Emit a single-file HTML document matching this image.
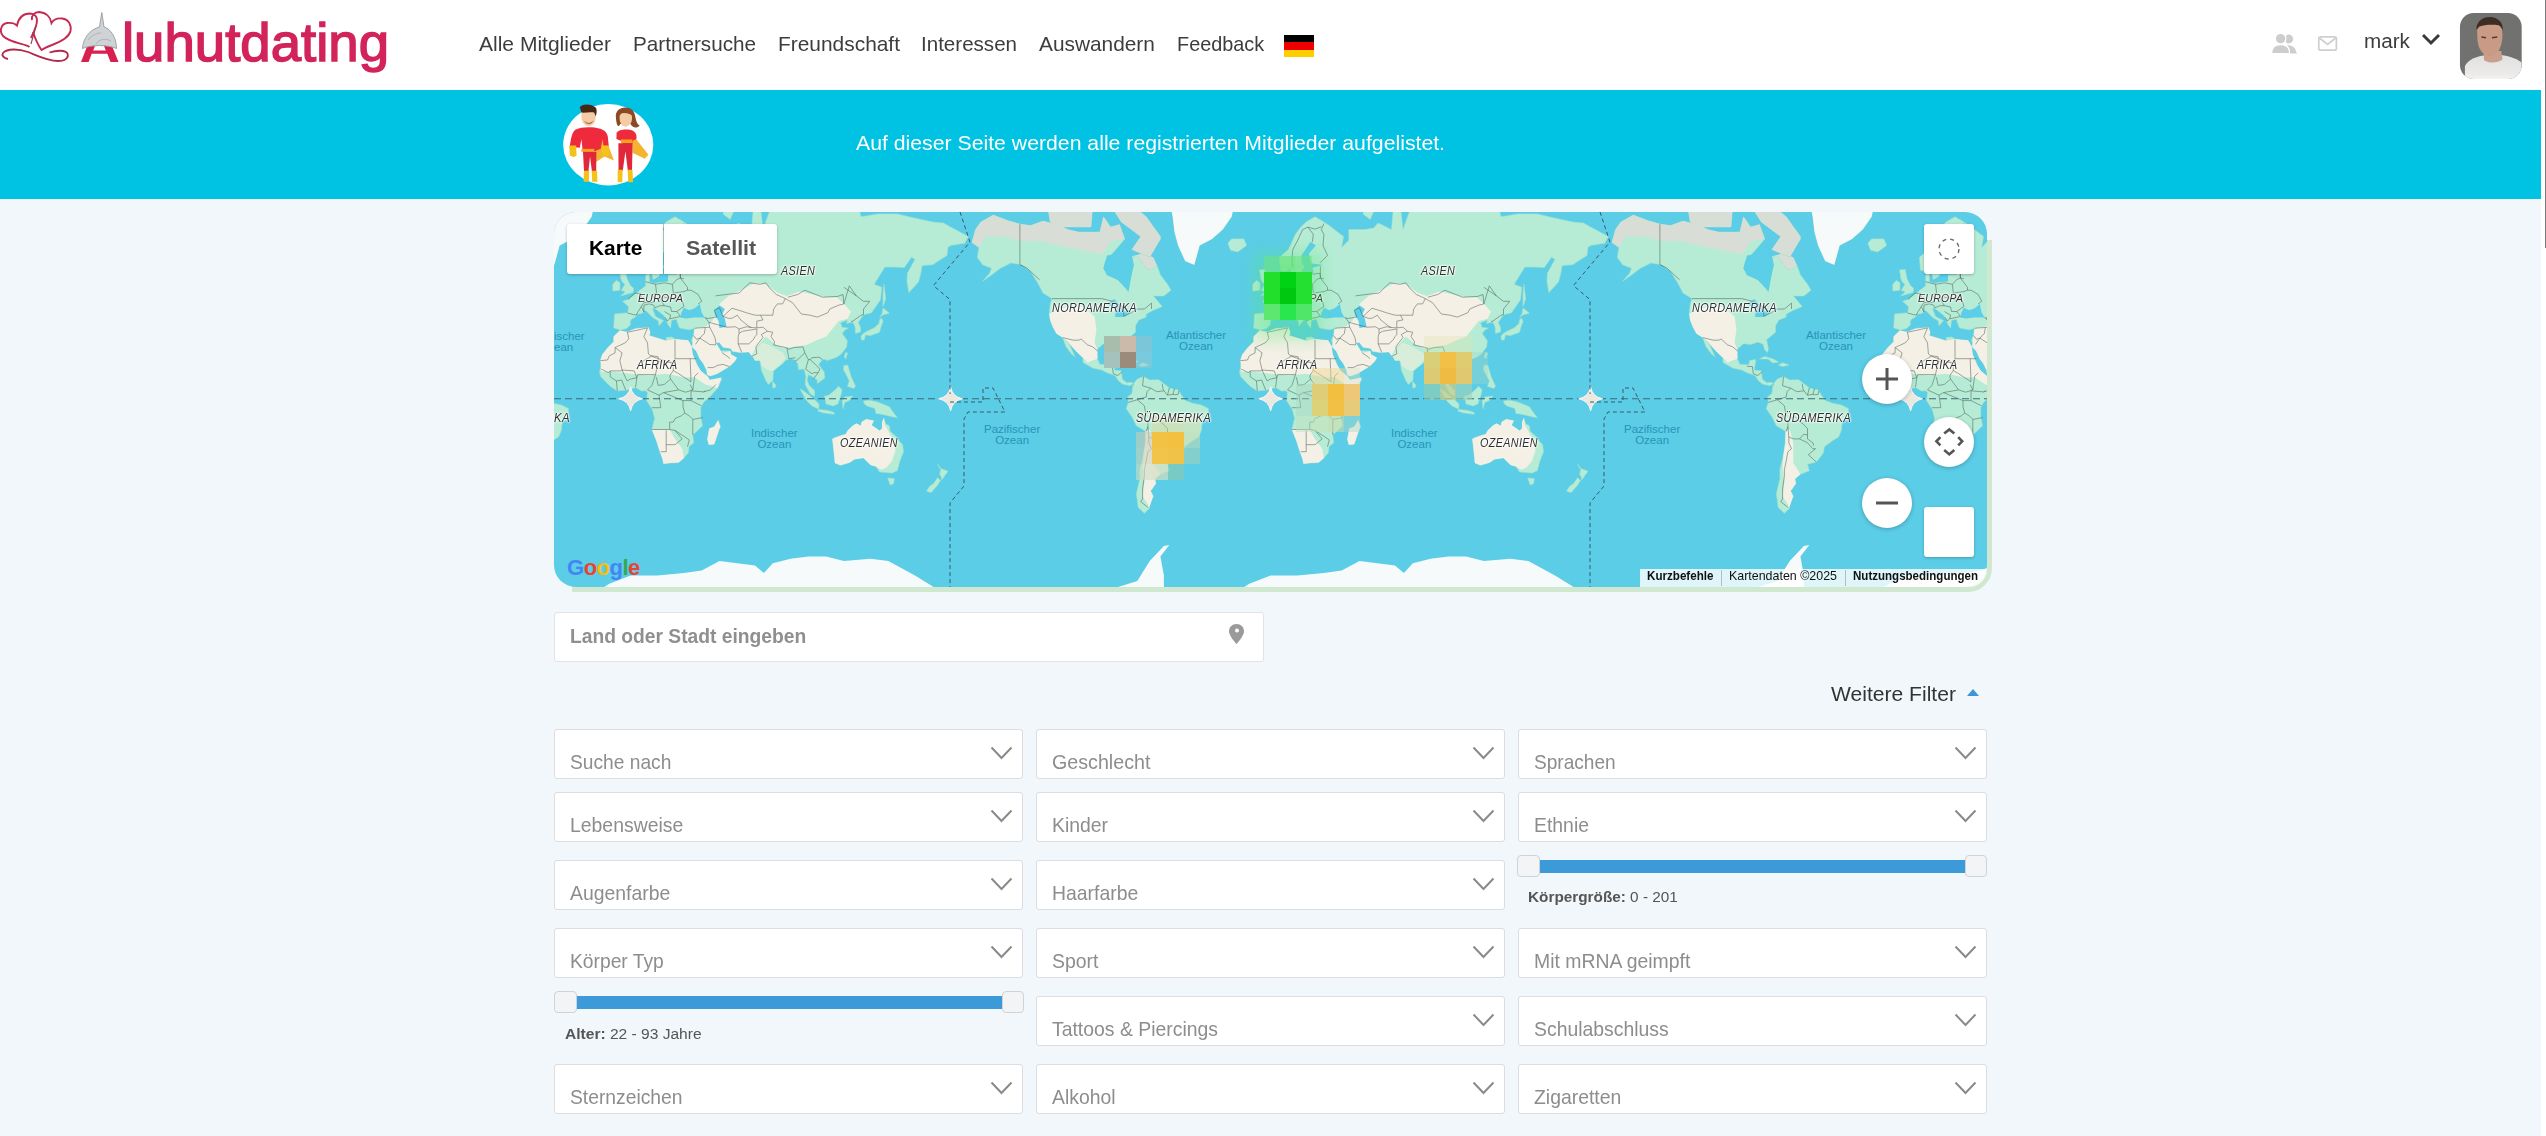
<!DOCTYPE html>
<html><head><meta charset="utf-8">
<style>
*{box-sizing:border-box;margin:0;padding:0}
html,body{width:2546px;height:1136px;overflow:hidden}
body{background:#f1f7fa;font-family:"Liberation Sans",sans-serif;position:relative}
.abs{position:absolute}
.t{position:absolute;line-height:1;white-space:nowrap;transform-origin:0 0}
#hdr{position:absolute;left:0;top:0;width:2541px;height:90px;background:#fff}
#band{position:absolute;left:0;top:90px;width:2541px;height:108.5px;background:#00c2e2}
#sb{position:absolute;left:2541px;top:0;width:5px;height:1136px;background:#fff}
#thumb{position:absolute;left:2544.5px;top:0;width:1.5px;height:248px;background:#7b7b7b}
#mapwrap{position:absolute;left:572px;top:240px;width:1420px;height:352px;border-radius:0 0 24px 0;background:#cfe8cf}
#map{position:absolute;left:554px;top:212px;width:1433px;height:375px;border-radius:22px;overflow:hidden;background:#5bcde7}
.olab{position:absolute;font-size:11.5px;color:#2a93b8;text-align:center;line-height:11px;white-space:nowrap}
.mbtn{position:absolute;background:#fff;border-radius:3px;box-shadow:0 1px 3px rgba(0,0,0,.25)}
.circ{position:absolute;width:50px;height:50px;border-radius:25px;background:#fff;box-shadow:0 1px 4px rgba(0,0,0,.25)}
.sel{position:absolute;background:#fff;border:1.5px solid #dcdde0;border-radius:3px}
.hm{position:absolute;width:16px;height:16px}
</style></head><body>
<div id="hdr"></div>
<!-- logo -->
<svg class="abs" style="left:0;top:0" width="125" height="80" viewBox="0 0 125 80">
 <path d="M29.5 47 C26 44 10 43 3 36 C-1 31 1 24 7 23 C11 22.5 15 23.5 17 25.5 C18.5 18 23 13.5 30 13.5 C36 14 38.5 18 36 26 C34.5 31 33 34 31 38" fill="none" stroke="#c62a52" stroke-width="1.9"/>
 <path d="M32 20 C31 16 34 12 39 12 C46 12.5 50.5 17 51.5 23 C54 19 58 18 62 18.5 C69 19.5 71.5 25 70.5 31 C69 38 60 42 52 45 C47 47 43.5 48.5 41.5 50 C38 45 35 38 33 32" fill="none" stroke="#c62a52" stroke-width="1.9"/>
 <path d="M36 26 L31 44" fill="none" stroke="#a03a50" stroke-width="1.1"/>
 <path d="M8 59 C3 58 1.5 55 3 53 C7 48.5 18 48.5 28 52 C38 56 48 61 58 61 C66 61 69 57 67.5 53.5 C65.5 50 57 50 49.5 52.5" fill="none" stroke="#b02a4e" stroke-width="1.8"/>
 <path d="M81 62 L93 31 L106 31 L118.5 62 L110.5 62 L107.3 53.8 L91.7 53.8 L88.6 62 Z M93.2 50.5 L105.8 50.5 L99.5 34 Z" fill="#d8204f" fill-rule="evenodd"/>
 <path d="M82.5 48.5 C83 38 90 29.5 99.5 27 L101.8 12.5 L104 27 C111 29 116.5 38 116.5 48.5 C108 44.5 91 44.5 82.5 48.5 Z" fill="#cfd3d5" stroke="#9ea4a7" stroke-width="1"/>
 <path d="M88 40 C92 35 97 33 101 33 M96 44 C99 39 106 38 111 41" fill="none" stroke="#aeb4b7" stroke-width="1"/>
</svg>
<div id="logo" class="t" style="left:122.0px;top:16.3px;font-size:53.77px;color:#d2245a;font-weight:normal;transform:scaleX(1.0148);-webkit-text-stroke:1.5px #d2245a">luhutdating</div>
<div id="n0" class="t" style="left:479.4px;top:33.0px;font-size:21.01px;color:#3d3d3d;font-weight:normal;transform:scaleX(1.0008);">Alle Mitglieder</div>
<div id="n1" class="t" style="left:633.2px;top:33.0px;font-size:21.01px;color:#3d3d3d;font-weight:normal;transform:scaleX(0.9855);">Partnersuche</div>
<div id="n2" class="t" style="left:778.2px;top:33.0px;font-size:21.01px;color:#3d3d3d;font-weight:normal;transform:scaleX(0.9953);">Freundschaft</div>
<div id="n3" class="t" style="left:921.4px;top:33.0px;font-size:21.01px;color:#3d3d3d;font-weight:normal;transform:scaleX(0.9790);">Interessen</div>
<div id="n4" class="t" style="left:1038.8px;top:33.0px;font-size:21.01px;color:#3d3d3d;font-weight:normal;transform:scaleX(0.9928);">Auswandern</div>
<div id="n5" class="t" style="left:1176.7px;top:33.0px;font-size:21.01px;color:#3d3d3d;font-weight:normal;transform:scaleX(0.9455);">Feedback</div>
<div id="mark" class="t" style="left:2363.7px;top:31.3px;font-size:20.75px;color:#3d3d3d;font-weight:normal;transform:scaleX(0.9952);">mark</div>
<div class="abs" style="left:1284px;top:35px;width:30px;height:7px;background:#000"></div>
<div class="abs" style="left:1284px;top:42px;width:30px;height:7.5px;background:#ee0000"></div>
<div class="abs" style="left:1284px;top:49.5px;width:30px;height:7.5px;background:#ffce00"></div>
<!-- right header -->
<svg class="abs" style="left:2270px;top:32px" width="30" height="24" viewBox="0 0 30 24">
 <circle cx="18.8" cy="7" r="4.4" fill="#cdcdcd"/><path d="M17 13.2 C22 13 25.5 15.5 25.8 19 L27 21.4 L20 21.4 C20 17 19 14.5 17 13.2 Z" fill="#cdcdcd"/>
 <circle cx="10.6" cy="6.6" r="5.3" fill="#cdcdcd" stroke="#fff" stroke-width="1.2"/><path d="M1.6 21.6 C1.6 15.5 5.5 12.6 10.6 12.6 C15.7 12.6 19.6 15.5 19.6 21.6 Z" fill="#cdcdcd" stroke="#fff" stroke-width="1.2"/>
</svg>
<svg class="abs" style="left:2316.5px;top:35px" width="22" height="17" viewBox="0 0 22 17">
 <rect x="1.8" y="1.8" width="17.6" height="13.4" rx="1.8" fill="none" stroke="#cfcfcf" stroke-width="1.7"/><path d="M2.5 3 L10.6 9.5 L18.7 3" fill="none" stroke="#cfcfcf" stroke-width="1.7"/>
</svg>
<svg class="abs" style="left:2421px;top:33px" width="20" height="14" viewBox="0 0 20 14"><path d="M2 2 L10 10 L18 2" fill="none" stroke="#3a3a3a" stroke-width="3"/></svg>
<svg class="abs" style="left:2455px;top:8px" width="75" height="75" viewBox="0 0 1136 1136">
 <defs><clipPath id="avc"><rect x="75" y="75" width="935" height="1000" rx="210"/></clipPath>
 <linearGradient id="shirt" x1="0" y1="0" x2="0" y2="1"><stop offset="0" stop-color="#e2e1df"/><stop offset="0.7" stop-color="#ecebea"/><stop offset="1" stop-color="#fafafa"/></linearGradient></defs>
 <g clip-path="url(#avc)">
  <rect x="0" y="0" width="1136" height="1136" fill="#717170"/>
  <path d="M150 1136 L150 880 C200 780 330 730 450 720 L720 715 C850 730 980 790 1010 830 L1010 1136 Z" fill="url(#shirt)"/>
  <path d="M430 650 L700 650 L720 780 C640 840 520 840 440 790 Z" fill="#c9a08e"/>
  <path d="M335 330 C330 230 400 150 520 150 C640 150 720 230 715 360 C725 430 715 560 660 650 C610 720 540 740 480 715 C400 690 350 600 340 480 Z" fill="#c99a84"/>
  <path d="M325 330 C320 200 420 135 530 135 C650 140 730 210 725 340 C705 300 690 270 660 260 C560 250 450 250 370 280 C350 300 340 320 325 330 Z" fill="#3e2c26"/>
  <path d="M400 440 L470 450 M560 450 L640 440" stroke="#5a3a30" stroke-width="22"/>
 </g>
</svg>
<!-- cyan band -->
<div id="band"></div>
<svg class="abs" style="left:555px;top:95px" width="110" height="100" viewBox="0 0 1250 1136">
 <ellipse cx="605" cy="565" rx="512" ry="462" fill="#fff"/>
 <path d="M450 500 L545 470 L600 560 L670 745 L560 700 L455 770 Z" fill="#f4b431"/>
 <path d="M230 395 C280 365 380 360 450 370 C520 380 585 400 600 470 L612 590 L555 600 L540 500 L520 610 L450 640 L315 640 L300 500 L282 600 L168 590 C180 480 200 420 230 395 Z" fill="#ee2a3c"/>
 <path d="M160 575 L240 575 L245 690 L215 705 L170 690 Z M530 575 L612 575 L615 690 L580 705 L535 690 Z" fill="#f5c21c"/>
 <path d="M300 612 L445 612 L445 645 L300 645 Z" fill="#f7a21a"/>
 <path d="M318 645 L470 645 L468 870 L420 870 L398 700 L380 870 L330 870 Z" fill="#e0283a"/>
 <path d="M328 860 L388 860 L385 985 L325 985 Z M418 860 L478 860 L482 985 L422 985 Z" fill="#f5c21c"/>
 <path d="M300 205 C300 150 360 130 400 140 C450 150 470 200 462 250 C458 320 430 350 380 355 C320 350 295 290 300 205 Z" fill="#f4cba4"/>
 <path d="M282 140 C300 95 420 95 465 145 C480 175 472 225 462 240 L445 200 C400 190 340 205 300 200 Z" fill="#4a2614"/>
 <path d="M340 300 C360 330 410 330 430 300" fill="none" stroke="#8a3a2a" stroke-width="10"/>
 <path d="M880 450 L1062 680 L1020 725 L880 655 Z" fill="#f4b431"/>
 <path d="M700 430 C720 395 790 385 850 395 C905 405 935 440 925 500 L885 520 L878 560 L775 560 L748 520 L698 500 Z" fill="#ee2a3c"/>
 <path d="M750 505 L880 505 L880 548 L750 548 Z" fill="#f7a21a"/>
 <path d="M720 548 L882 548 L875 860 L828 860 L800 640 L770 860 L722 860 Z" fill="#e0283a"/>
 <path d="M712 850 L768 850 L765 990 L712 990 Z M826 850 L880 850 L888 990 L832 990 Z" fill="#f5c21c"/>
 <path d="M692 255 C680 150 800 110 880 170 C925 220 905 310 962 350 C925 385 880 372 858 330 L742 330 C722 372 700 360 692 255 Z" fill="#8b4a25"/>
 <path d="M735 240 C745 185 830 180 872 230 C885 300 858 350 800 360 C755 350 730 310 735 240 Z" fill="#f4cba4"/>
 <path d="M722 215 C760 160 850 160 880 235 C840 200 780 195 722 215 Z" fill="#8b4a25"/>
</svg>
<div id="bt" class="t" style="left:856.0px;top:133.1px;font-size:20.29px;color:#fff;font-weight:normal;transform:scaleX(1.0471);">Auf dieser Seite werden alle registrierten Mitglieder aufgelistet.</div>
<div id="sb"></div><div id="thumb"></div>

<!-- map -->
<div id="mapwrap"></div>
<div id="map">
<svg class="abs" style="left:0;top:0" width="1433" height="375">
 <path d="M-858.5,17.6 L-853.2,10.0 L-840.7,3.1 L-826.5,8.5 L-814.1,12.1 L-803.4,13.6 L-791.0,9.0 L-776.7,12.6 L-766.1,17.6 L-755.4,20.0 L-741.2,20.0 L-734.1,20.0 L-730.5,4.7 L-723.4,15.1 L-714.5,12.6 L-709.2,26.9 L-718.1,37.5 L-728.7,49.0 L-730.5,56.2 L-727.0,62.9 L-716.3,67.7 L-709.2,75.3 L-705.6,79.6 L-703.8,69.2 L-700.3,52.7 L-702.1,44.2 L-695.0,45.3 L-687.8,56.2 L-682.5,57.9 L-677.2,52.7 L-673.6,62.9 L-666.5,72.3 L-663.0,78.2 L-670.1,83.9 L-680.7,83.9 L-677.2,87.9 L-671.8,94.5 L-680.7,98.3 L-687.8,102.0 L-687.8,105.1 L-695.0,107.9 L-698.5,113.7 L-698.5,120.3 L-707.4,127.7 L-705.6,136.9 L-706.5,140.5 L-709.2,137.9 L-711.0,131.9 L-716.3,130.2 L-723.4,132.5 L-730.5,131.7 L-736.7,136.9 L-736.7,146.7 L-734.1,152.4 L-725.2,152.8 L-724.3,148.6 L-718.1,147.6 L-719.8,158.0 L-712.7,158.9 L-711.8,167.1 L-707.4,170.7 L-702.1,170.2 L-700.8,172.2 L-704.7,173.4 L-711.0,172.2 L-715.4,168.9 L-719.0,163.5 L-727.0,160.7 L-732.3,158.0 L-741.2,156.1 L-751.0,150.5 L-751.0,145.7 L-757.2,139.9 L-763.4,132.9 L-767.0,128.8 L-764.3,132.9 L-759.0,144.8 L-762.5,141.9 L-767.8,134.9 L-771.4,125.6 L-777.6,121.4 L-781.2,114.8 L-783.8,107.9 L-784.7,102.0 L-783.8,91.9 L-782.1,86.6 L-791.0,81.1 L-796.3,70.8 L-803.4,59.6 L-812.3,52.7 L-823.0,50.9 L-833.6,56.2 L-842.5,62.9 L-851.4,69.2 L-844.3,61.2 L-842.5,56.2 L-851.4,52.7 L-856.7,45.3 L-855.0,35.4 L-862.1,30.4Z M-218.5,17.6 L-213.2,10.0 L-200.7,3.1 L-186.5,8.5 L-174.1,12.1 L-163.4,13.6 L-151.0,9.0 L-136.7,12.6 L-126.1,17.6 L-115.4,20.0 L-101.2,20.0 L-94.1,20.0 L-90.5,4.7 L-83.4,15.1 L-74.5,12.6 L-69.2,26.9 L-78.1,37.5 L-88.7,49.0 L-90.5,56.2 L-87.0,62.9 L-76.3,67.7 L-69.2,75.3 L-65.6,79.6 L-63.8,69.2 L-60.3,52.7 L-62.1,44.2 L-55.0,45.3 L-47.8,56.2 L-42.5,57.9 L-37.2,52.7 L-33.6,62.9 L-26.5,72.3 L-23.0,78.2 L-30.1,83.9 L-40.7,83.9 L-37.2,87.9 L-31.8,94.5 L-40.7,98.3 L-47.8,102.0 L-47.8,105.1 L-55.0,107.9 L-58.5,113.7 L-58.5,120.3 L-67.4,127.7 L-65.6,136.9 L-66.5,140.5 L-69.2,137.9 L-71.0,131.9 L-76.3,130.2 L-83.4,132.5 L-90.5,131.7 L-96.7,136.9 L-96.7,146.7 L-94.1,152.4 L-85.2,152.8 L-84.3,148.6 L-78.1,147.6 L-79.8,158.0 L-72.7,158.9 L-71.8,167.1 L-67.4,170.7 L-62.1,170.2 L-60.8,172.2 L-64.7,173.4 L-71.0,172.2 L-75.4,168.9 L-79.0,163.5 L-87.0,160.7 L-92.3,158.0 L-101.2,156.1 L-111.0,150.5 L-111.0,145.7 L-117.2,139.9 L-123.4,132.9 L-127.0,128.8 L-124.3,132.9 L-119.0,144.8 L-122.5,141.9 L-127.8,134.9 L-131.4,125.6 L-137.6,121.4 L-141.2,114.8 L-143.8,107.9 L-144.7,102.0 L-143.8,91.9 L-142.1,86.6 L-151.0,81.1 L-156.3,70.8 L-163.4,59.6 L-172.3,52.7 L-183.0,50.9 L-193.6,56.2 L-202.5,62.9 L-211.4,69.2 L-204.3,61.2 L-202.5,56.2 L-211.4,52.7 L-216.7,45.3 L-215.0,35.4 L-222.1,30.4Z M421.5,17.6 L426.8,10.0 L439.3,3.1 L453.5,8.5 L465.9,12.1 L476.6,13.6 L489.0,9.0 L503.3,12.6 L513.9,17.6 L524.6,20.0 L538.8,20.0 L545.9,20.0 L549.5,4.7 L556.6,15.1 L565.5,12.6 L570.8,26.9 L561.9,37.5 L551.3,49.0 L549.5,56.2 L553.0,62.9 L563.7,67.7 L570.8,75.3 L574.4,79.6 L576.2,69.2 L579.7,52.7 L577.9,44.2 L585.0,45.3 L592.2,56.2 L597.5,57.9 L602.8,52.7 L606.4,62.9 L613.5,72.3 L617.0,78.2 L609.9,83.9 L599.3,83.9 L602.8,87.9 L608.2,94.5 L599.3,98.3 L592.2,102.0 L592.2,105.1 L585.0,107.9 L581.5,113.7 L581.5,120.3 L572.6,127.7 L574.4,136.9 L573.5,140.5 L570.8,137.9 L569.0,131.9 L563.7,130.2 L556.6,132.5 L549.5,131.7 L543.3,136.9 L543.3,146.7 L545.9,152.4 L554.8,152.8 L555.7,148.6 L561.9,147.6 L560.2,158.0 L567.3,158.9 L568.2,167.1 L572.6,170.7 L577.9,170.2 L579.2,172.2 L575.3,173.4 L569.0,172.2 L564.6,168.9 L561.0,163.5 L553.0,160.7 L547.7,158.0 L538.8,156.1 L529.0,150.5 L529.0,145.7 L522.8,139.9 L516.6,132.9 L513.0,128.8 L515.7,132.9 L521.0,144.8 L517.5,141.9 L512.2,134.9 L508.6,125.6 L502.4,121.4 L498.8,114.8 L496.2,107.9 L495.3,102.0 L496.2,91.9 L497.9,86.6 L489.0,81.1 L483.7,70.8 L476.6,59.6 L467.7,52.7 L457.0,50.9 L446.4,56.2 L437.5,62.9 L428.6,69.2 L435.7,61.2 L437.5,56.2 L428.6,52.7 L423.3,45.3 L425.0,35.4 L417.9,30.4Z M1061.5,17.6 L1066.8,10.0 L1079.3,3.1 L1093.5,8.5 L1105.9,12.1 L1116.6,13.6 L1129.0,9.0 L1143.3,12.6 L1153.9,17.6 L1164.6,20.0 L1178.8,20.0 L1185.9,20.0 L1189.5,4.7 L1196.6,15.1 L1205.5,12.6 L1210.8,26.9 L1201.9,37.5 L1191.3,49.0 L1189.5,56.2 L1193.0,62.9 L1203.7,67.7 L1210.8,75.3 L1214.4,79.6 L1216.2,69.2 L1219.7,52.7 L1217.9,44.2 L1225.0,45.3 L1232.2,56.2 L1237.5,57.9 L1242.8,52.7 L1246.4,62.9 L1253.5,72.3 L1257.0,78.2 L1249.9,83.9 L1239.3,83.9 L1242.8,87.9 L1248.2,94.5 L1239.3,98.3 L1232.2,102.0 L1232.2,105.1 L1225.0,107.9 L1221.5,113.7 L1221.5,120.3 L1212.6,127.7 L1214.4,136.9 L1213.5,140.5 L1210.8,137.9 L1209.0,131.9 L1203.7,130.2 L1196.6,132.5 L1189.5,131.7 L1183.3,136.9 L1183.3,146.7 L1185.9,152.4 L1194.8,152.8 L1195.7,148.6 L1201.9,147.6 L1200.2,158.0 L1207.3,158.9 L1208.2,167.1 L1212.6,170.7 L1217.9,170.2 L1219.2,172.2 L1215.3,173.4 L1209.0,172.2 L1204.6,168.9 L1201.0,163.5 L1193.0,160.7 L1187.7,158.0 L1178.8,156.1 L1169.0,150.5 L1169.0,145.7 L1162.8,139.9 L1156.6,132.9 L1153.0,128.8 L1155.7,132.9 L1161.0,144.8 L1157.5,141.9 L1152.2,134.9 L1148.6,125.6 L1142.4,121.4 L1138.8,114.8 L1136.2,107.9 L1135.3,102.0 L1136.2,91.9 L1137.9,86.6 L1129.0,81.1 L1123.7,70.8 L1116.6,59.6 L1107.7,52.7 L1097.0,50.9 L1086.4,56.2 L1077.5,62.9 L1068.6,69.2 L1075.7,61.2 L1077.5,56.2 L1068.6,52.7 L1063.3,45.3 L1065.0,35.4 L1057.9,30.4Z M1701.5,17.6 L1706.8,10.0 L1719.3,3.1 L1733.5,8.5 L1745.9,12.1 L1756.6,13.6 L1769.0,9.0 L1783.3,12.6 L1793.9,17.6 L1804.6,20.0 L1818.8,20.0 L1825.9,20.0 L1829.5,4.7 L1836.6,15.1 L1845.5,12.6 L1850.8,26.9 L1841.9,37.5 L1831.3,49.0 L1829.5,56.2 L1833.0,62.9 L1843.7,67.7 L1850.8,75.3 L1854.4,79.6 L1856.2,69.2 L1859.7,52.7 L1857.9,44.2 L1865.0,45.3 L1872.2,56.2 L1877.5,57.9 L1882.8,52.7 L1886.4,62.9 L1893.5,72.3 L1897.0,78.2 L1889.9,83.9 L1879.3,83.9 L1882.8,87.9 L1888.2,94.5 L1879.3,98.3 L1872.2,102.0 L1872.2,105.1 L1865.0,107.9 L1861.5,113.7 L1861.5,120.3 L1852.6,127.7 L1854.4,136.9 L1853.5,140.5 L1850.8,137.9 L1849.0,131.9 L1843.7,130.2 L1836.6,132.5 L1829.5,131.7 L1823.3,136.9 L1823.3,146.7 L1825.9,152.4 L1834.8,152.8 L1835.7,148.6 L1841.9,147.6 L1840.2,158.0 L1847.3,158.9 L1848.2,167.1 L1852.6,170.7 L1857.9,170.2 L1859.2,172.2 L1855.3,173.4 L1849.0,172.2 L1844.6,168.9 L1841.0,163.5 L1833.0,160.7 L1827.7,158.0 L1818.8,156.1 L1809.0,150.5 L1809.0,145.7 L1802.8,139.9 L1796.6,132.9 L1793.0,128.8 L1795.7,132.9 L1801.0,144.8 L1797.5,141.9 L1792.2,134.9 L1788.6,125.6 L1782.4,121.4 L1778.8,114.8 L1776.2,107.9 L1775.3,102.0 L1776.2,91.9 L1777.9,86.6 L1769.0,81.1 L1763.7,70.8 L1756.6,59.6 L1747.7,52.7 L1737.0,50.9 L1726.4,56.2 L1717.5,62.9 L1708.6,69.2 L1715.7,61.2 L1717.5,56.2 L1708.6,52.7 L1703.3,45.3 L1705.0,35.4 L1697.9,30.4Z M-693.2,-42.7 L-680.7,-66.6 L-661.2,-86.8 L-634.5,-102.3 L-607.8,-97.8 L-595.4,-78.0 L-584.7,-72.1 L-599.0,-42.7 L-597.2,-19.7 L-602.5,4.7 L-611.4,17.6 L-622.1,26.9 L-634.5,33.4 L-639.8,52.7 L-648.7,49.0 L-655.8,33.4 L-659.4,20.0 L-661.2,4.7 L-666.5,-23.2 L-684.3,-30.6Z M-53.2,-42.7 L-40.7,-66.6 L-21.2,-86.8 L5.5,-102.3 L32.2,-97.8 L44.6,-78.0 L55.3,-72.1 L41.0,-42.7 L42.8,-19.7 L37.5,4.7 L28.6,17.6 L17.9,26.9 L5.5,33.4 L0.2,52.7 L-8.7,49.0 L-15.8,33.4 L-19.4,20.0 L-21.2,4.7 L-26.5,-23.2 L-44.3,-30.6Z M586.8,-42.7 L599.3,-66.6 L618.8,-86.8 L645.5,-102.3 L672.2,-97.8 L684.6,-78.0 L695.3,-72.1 L681.0,-42.7 L682.8,-19.7 L677.5,4.7 L668.6,17.6 L657.9,26.9 L645.5,33.4 L640.2,52.7 L631.3,49.0 L624.2,33.4 L620.6,20.0 L618.8,4.7 L613.5,-23.2 L595.7,-30.6Z M1226.8,-42.7 L1239.3,-66.6 L1258.8,-86.8 L1285.5,-102.3 L1312.2,-97.8 L1324.6,-78.0 L1335.3,-72.1 L1321.0,-42.7 L1322.8,-19.7 L1317.5,4.7 L1308.6,17.6 L1297.9,26.9 L1285.5,33.4 L1280.2,52.7 L1271.3,49.0 L1264.2,33.4 L1260.6,20.0 L1258.8,4.7 L1253.5,-23.2 L1235.7,-30.6Z M1866.8,-42.7 L1879.3,-66.6 L1898.8,-86.8 L1925.5,-102.3 L1952.2,-97.8 L1964.6,-78.0 L1975.3,-72.1 L1961.0,-42.7 L1962.8,-19.7 L1957.5,4.7 L1948.6,17.6 L1937.9,26.9 L1925.5,33.4 L1920.2,52.7 L1911.3,49.0 L1904.2,33.4 L1900.6,20.0 L1898.8,4.7 L1893.5,-23.2 L1875.7,-30.6Z M-673.6,26.9 L-684.3,45.3 L-702.1,37.5 L-693.2,24.6 L-712.7,10.0 L-723.4,-6.8 L-705.6,-9.9 L-687.8,4.7 L-673.6,24.6Z M-33.6,26.9 L-44.3,45.3 L-62.1,37.5 L-53.2,24.6 L-72.7,10.0 L-83.4,-6.8 L-65.6,-9.9 L-47.8,4.7 L-33.6,24.6Z M606.4,26.9 L595.7,45.3 L577.9,37.5 L586.8,24.6 L567.3,10.0 L556.6,-6.8 L574.4,-9.9 L592.2,4.7 L606.4,24.6Z M1246.4,26.9 L1235.7,45.3 L1217.9,37.5 L1226.8,24.6 L1207.3,10.0 L1196.6,-6.8 L1214.4,-9.9 L1232.2,4.7 L1246.4,24.6Z M1886.4,26.9 L1875.7,45.3 L1857.9,37.5 L1866.8,24.6 L1847.3,10.0 L1836.6,-6.8 L1854.4,-9.9 L1872.2,4.7 L1886.4,24.6Z M-773.2,15.1 L-743.0,15.1 L-741.2,-6.8 L-755.4,-13.1 L-773.2,-6.8 L-785.6,-0.9 L-783.8,10.0Z M-133.2,15.1 L-103.0,15.1 L-101.2,-6.8 L-115.4,-13.1 L-133.2,-6.8 L-145.6,-0.9 L-143.8,10.0Z M506.8,15.1 L537.0,15.1 L538.8,-6.8 L524.6,-13.1 L506.8,-6.8 L494.4,-0.9 L496.2,10.0Z M1146.8,15.1 L1177.0,15.1 L1178.8,-6.8 L1164.6,-13.1 L1146.8,-6.8 L1134.4,-0.9 L1136.2,10.0Z M1786.8,15.1 L1817.0,15.1 L1818.8,-6.8 L1804.6,-13.1 L1786.8,-6.8 L1774.4,-0.9 L1776.2,10.0Z M-732.3,-0.9 L-705.6,-13.1 L-687.8,-42.7 L-673.6,-84.2 L-714.5,-97.8 L-741.2,-61.4 L-767.8,-42.7Z M-92.3,-0.9 L-65.6,-13.1 L-47.8,-42.7 L-33.6,-84.2 L-74.5,-97.8 L-101.2,-61.4 L-127.8,-42.7Z M547.7,-0.9 L574.4,-13.1 L592.2,-42.7 L606.4,-84.2 L565.5,-97.8 L538.8,-61.4 L512.2,-42.7Z M1187.7,-0.9 L1214.4,-13.1 L1232.2,-42.7 L1246.4,-84.2 L1205.5,-97.8 L1178.8,-61.4 L1152.2,-42.7Z M1827.7,-0.9 L1854.4,-13.1 L1872.2,-42.7 L1886.4,-84.2 L1845.5,-97.8 L1818.8,-61.4 L1792.2,-42.7Z M-701.2,172.5 L-696.7,167.1 L-690.5,164.6 L-684.3,168.0 L-675.4,167.7 L-670.1,171.6 L-664.7,176.1 L-655.8,177.9 L-652.3,183.6 L-648.7,188.6 L-641.6,191.2 L-632.7,193.0 L-625.6,196.6 L-625.6,202.9 L-631.8,210.1 L-632.7,218.4 L-635.4,225.0 L-641.6,228.8 L-649.6,234.7 L-650.5,240.7 L-657.6,250.1 L-666.5,252.2 L-664.7,258.8 L-673.6,262.2 L-679.0,266.8 L-678.1,271.6 L-683.4,279.1 L-680.7,284.3 L-686.1,292.5 L-685.2,296.9 L-689.6,301.3 L-695.8,295.4 L-697.6,281.7 L-694.1,266.8 L-694.1,257.7 L-690.5,242.8 L-688.7,230.8 L-688.4,219.3 L-697.6,213.8 L-702.1,204.7 L-707.8,196.6 L-705.6,190.4 L-706.5,185.0 L-702.1,181.5 L-701.2,175.2Z M-61.2,172.5 L-56.7,167.1 L-50.5,164.6 L-44.3,168.0 L-35.4,167.7 L-30.1,171.6 L-24.7,176.1 L-15.8,177.9 L-12.3,183.6 L-8.7,188.6 L-1.6,191.2 L7.3,193.0 L14.4,196.6 L14.4,202.9 L8.2,210.1 L7.3,218.4 L4.6,225.0 L-1.6,228.8 L-9.6,234.7 L-10.5,240.7 L-17.6,250.1 L-26.5,252.2 L-24.7,258.8 L-33.6,262.2 L-39.0,266.8 L-38.1,271.6 L-43.4,279.1 L-40.7,284.3 L-46.1,292.5 L-45.2,296.9 L-49.6,301.3 L-55.8,295.4 L-57.6,281.7 L-54.1,266.8 L-54.1,257.7 L-50.5,242.8 L-48.7,230.8 L-48.4,219.3 L-57.6,213.8 L-62.1,204.7 L-67.8,196.6 L-65.6,190.4 L-66.5,185.0 L-62.1,181.5 L-61.2,175.2Z M578.8,172.5 L583.3,167.1 L589.5,164.6 L595.7,168.0 L604.6,167.7 L609.9,171.6 L615.3,176.1 L624.2,177.9 L627.7,183.6 L631.3,188.6 L638.4,191.2 L647.3,193.0 L654.4,196.6 L654.4,202.9 L648.2,210.1 L647.3,218.4 L644.6,225.0 L638.4,228.8 L630.4,234.7 L629.5,240.7 L622.4,250.1 L613.5,252.2 L615.3,258.8 L606.4,262.2 L601.0,266.8 L601.9,271.6 L596.6,279.1 L599.3,284.3 L593.9,292.5 L594.8,296.9 L590.4,301.3 L584.2,295.4 L582.4,281.7 L585.9,266.8 L585.9,257.7 L589.5,242.8 L591.3,230.8 L591.6,219.3 L582.4,213.8 L577.9,204.7 L572.2,196.6 L574.4,190.4 L573.5,185.0 L577.9,181.5 L578.8,175.2Z M1218.8,172.5 L1223.3,167.1 L1229.5,164.6 L1235.7,168.0 L1244.6,167.7 L1249.9,171.6 L1255.3,176.1 L1264.2,177.9 L1267.7,183.6 L1271.3,188.6 L1278.4,191.2 L1287.3,193.0 L1294.4,196.6 L1294.4,202.9 L1288.2,210.1 L1287.3,218.4 L1284.6,225.0 L1278.4,228.8 L1270.4,234.7 L1269.5,240.7 L1262.4,250.1 L1253.5,252.2 L1255.3,258.8 L1246.4,262.2 L1241.0,266.8 L1241.9,271.6 L1236.6,279.1 L1239.3,284.3 L1233.9,292.5 L1234.8,296.9 L1230.4,301.3 L1224.2,295.4 L1222.4,281.7 L1225.9,266.8 L1225.9,257.7 L1229.5,242.8 L1231.3,230.8 L1231.6,219.3 L1222.4,213.8 L1217.9,204.7 L1212.2,196.6 L1214.4,190.4 L1213.5,185.0 L1217.9,181.5 L1218.8,175.2Z M1858.8,172.5 L1863.3,167.1 L1869.5,164.6 L1875.7,168.0 L1884.6,167.7 L1889.9,171.6 L1895.3,176.1 L1904.2,177.9 L1907.7,183.6 L1911.3,188.6 L1918.4,191.2 L1927.3,193.0 L1934.4,196.6 L1934.4,202.9 L1928.2,210.1 L1927.3,218.4 L1924.6,225.0 L1918.4,228.8 L1910.4,234.7 L1909.5,240.7 L1902.4,250.1 L1893.5,252.2 L1895.3,258.8 L1886.4,262.2 L1881.0,266.8 L1881.9,271.6 L1876.6,279.1 L1879.3,284.3 L1873.9,292.5 L1874.8,296.9 L1870.4,301.3 L1864.2,295.4 L1862.4,281.7 L1865.9,266.8 L1865.9,257.7 L1869.5,242.8 L1871.3,230.8 L1871.6,219.3 L1862.4,213.8 L1857.9,204.7 L1852.2,196.6 L1854.4,190.4 L1853.5,185.0 L1857.9,181.5 L1858.8,175.2Z M-593.6,148.6 L-591.8,142.8 L-586.5,135.9 L-580.3,129.8 L-580.3,124.6 L-574.1,118.6 L-567.0,120.1 L-558.1,116.4 L-545.6,115.5 L-543.8,120.3 L-544.7,123.5 L-536.7,126.1 L-527.8,128.8 L-527.8,125.6 L-522.5,125.0 L-519.0,127.1 L-511.8,129.0 L-506.0,128.2 L-502.1,134.9 L-505.6,131.3 L-501.2,142.8 L-496.7,153.3 L-493.2,158.9 L-486.4,164.4 L-484.3,168.0 L-472.7,165.7 L-472.7,168.0 L-476.3,176.1 L-483.4,184.1 L-490.5,190.4 L-493.2,195.7 L-493.2,204.7 L-491.4,213.8 L-501.2,223.1 L-500.3,230.8 L-505.1,234.7 L-505.6,240.7 L-510.1,245.9 L-515.4,250.5 L-524.3,251.1 L-530.5,251.8 L-531.4,246.9 L-534.1,239.7 L-537.6,228.8 L-542.1,217.5 L-539.4,206.5 L-541.7,197.5 L-547.4,188.6 L-546.5,180.6 L-548.3,178.8 L-552.7,179.1 L-558.1,175.6 L-567.0,177.9 L-576.7,179.0 L-583.8,174.3 L-587.4,170.7 L-593.3,164.4 L-594.5,160.4 L-592.7,151.4Z M46.4,148.6 L48.2,142.8 L53.5,135.9 L59.7,129.8 L59.7,124.6 L65.9,118.6 L73.0,120.1 L81.9,116.4 L94.4,115.5 L96.2,120.3 L95.3,123.5 L103.3,126.1 L112.2,128.8 L112.2,125.6 L117.5,125.0 L121.0,127.1 L128.2,129.0 L134.0,128.2 L137.9,134.9 L134.4,131.3 L138.8,142.8 L143.3,153.3 L146.8,158.9 L153.6,164.4 L155.7,168.0 L167.3,165.7 L167.3,168.0 L163.7,176.1 L156.6,184.1 L149.5,190.4 L146.8,195.7 L146.8,204.7 L148.6,213.8 L138.8,223.1 L139.7,230.8 L134.9,234.7 L134.4,240.7 L129.9,245.9 L124.6,250.5 L115.7,251.1 L109.5,251.8 L108.6,246.9 L105.9,239.7 L102.4,228.8 L97.9,217.5 L100.6,206.5 L98.3,197.5 L92.6,188.6 L93.5,180.6 L91.7,178.8 L87.3,179.1 L81.9,175.6 L73.0,177.9 L63.3,179.0 L56.2,174.3 L52.6,170.7 L46.7,164.4 L45.5,160.4 L47.3,151.4Z M686.4,148.6 L688.2,142.8 L693.5,135.9 L699.7,129.8 L699.7,124.6 L705.9,118.6 L713.0,120.1 L721.9,116.4 L734.4,115.5 L736.2,120.3 L735.3,123.5 L743.3,126.1 L752.2,128.8 L752.2,125.6 L757.5,125.0 L761.0,127.1 L768.2,129.0 L774.0,128.2 L777.9,134.9 L774.4,131.3 L778.8,142.8 L783.3,153.3 L786.8,158.9 L793.6,164.4 L795.7,168.0 L807.3,165.7 L807.3,168.0 L803.7,176.1 L796.6,184.1 L789.5,190.4 L786.8,195.7 L786.8,204.7 L788.6,213.8 L778.8,223.1 L779.7,230.8 L774.9,234.7 L774.4,240.7 L769.9,245.9 L764.6,250.5 L755.7,251.1 L749.5,251.8 L748.6,246.9 L745.9,239.7 L742.4,228.8 L737.9,217.5 L740.6,206.5 L738.3,197.5 L732.6,188.6 L733.5,180.6 L731.7,178.8 L727.3,179.1 L721.9,175.6 L713.0,177.9 L703.3,179.0 L696.2,174.3 L692.6,170.7 L686.7,164.4 L685.5,160.4 L687.3,151.4Z M1326.4,148.6 L1328.2,142.8 L1333.5,135.9 L1339.7,129.8 L1339.7,124.6 L1345.9,118.6 L1353.0,120.1 L1361.9,116.4 L1374.4,115.5 L1376.2,120.3 L1375.3,123.5 L1383.3,126.1 L1392.2,128.8 L1392.2,125.6 L1397.5,125.0 L1401.0,127.1 L1408.2,129.0 L1414.0,128.2 L1417.9,134.9 L1414.4,131.3 L1418.8,142.8 L1423.3,153.3 L1426.8,158.9 L1433.6,164.4 L1435.7,168.0 L1447.3,165.7 L1447.3,168.0 L1443.7,176.1 L1436.6,184.1 L1429.5,190.4 L1426.8,195.7 L1426.8,204.7 L1428.6,213.8 L1418.8,223.1 L1419.7,230.8 L1414.9,234.7 L1414.4,240.7 L1409.9,245.9 L1404.6,250.5 L1395.7,251.1 L1389.5,251.8 L1388.6,246.9 L1385.9,239.7 L1382.4,228.8 L1377.9,217.5 L1380.6,206.5 L1378.3,197.5 L1372.6,188.6 L1373.5,180.6 L1371.7,178.8 L1367.3,179.1 L1361.9,175.6 L1353.0,177.9 L1343.3,179.0 L1336.2,174.3 L1332.6,170.7 L1326.7,164.4 L1325.5,160.4 L1327.3,151.4Z M1966.4,148.6 L1968.2,142.8 L1973.5,135.9 L1979.7,129.8 L1979.7,124.6 L1985.9,118.6 L1993.0,120.1 L2001.9,116.4 L2014.4,115.5 L2016.2,120.3 L2015.3,123.5 L2023.3,126.1 L2032.2,128.8 L2032.2,125.6 L2037.5,125.0 L2041.0,127.1 L2048.2,129.0 L2054.0,128.2 L2057.9,134.9 L2054.4,131.3 L2058.8,142.8 L2063.3,153.3 L2066.8,158.9 L2073.6,164.4 L2075.7,168.0 L2087.3,165.7 L2087.3,168.0 L2083.7,176.1 L2076.6,184.1 L2069.5,190.4 L2066.8,195.7 L2066.8,204.7 L2068.6,213.8 L2058.8,223.1 L2059.7,230.8 L2054.9,234.7 L2054.4,240.7 L2049.9,245.9 L2044.6,250.5 L2035.7,251.1 L2029.5,251.8 L2028.6,246.9 L2025.9,239.7 L2022.4,228.8 L2017.9,217.5 L2020.6,206.5 L2018.3,197.5 L2012.6,188.6 L2013.5,180.6 L2011.7,178.8 L2007.3,179.1 L2001.9,175.6 L1993.0,177.9 L1983.3,179.0 L1976.2,174.3 L1972.6,170.7 L1966.7,164.4 L1965.5,160.4 L1967.3,151.4Z M-475.8,208.3 L-473.6,214.7 L-474.9,217.5 L-479.8,232.3 L-485.2,232.7 L-486.6,226.9 L-484.6,216.5 L-479.8,214.7Z M164.2,208.3 L166.4,214.7 L165.1,217.5 L160.2,232.3 L154.8,232.7 L153.4,226.9 L155.4,216.5 L160.2,214.7Z M804.2,208.3 L806.4,214.7 L805.1,217.5 L800.2,232.3 L794.8,232.7 L793.4,226.9 L795.4,216.5 L800.2,214.7Z M1444.2,208.3 L1446.4,214.7 L1445.1,217.5 L1440.2,232.3 L1434.8,232.7 L1433.4,226.9 L1435.4,216.5 L1440.2,214.7Z M2084.2,208.3 L2086.4,214.7 L2085.1,217.5 L2080.2,232.3 L2074.8,232.7 L2073.4,226.9 L2075.4,216.5 L2080.2,214.7Z M-580.3,115.9 L-579.4,102.0 L-566.1,100.7 L-565.5,94.5 L-571.4,89.3 L-566.1,87.4 L-560.7,83.6 L-556.3,79.9 L-548.3,73.8 L-548.3,62.9 L-544.7,61.2 L-544.7,69.8 L-540.3,71.4 L-531.4,69.8 L-526.1,69.2 L-526.1,62.9 L-520.7,62.2 L-521.6,55.5 L-511.8,53.0 L-523.4,51.6 L-525.2,41.5 L-518.4,33.4 L-523.4,29.9 L-532.3,43.4 L-532.3,50.9 L-529.6,54.4 L-535.0,64.5 L-540.6,67.7 L-543.8,56.2 L-549.2,59.6 L-553.6,57.9 L-554.5,45.3 L-545.6,37.5 L-538.5,22.3 L-533.2,15.1 L-527.8,10.0 L-519.0,4.7 L-510.1,10.0 L-504.7,13.6 L-490.5,24.6 L-492.3,35.4 L-485.2,28.2 L-485.2,17.6 L-469.2,17.6 L-460.3,16.1 L-455.8,11.1 L-442.5,17.6 L-440.7,-3.8 L-433.6,-5.6 L-431.0,17.6 L-423.8,-2.6 L-420.3,-9.9 L-408.7,-13.1 L-409.6,-19.7 L-389.2,-28.3 L-376.7,-39.3 L-362.5,-26.8 L-361.6,-9.9 L-350.1,-6.8 L-337.6,-9.9 L-332.8,4.7 L-316.3,1.9 L-296.7,1.9 L-280.7,5.8 L-261.2,10.0 L-250.5,11.1 L-243.4,15.1 L-225.6,24.6 L-229.2,31.2 L-243.4,33.4 L-246.1,35.4 L-247.0,43.4 L-255.8,49.0 L-261.2,52.7 L-271.8,53.4 L-273.6,62.9 L-275.4,69.8 L-281.6,76.7 L-285.2,80.5 L-287.0,69.2 L-286.6,61.2 L-279.0,47.2 L-282.5,45.3 L-289.6,55.5 L-298.5,55.1 L-309.2,55.1 L-319.8,72.3 L-312.2,75.3 L-313.6,87.9 L-322.5,100.7 L-330.5,102.7 L-333.2,106.8 L-335.8,110.2 L-333.4,115.9 L-333.5,119.9 L-338.5,121.4 L-338.9,114.8 L-341.2,110.0 L-347.4,111.4 L-346.5,107.9 L-353.6,110.9 L-351.8,115.5 L-345.6,115.9 L-349.2,118.1 L-351.8,121.4 L-346.7,128.8 L-347.4,134.9 L-352.7,141.9 L-357.2,145.2 L-367.0,148.6 L-368.2,147.6 L-371.4,147.6 L-375.5,152.4 L-370.0,159.8 L-369.1,165.9 L-376.7,171.5 L-376.7,168.0 L-381.2,164.9 L-385.6,162.6 L-386.9,168.4 L-384.7,173.4 L-379.4,178.8 L-379.4,184.3 L-383.8,181.8 L-388.8,172.5 L-388.1,164.4 L-389.9,157.1 L-395.4,157.6 L-396.3,151.4 L-399.8,147.6 L-402.5,146.7 L-406.1,147.3 L-408.7,148.6 L-410.5,150.9 L-420.6,158.9 L-421.2,168.4 L-425.6,172.5 L-427.9,168.9 L-432.7,158.0 L-434.0,148.6 L-439.0,148.6 L-441.6,143.8 L-445.2,140.1 L-454.1,140.5 L-461.5,139.3 L-463.3,136.5 L-471.0,135.3 L-474.5,130.4 L-478.1,130.8 L-474.2,137.5 L-471.8,140.9 L-472.2,138.7 L-463.8,138.9 L-463.0,142.4 L-457.1,145.7 L-459.4,149.6 L-464.7,154.6 L-470.6,158.0 L-476.8,161.7 L-483.4,163.9 L-486.6,163.1 L-487.5,158.0 L-490.7,151.4 L-494.1,146.9 L-497.8,138.9 L-501.9,134.7 L-501.4,131.9 L-502.6,128.2 L-500.3,122.7 L-499.4,116.4 L-504.7,117.7 L-509.2,117.0 L-514.5,115.9 L-516.8,110.2 L-517.2,107.2 L-522.5,108.2 L-523.4,115.9 L-526.1,112.5 L-528.7,105.6 L-530.5,103.2 L-539.4,96.3 L-541.5,96.5 L-538.5,104.4 L-535.0,106.3 L-530.5,108.6 L-535.0,113.7 L-535.5,109.1 L-541.2,105.6 L-544.7,102.0 L-548.3,98.5 L-552.7,101.7 L-557.7,102.0 L-557.7,104.4 L-562.5,107.2 L-563.9,110.2 L-563.4,112.5 L-567.3,116.6 L-573.2,118.1Z M59.7,115.9 L60.6,102.0 L73.9,100.7 L74.5,94.5 L68.6,89.3 L73.9,87.4 L79.3,83.6 L83.7,79.9 L91.7,73.8 L91.7,62.9 L95.3,61.2 L95.3,69.8 L99.7,71.4 L108.6,69.8 L113.9,69.2 L113.9,62.9 L119.3,62.2 L118.4,55.5 L128.2,53.0 L116.6,51.6 L114.8,41.5 L121.6,33.4 L116.6,29.9 L107.7,43.4 L107.7,50.9 L110.4,54.4 L105.0,64.5 L99.4,67.7 L96.2,56.2 L90.8,59.6 L86.4,57.9 L85.5,45.3 L94.4,37.5 L101.5,22.3 L106.8,15.1 L112.2,10.0 L121.0,4.7 L129.9,10.0 L135.3,13.6 L149.5,24.6 L147.7,35.4 L154.8,28.2 L154.8,17.6 L170.8,17.6 L179.7,16.1 L184.2,11.1 L197.5,17.6 L199.3,-3.8 L206.4,-5.6 L209.0,17.6 L216.2,-2.6 L219.7,-9.9 L231.3,-13.1 L230.4,-19.7 L250.8,-28.3 L263.3,-39.3 L277.5,-26.8 L278.4,-9.9 L289.9,-6.8 L302.4,-9.9 L307.2,4.7 L323.7,1.9 L343.3,1.9 L359.3,5.8 L378.8,10.0 L389.5,11.1 L396.6,15.1 L414.4,24.6 L410.8,31.2 L396.6,33.4 L393.9,35.4 L393.0,43.4 L384.2,49.0 L378.8,52.7 L368.2,53.4 L366.4,62.9 L364.6,69.8 L358.4,76.7 L354.8,80.5 L353.0,69.2 L353.4,61.2 L361.0,47.2 L357.5,45.3 L350.4,55.5 L341.5,55.1 L330.8,55.1 L320.2,72.3 L327.8,75.3 L326.4,87.9 L317.5,100.7 L309.5,102.7 L306.8,106.8 L304.2,110.2 L306.6,115.9 L306.5,119.9 L301.5,121.4 L301.1,114.8 L298.8,110.0 L292.6,111.4 L293.5,107.9 L286.4,110.9 L288.2,115.5 L294.4,115.9 L290.8,118.1 L288.2,121.4 L293.3,128.8 L292.6,134.9 L287.3,141.9 L282.8,145.2 L273.0,148.6 L271.8,147.6 L268.6,147.6 L264.5,152.4 L270.0,159.8 L270.9,165.9 L263.3,171.5 L263.3,168.0 L258.8,164.9 L254.4,162.6 L253.1,168.4 L255.3,173.4 L260.6,178.8 L260.6,184.3 L256.2,181.8 L251.2,172.5 L251.9,164.4 L250.1,157.1 L244.6,157.6 L243.7,151.4 L240.2,147.6 L237.5,146.7 L233.9,147.3 L231.3,148.6 L229.5,150.9 L219.4,158.9 L218.8,168.4 L214.4,172.5 L212.1,168.9 L207.3,158.0 L206.0,148.6 L201.0,148.6 L198.4,143.8 L194.8,140.1 L185.9,140.5 L178.5,139.3 L176.7,136.5 L169.0,135.3 L165.5,130.4 L161.9,130.8 L165.8,137.5 L168.2,140.9 L167.8,138.7 L176.2,138.9 L177.0,142.4 L182.9,145.7 L180.6,149.6 L175.3,154.6 L169.4,158.0 L163.2,161.7 L156.6,163.9 L153.4,163.1 L152.5,158.0 L149.3,151.4 L145.9,146.9 L142.2,138.9 L138.1,134.7 L138.6,131.9 L137.4,128.2 L139.7,122.7 L140.6,116.4 L135.3,117.7 L130.8,117.0 L125.5,115.9 L123.2,110.2 L122.8,107.2 L117.5,108.2 L116.6,115.9 L113.9,112.5 L111.3,105.6 L109.5,103.2 L100.6,96.3 L98.5,96.5 L101.5,104.4 L105.0,106.3 L109.5,108.6 L105.0,113.7 L104.5,109.1 L98.8,105.6 L95.3,102.0 L91.7,98.5 L87.3,101.7 L82.3,102.0 L82.3,104.4 L77.5,107.2 L76.1,110.2 L76.6,112.5 L72.7,116.6 L66.8,118.1Z M699.7,115.9 L700.6,102.0 L713.9,100.7 L714.5,94.5 L708.6,89.3 L713.9,87.4 L719.3,83.6 L723.7,79.9 L731.7,73.8 L731.7,62.9 L735.3,61.2 L735.3,69.8 L739.7,71.4 L748.6,69.8 L753.9,69.2 L753.9,62.9 L759.3,62.2 L758.4,55.5 L768.2,53.0 L756.6,51.6 L754.8,41.5 L761.6,33.4 L756.6,29.9 L747.7,43.4 L747.7,50.9 L750.4,54.4 L745.0,64.5 L739.4,67.7 L736.2,56.2 L730.8,59.6 L726.4,57.9 L725.5,45.3 L734.4,37.5 L741.5,22.3 L746.8,15.1 L752.2,10.0 L761.0,4.7 L769.9,10.0 L775.3,13.6 L789.5,24.6 L787.7,35.4 L794.8,28.2 L794.8,17.6 L810.8,17.6 L819.7,16.1 L824.2,11.1 L837.5,17.6 L839.3,-3.8 L846.4,-5.6 L849.0,17.6 L856.2,-2.6 L859.7,-9.9 L871.3,-13.1 L870.4,-19.7 L890.8,-28.3 L903.3,-39.3 L917.5,-26.8 L918.4,-9.9 L929.9,-6.8 L942.4,-9.9 L947.2,4.7 L963.7,1.9 L983.3,1.9 L999.3,5.8 L1018.8,10.0 L1029.5,11.1 L1036.6,15.1 L1054.4,24.6 L1050.8,31.2 L1036.6,33.4 L1033.9,35.4 L1033.0,43.4 L1024.2,49.0 L1018.8,52.7 L1008.2,53.4 L1006.4,62.9 L1004.6,69.8 L998.4,76.7 L994.8,80.5 L993.0,69.2 L993.4,61.2 L1001.0,47.2 L997.5,45.3 L990.4,55.5 L981.5,55.1 L970.8,55.1 L960.2,72.3 L967.8,75.3 L966.4,87.9 L957.5,100.7 L949.5,102.7 L946.8,106.8 L944.2,110.2 L946.6,115.9 L946.5,119.9 L941.5,121.4 L941.1,114.8 L938.8,110.0 L932.6,111.4 L933.5,107.9 L926.4,110.9 L928.2,115.5 L934.4,115.9 L930.8,118.1 L928.2,121.4 L933.3,128.8 L932.6,134.9 L927.3,141.9 L922.8,145.2 L913.0,148.6 L911.8,147.6 L908.6,147.6 L904.5,152.4 L910.0,159.8 L910.9,165.9 L903.3,171.5 L903.3,168.0 L898.8,164.9 L894.4,162.6 L893.1,168.4 L895.3,173.4 L900.6,178.8 L900.6,184.3 L896.2,181.8 L891.2,172.5 L891.9,164.4 L890.1,157.1 L884.6,157.6 L883.7,151.4 L880.2,147.6 L877.5,146.7 L873.9,147.3 L871.3,148.6 L869.5,150.9 L859.4,158.9 L858.8,168.4 L854.4,172.5 L852.1,168.9 L847.3,158.0 L846.0,148.6 L841.0,148.6 L838.4,143.8 L834.8,140.1 L825.9,140.5 L818.5,139.3 L816.7,136.5 L809.0,135.3 L805.5,130.4 L801.9,130.8 L805.8,137.5 L808.2,140.9 L807.8,138.7 L816.2,138.9 L817.0,142.4 L822.9,145.7 L820.6,149.6 L815.3,154.6 L809.4,158.0 L803.2,161.7 L796.6,163.9 L793.4,163.1 L792.5,158.0 L789.3,151.4 L785.9,146.9 L782.2,138.9 L778.1,134.7 L778.6,131.9 L777.4,128.2 L779.7,122.7 L780.6,116.4 L775.3,117.7 L770.8,117.0 L765.5,115.9 L763.2,110.2 L762.8,107.2 L757.5,108.2 L756.6,115.9 L753.9,112.5 L751.3,105.6 L749.5,103.2 L740.6,96.3 L738.5,96.5 L741.5,104.4 L745.0,106.3 L749.5,108.6 L745.0,113.7 L744.5,109.1 L738.8,105.6 L735.3,102.0 L731.7,98.5 L727.3,101.7 L722.3,102.0 L722.3,104.4 L717.5,107.2 L716.1,110.2 L716.6,112.5 L712.7,116.6 L706.8,118.1Z M1339.7,115.9 L1340.6,102.0 L1353.9,100.7 L1354.5,94.5 L1348.6,89.3 L1353.9,87.4 L1359.3,83.6 L1363.7,79.9 L1371.7,73.8 L1371.7,62.9 L1375.3,61.2 L1375.3,69.8 L1379.7,71.4 L1388.6,69.8 L1393.9,69.2 L1393.9,62.9 L1399.3,62.2 L1398.4,55.5 L1408.2,53.0 L1396.6,51.6 L1394.8,41.5 L1401.6,33.4 L1396.6,29.9 L1387.7,43.4 L1387.7,50.9 L1390.4,54.4 L1385.0,64.5 L1379.4,67.7 L1376.2,56.2 L1370.8,59.6 L1366.4,57.9 L1365.5,45.3 L1374.4,37.5 L1381.5,22.3 L1386.8,15.1 L1392.2,10.0 L1401.0,4.7 L1409.9,10.0 L1415.3,13.6 L1429.5,24.6 L1427.7,35.4 L1434.8,28.2 L1434.8,17.6 L1450.8,17.6 L1459.7,16.1 L1464.2,11.1 L1477.5,17.6 L1479.3,-3.8 L1486.4,-5.6 L1489.0,17.6 L1496.2,-2.6 L1499.7,-9.9 L1511.3,-13.1 L1510.4,-19.7 L1530.8,-28.3 L1543.3,-39.3 L1557.5,-26.8 L1558.4,-9.9 L1569.9,-6.8 L1582.4,-9.9 L1587.2,4.7 L1603.7,1.9 L1623.3,1.9 L1639.3,5.8 L1658.8,10.0 L1669.5,11.1 L1676.6,15.1 L1694.4,24.6 L1690.8,31.2 L1676.6,33.4 L1673.9,35.4 L1673.0,43.4 L1664.2,49.0 L1658.8,52.7 L1648.2,53.4 L1646.4,62.9 L1644.6,69.8 L1638.4,76.7 L1634.8,80.5 L1633.0,69.2 L1633.4,61.2 L1641.0,47.2 L1637.5,45.3 L1630.4,55.5 L1621.5,55.1 L1610.8,55.1 L1600.2,72.3 L1607.8,75.3 L1606.4,87.9 L1597.5,100.7 L1589.5,102.7 L1586.8,106.8 L1584.2,110.2 L1586.6,115.9 L1586.5,119.9 L1581.5,121.4 L1581.1,114.8 L1578.8,110.0 L1572.6,111.4 L1573.5,107.9 L1566.4,110.9 L1568.2,115.5 L1574.4,115.9 L1570.8,118.1 L1568.2,121.4 L1573.3,128.8 L1572.6,134.9 L1567.3,141.9 L1562.8,145.2 L1553.0,148.6 L1551.8,147.6 L1548.6,147.6 L1544.5,152.4 L1550.0,159.8 L1550.9,165.9 L1543.3,171.5 L1543.3,168.0 L1538.8,164.9 L1534.4,162.6 L1533.1,168.4 L1535.3,173.4 L1540.6,178.8 L1540.6,184.3 L1536.2,181.8 L1531.2,172.5 L1531.9,164.4 L1530.1,157.1 L1524.6,157.6 L1523.7,151.4 L1520.2,147.6 L1517.5,146.7 L1513.9,147.3 L1511.3,148.6 L1509.5,150.9 L1499.4,158.9 L1498.8,168.4 L1494.4,172.5 L1492.1,168.9 L1487.3,158.0 L1486.0,148.6 L1481.0,148.6 L1478.4,143.8 L1474.8,140.1 L1465.9,140.5 L1458.5,139.3 L1456.7,136.5 L1449.0,135.3 L1445.5,130.4 L1441.9,130.8 L1445.8,137.5 L1448.2,140.9 L1447.8,138.7 L1456.2,138.9 L1457.0,142.4 L1462.9,145.7 L1460.6,149.6 L1455.3,154.6 L1449.4,158.0 L1443.2,161.7 L1436.6,163.9 L1433.4,163.1 L1432.5,158.0 L1429.3,151.4 L1425.9,146.9 L1422.2,138.9 L1418.1,134.7 L1418.6,131.9 L1417.4,128.2 L1419.7,122.7 L1420.6,116.4 L1415.3,117.7 L1410.8,117.0 L1405.5,115.9 L1403.2,110.2 L1402.8,107.2 L1397.5,108.2 L1396.6,115.9 L1393.9,112.5 L1391.3,105.6 L1389.5,103.2 L1380.6,96.3 L1378.5,96.5 L1381.5,104.4 L1385.0,106.3 L1389.5,108.6 L1385.0,113.7 L1384.5,109.1 L1378.8,105.6 L1375.3,102.0 L1371.7,98.5 L1367.3,101.7 L1362.3,102.0 L1362.3,104.4 L1357.5,107.2 L1356.1,110.2 L1356.6,112.5 L1352.7,116.6 L1346.8,118.1Z M1979.7,115.9 L1980.6,102.0 L1993.9,100.7 L1994.5,94.5 L1988.6,89.3 L1993.9,87.4 L1999.3,83.6 L2003.7,79.9 L2011.7,73.8 L2011.7,62.9 L2015.3,61.2 L2015.3,69.8 L2019.7,71.4 L2028.6,69.8 L2033.9,69.2 L2033.9,62.9 L2039.3,62.2 L2038.4,55.5 L2048.2,53.0 L2036.6,51.6 L2034.8,41.5 L2041.6,33.4 L2036.6,29.9 L2027.7,43.4 L2027.7,50.9 L2030.4,54.4 L2025.0,64.5 L2019.4,67.7 L2016.2,56.2 L2010.8,59.6 L2006.4,57.9 L2005.5,45.3 L2014.4,37.5 L2021.5,22.3 L2026.8,15.1 L2032.2,10.0 L2041.0,4.7 L2049.9,10.0 L2055.3,13.6 L2069.5,24.6 L2067.7,35.4 L2074.8,28.2 L2074.8,17.6 L2090.8,17.6 L2099.7,16.1 L2104.2,11.1 L2117.5,17.6 L2119.3,-3.8 L2126.4,-5.6 L2129.0,17.6 L2136.2,-2.6 L2139.7,-9.9 L2151.3,-13.1 L2150.4,-19.7 L2170.8,-28.3 L2183.3,-39.3 L2197.5,-26.8 L2198.4,-9.9 L2209.9,-6.8 L2222.4,-9.9 L2227.2,4.7 L2243.7,1.9 L2263.3,1.9 L2279.3,5.8 L2298.8,10.0 L2309.5,11.1 L2316.6,15.1 L2334.4,24.6 L2330.8,31.2 L2316.6,33.4 L2313.9,35.4 L2313.0,43.4 L2304.2,49.0 L2298.8,52.7 L2288.2,53.4 L2286.4,62.9 L2284.6,69.8 L2278.4,76.7 L2274.8,80.5 L2273.0,69.2 L2273.4,61.2 L2281.0,47.2 L2277.5,45.3 L2270.4,55.5 L2261.5,55.1 L2250.8,55.1 L2240.2,72.3 L2247.8,75.3 L2246.4,87.9 L2237.5,100.7 L2229.5,102.7 L2226.8,106.8 L2224.2,110.2 L2226.6,115.9 L2226.5,119.9 L2221.5,121.4 L2221.1,114.8 L2218.8,110.0 L2212.6,111.4 L2213.5,107.9 L2206.4,110.9 L2208.2,115.5 L2214.4,115.9 L2210.8,118.1 L2208.2,121.4 L2213.3,128.8 L2212.6,134.9 L2207.3,141.9 L2202.8,145.2 L2193.0,148.6 L2191.8,147.6 L2188.6,147.6 L2184.5,152.4 L2190.0,159.8 L2190.9,165.9 L2183.3,171.5 L2183.3,168.0 L2178.8,164.9 L2174.4,162.6 L2173.1,168.4 L2175.3,173.4 L2180.6,178.8 L2180.6,184.3 L2176.2,181.8 L2171.2,172.5 L2171.9,164.4 L2170.1,157.1 L2164.6,157.6 L2163.7,151.4 L2160.2,147.6 L2157.5,146.7 L2153.9,147.3 L2151.3,148.6 L2149.5,150.9 L2139.4,158.9 L2138.8,168.4 L2134.4,172.5 L2132.1,168.9 L2127.3,158.0 L2126.0,148.6 L2121.0,148.6 L2118.4,143.8 L2114.8,140.1 L2105.9,140.5 L2098.5,139.3 L2096.7,136.5 L2089.0,135.3 L2085.5,130.4 L2081.9,130.8 L2085.8,137.5 L2088.2,140.9 L2087.8,138.7 L2096.2,138.9 L2097.0,142.4 L2102.9,145.7 L2100.6,149.6 L2095.3,154.6 L2089.4,158.0 L2083.2,161.7 L2076.6,163.9 L2073.4,163.1 L2072.5,158.0 L2069.3,151.4 L2065.9,146.9 L2062.2,138.9 L2058.1,134.7 L2058.6,131.9 L2057.4,128.2 L2059.7,122.7 L2060.6,116.4 L2055.3,117.7 L2050.8,117.0 L2045.5,115.9 L2043.2,110.2 L2042.8,107.2 L2037.5,108.2 L2036.6,115.9 L2033.9,112.5 L2031.3,105.6 L2029.5,103.2 L2020.6,96.3 L2018.5,96.5 L2021.5,104.4 L2025.0,106.3 L2029.5,108.6 L2025.0,113.7 L2024.5,109.1 L2018.8,105.6 L2015.3,102.0 L2011.7,98.5 L2007.3,101.7 L2002.3,102.0 L2002.3,104.4 L1997.5,107.2 L1996.1,110.2 L1996.6,112.5 L1992.7,116.6 L1986.8,118.1Z M-573.5,83.9 L-560.9,80.5 L-560.4,76.2 L-563.4,73.8 L-567.0,66.7 L-568.7,57.5 L-574.4,57.9 L-573.2,66.1 L-571.9,69.8 L-569.1,72.3 L-572.6,78.2 L-568.7,79.9Z M66.5,83.9 L79.1,80.5 L79.6,76.2 L76.6,73.8 L73.0,66.7 L71.3,57.5 L65.6,57.9 L66.8,66.1 L68.1,69.8 L70.9,72.3 L67.4,78.2 L71.3,79.9Z M706.5,83.9 L719.1,80.5 L719.6,76.2 L716.6,73.8 L713.0,66.7 L711.3,57.5 L705.6,57.9 L706.8,66.1 L708.1,69.8 L710.9,72.3 L707.4,78.2 L711.3,79.9Z M1346.5,83.9 L1359.1,80.5 L1359.6,76.2 L1356.6,73.8 L1353.0,66.7 L1351.3,57.5 L1345.6,57.9 L1346.8,66.1 L1348.1,69.8 L1350.9,72.3 L1347.4,78.2 L1351.3,79.9Z M1986.5,83.9 L1999.1,80.5 L1999.6,76.2 L1996.6,73.8 L1993.0,66.7 L1991.3,57.5 L1985.6,57.9 L1986.8,66.1 L1988.1,69.8 L1990.9,72.3 L1987.4,78.2 L1991.3,79.9Z M-581.2,79.1 L-574.1,78.2 L-574.1,70.8 L-577.6,68.6 L-581.2,72.3Z M58.8,79.1 L65.9,78.2 L65.9,70.8 L62.4,68.6 L58.8,72.3Z M698.8,79.1 L705.9,78.2 L705.9,70.8 L702.4,68.6 L698.8,72.3Z M1338.8,79.1 L1345.9,78.2 L1345.9,70.8 L1342.4,68.6 L1338.8,72.3Z M1978.8,79.1 L1985.9,78.2 L1985.9,70.8 L1982.4,68.6 L1978.8,72.3Z M-606.1,31.2 L-602.5,26.9 L-590.1,26.9 L-587.4,33.4 L-596.3,39.9 L-603.4,38.3Z M33.9,31.2 L37.5,26.9 L49.9,26.9 L52.6,33.4 L43.7,39.9 L36.6,38.3Z M673.9,31.2 L677.5,26.9 L689.9,26.9 L692.6,33.4 L683.7,39.9 L676.6,38.3Z M1313.9,31.2 L1317.5,26.9 L1329.9,26.9 L1332.6,33.4 L1323.7,39.9 L1316.6,38.3Z M1953.9,31.2 L1957.5,26.9 L1969.9,26.9 L1972.6,33.4 L1963.7,39.9 L1956.6,38.3Z M-332.3,128.2 L-329.6,127.7 L-328.7,122.9 L-323.4,123.5 L-314.5,120.3 L-312.7,113.7 L-311.0,109.6 L-312.4,106.0 L-314.5,107.9 L-314.9,111.4 L-319.8,115.9 L-327.0,119.2 L-330.7,121.4 L-333.0,124.2Z M307.7,128.2 L310.4,127.7 L311.3,122.9 L316.6,123.5 L325.5,120.3 L327.3,113.7 L329.0,109.6 L327.6,106.0 L325.5,107.9 L325.1,111.4 L320.2,115.9 L313.0,119.2 L309.3,121.4 L307.0,124.2Z M947.7,128.2 L950.4,127.7 L951.3,122.9 L956.6,123.5 L965.5,120.3 L967.3,113.7 L969.0,109.6 L967.6,106.0 L965.5,107.9 L965.1,111.4 L960.2,115.9 L953.0,119.2 L949.3,121.4 L947.0,124.2Z M1587.7,128.2 L1590.4,127.7 L1591.3,122.9 L1596.6,123.5 L1605.5,120.3 L1607.3,113.7 L1609.0,109.6 L1607.6,106.0 L1605.5,107.9 L1605.1,111.4 L1600.2,115.9 L1593.0,119.2 L1589.3,121.4 L1587.0,124.2Z M2227.7,128.2 L2230.4,127.7 L2231.3,122.9 L2236.6,123.5 L2245.5,120.3 L2247.3,113.7 L2249.0,109.6 L2247.6,106.0 L2245.5,107.9 L2245.1,111.4 L2240.2,115.9 L2233.0,119.2 L2229.3,121.4 L2227.0,124.2Z M-314.5,105.6 L-311.8,103.2 L-304.7,101.2 L-311.0,96.0 L-311.8,101.5Z M325.5,105.6 L328.2,103.2 L335.3,101.2 L329.0,96.0 L328.2,101.5Z M965.5,105.6 L968.2,103.2 L975.3,101.2 L969.0,96.0 L968.2,101.5Z M1605.5,105.6 L1608.2,103.2 L1615.3,101.2 L1609.0,96.0 L1608.2,101.5Z M2245.5,105.6 L2248.2,103.2 L2255.3,101.2 L2249.0,96.0 L2248.2,101.5Z M-311.0,94.5 L-308.3,86.6 L-310.1,72.3 L-311.0,81.1Z M329.0,94.5 L331.7,86.6 L329.9,72.3 L329.0,81.1Z M969.0,94.5 L971.7,86.6 L969.9,72.3 L969.0,81.1Z M1609.0,94.5 L1611.7,86.6 L1609.9,72.3 L1609.0,81.1Z M2249.0,94.5 L2251.7,86.6 L2249.9,72.3 L2249.0,81.1Z M-349.7,144.8 L-348.3,146.9 L-346.5,140.9 L-348.3,140.5Z M290.3,144.8 L291.7,146.9 L293.5,140.9 L291.7,140.5Z M930.3,144.8 L931.7,146.9 L933.5,140.9 L931.7,140.5Z M1570.3,144.8 L1571.7,146.9 L1573.5,140.9 L1571.7,140.5Z M2210.3,144.8 L2211.7,146.9 L2213.5,140.9 L2211.7,140.5Z M-350.1,153.3 L-346.2,153.3 L-343.0,164.4 L-338.5,174.3 L-340.3,176.5 L-346.5,174.3 L-344.7,168.9 L-348.3,161.7 L-350.4,158.0Z M289.9,153.3 L293.8,153.3 L297.0,164.4 L301.5,174.3 L299.7,176.5 L293.5,174.3 L295.3,168.9 L291.7,161.7 L289.6,158.0Z M929.9,153.3 L933.8,153.3 L937.0,164.4 L941.5,174.3 L939.7,176.5 L933.5,174.3 L935.3,168.9 L931.7,161.7 L929.6,158.0Z M1569.9,153.3 L1573.8,153.3 L1577.0,164.4 L1581.5,174.3 L1579.7,176.5 L1573.5,174.3 L1575.3,168.9 L1571.7,161.7 L1569.6,158.0Z M2209.9,153.3 L2213.8,153.3 L2217.0,164.4 L2221.5,174.3 L2219.7,176.5 L2213.5,174.3 L2215.3,168.9 L2211.7,161.7 L2209.6,158.0Z M-369.6,184.1 L-367.8,192.1 L-360.7,193.9 L-356.3,192.1 L-353.6,185.0 L-351.8,177.9 L-355.4,174.3 L-359.0,177.9 L-362.5,181.1 L-366.1,183.6Z M270.4,184.1 L272.2,192.1 L279.3,193.9 L283.7,192.1 L286.4,185.0 L288.2,177.9 L284.6,174.3 L281.0,177.9 L277.5,181.1 L273.9,183.6Z M910.4,184.1 L912.2,192.1 L919.3,193.9 L923.7,192.1 L926.4,185.0 L928.2,177.9 L924.6,174.3 L921.0,177.9 L917.5,181.1 L913.9,183.6Z M1550.4,184.1 L1552.2,192.1 L1559.3,193.9 L1563.7,192.1 L1566.4,185.0 L1568.2,177.9 L1564.6,174.3 L1561.0,177.9 L1557.5,181.1 L1553.9,183.6Z M2190.4,184.1 L2192.2,192.1 L2199.3,193.9 L2203.7,192.1 L2206.4,185.0 L2208.2,177.9 L2204.6,174.3 L2201.0,177.9 L2197.5,181.1 L2193.9,183.6Z M-394.0,177.0 L-389.2,179.7 L-378.5,188.6 L-375.0,192.1 L-375.3,197.1 L-382.1,193.9 L-387.4,188.6 L-391.0,182.4Z M246.0,177.0 L250.8,179.7 L261.5,188.6 L265.0,192.1 L264.7,197.1 L257.9,193.9 L252.6,188.6 L249.0,182.4Z M886.0,177.0 L890.8,179.7 L901.5,188.6 L905.0,192.1 L904.7,197.1 L897.9,193.9 L892.6,188.6 L889.0,182.4Z M1526.0,177.0 L1530.8,179.7 L1541.5,188.6 L1545.0,192.1 L1544.7,197.1 L1537.9,193.9 L1532.6,188.6 L1529.0,182.4Z M2166.0,177.0 L2170.8,179.7 L2181.5,188.6 L2185.0,192.1 L2184.7,197.1 L2177.9,193.9 L2172.6,188.6 L2169.0,182.4Z M-376.4,198.9 L-375.0,197.5 L-366.1,198.4 L-359.8,200.5 L-359.8,202.3 L-371.4,200.7Z M263.6,198.9 L265.0,197.5 L273.9,198.4 L280.2,200.5 L280.2,202.3 L268.6,200.7Z M903.6,198.9 L905.0,197.5 L913.9,198.4 L920.2,200.5 L920.2,202.3 L908.6,200.7Z M1543.6,198.9 L1545.0,197.5 L1553.9,198.4 L1560.2,200.5 L1560.2,202.3 L1548.6,200.7Z M2183.6,198.9 L2185.0,197.5 L2193.9,198.4 L2200.2,200.5 L2200.2,202.3 L2188.6,200.7Z M-351.0,196.6 L-349.2,190.4 L-344.7,188.6 L-341.2,184.1 L-349.2,185.0 L-351.8,188.6Z M289.0,196.6 L290.8,190.4 L295.3,188.6 L298.8,184.1 L290.8,185.0 L288.2,188.6Z M929.0,196.6 L930.8,190.4 L935.3,188.6 L938.8,184.1 L930.8,185.0 L928.2,188.6Z M1569.0,196.6 L1570.8,190.4 L1575.3,188.6 L1578.8,184.1 L1570.8,185.0 L1568.2,188.6Z M2209.0,196.6 L2210.8,190.4 L2215.3,188.6 L2218.8,184.1 L2210.8,185.0 L2208.2,188.6Z M-330.5,189.1 L-325.2,188.2 L-318.1,189.5 L-312.7,191.4 L-304.7,194.8 L-300.3,201.1 L-296.7,205.6 L-302.1,204.7 L-309.2,202.9 L-313.6,202.0 L-318.1,201.6 L-319.0,196.6 L-327.0,193.9 L-329.6,192.0Z M309.5,189.1 L314.8,188.2 L321.9,189.5 L327.3,191.4 L335.3,194.8 L339.7,201.1 L343.3,205.6 L337.9,204.7 L330.8,202.9 L326.4,202.0 L321.9,201.6 L321.0,196.6 L313.0,193.9 L310.4,192.0Z M949.5,189.1 L954.8,188.2 L961.9,189.5 L967.3,191.4 L975.3,194.8 L979.7,201.1 L983.3,205.6 L977.9,204.7 L970.8,202.9 L966.4,202.0 L961.9,201.6 L961.0,196.6 L953.0,193.9 L950.4,192.0Z M1589.5,189.1 L1594.8,188.2 L1601.9,189.5 L1607.3,191.4 L1615.3,194.8 L1619.7,201.1 L1623.3,205.6 L1617.9,204.7 L1610.8,202.9 L1606.4,202.0 L1601.9,201.6 L1601.0,196.6 L1593.0,193.9 L1590.4,192.0Z M2229.5,189.1 L2234.8,188.2 L2241.9,189.5 L2247.3,191.4 L2255.3,194.8 L2259.7,201.1 L2263.3,205.6 L2257.9,204.7 L2250.8,202.9 L2246.4,202.0 L2241.9,201.6 L2241.0,196.6 L2233.0,193.9 L2230.4,192.0Z M-421.5,169.3 L-418.0,173.4 L-419.4,176.1 L-421.2,175.8Z M218.5,169.3 L222.0,173.4 L220.6,176.1 L218.8,175.8Z M858.5,169.3 L862.0,173.4 L860.6,176.1 L858.8,175.8Z M1498.5,169.3 L1502.0,173.4 L1500.6,176.1 L1498.8,175.8Z M2138.5,169.3 L2142.0,173.4 L2140.6,176.1 L2138.8,175.8Z M-361.6,226.9 L-360.7,234.7 L-359.0,251.1 L-353.6,253.3 L-344.7,250.7 L-339.4,247.3 L-330.5,245.9 L-323.4,252.9 L-318.1,254.4 L-314.5,259.9 L-307.4,260.6 L-302.1,261.1 L-296.7,258.8 L-294.1,249.0 L-290.5,239.7 L-291.4,232.7 L-295.8,227.9 L-298.5,224.0 L-303.8,219.3 L-304.7,213.8 L-308.3,211.9 L-310.1,205.9 L-311.8,210.1 L-311.8,216.5 L-314.5,218.8 L-319.0,215.6 L-322.5,213.2 L-320.2,208.7 L-327.8,207.2 L-332.3,210.1 L-333.2,213.8 L-337.6,211.6 L-341.2,213.8 L-346.2,218.4 L-348.3,222.2 L-353.6,223.7 L-359.8,226.0Z M278.4,226.9 L279.3,234.7 L281.0,251.1 L286.4,253.3 L295.3,250.7 L300.6,247.3 L309.5,245.9 L316.6,252.9 L321.9,254.4 L325.5,259.9 L332.6,260.6 L337.9,261.1 L343.3,258.8 L345.9,249.0 L349.5,239.7 L348.6,232.7 L344.2,227.9 L341.5,224.0 L336.2,219.3 L335.3,213.8 L331.7,211.9 L329.9,205.9 L328.2,210.1 L328.2,216.5 L325.5,218.8 L321.0,215.6 L317.5,213.2 L319.8,208.7 L312.2,207.2 L307.7,210.1 L306.8,213.8 L302.4,211.6 L298.8,213.8 L293.8,218.4 L291.7,222.2 L286.4,223.7 L280.2,226.0Z M918.4,226.9 L919.3,234.7 L921.0,251.1 L926.4,253.3 L935.3,250.7 L940.6,247.3 L949.5,245.9 L956.6,252.9 L961.9,254.4 L965.5,259.9 L972.6,260.6 L977.9,261.1 L983.3,258.8 L985.9,249.0 L989.5,239.7 L988.6,232.7 L984.2,227.9 L981.5,224.0 L976.2,219.3 L975.3,213.8 L971.7,211.9 L969.9,205.9 L968.2,210.1 L968.2,216.5 L965.5,218.8 L961.0,215.6 L957.5,213.2 L959.8,208.7 L952.2,207.2 L947.7,210.1 L946.8,213.8 L942.4,211.6 L938.8,213.8 L933.8,218.4 L931.7,222.2 L926.4,223.7 L920.2,226.0Z M1558.4,226.9 L1559.3,234.7 L1561.0,251.1 L1566.4,253.3 L1575.3,250.7 L1580.6,247.3 L1589.5,245.9 L1596.6,252.9 L1601.9,254.4 L1605.5,259.9 L1612.6,260.6 L1617.9,261.1 L1623.3,258.8 L1625.9,249.0 L1629.5,239.7 L1628.6,232.7 L1624.2,227.9 L1621.5,224.0 L1616.2,219.3 L1615.3,213.8 L1611.7,211.9 L1609.9,205.9 L1608.2,210.1 L1608.2,216.5 L1605.5,218.8 L1601.0,215.6 L1597.5,213.2 L1599.8,208.7 L1592.2,207.2 L1587.7,210.1 L1586.8,213.8 L1582.4,211.6 L1578.8,213.8 L1573.8,218.4 L1571.7,222.2 L1566.4,223.7 L1560.2,226.0Z M2198.4,226.9 L2199.3,234.7 L2201.0,251.1 L2206.4,253.3 L2215.3,250.7 L2220.6,247.3 L2229.5,245.9 L2236.6,252.9 L2241.9,254.4 L2245.5,259.9 L2252.6,260.6 L2257.9,261.1 L2263.3,258.8 L2265.9,249.0 L2269.5,239.7 L2268.6,232.7 L2264.2,227.9 L2261.5,224.0 L2256.2,219.3 L2255.3,213.8 L2251.7,211.9 L2249.9,205.9 L2248.2,210.1 L2248.2,216.5 L2245.5,218.8 L2241.0,215.6 L2237.5,213.2 L2239.8,208.7 L2232.2,207.2 L2227.7,210.1 L2226.8,213.8 L2222.4,211.6 L2218.8,213.8 L2213.8,218.4 L2211.7,222.2 L2206.4,223.7 L2200.2,226.0Z M-306.2,266.1 L-299.8,266.6 L-300.3,271.6 L-303.8,273.1Z M333.8,266.1 L340.2,266.6 L339.7,271.6 L336.2,273.1Z M973.8,266.1 L980.2,266.6 L979.7,271.6 L976.2,273.1Z M1613.8,266.1 L1620.2,266.6 L1619.7,271.6 L1616.2,273.1Z M2253.8,266.1 L2260.2,266.6 L2259.7,271.6 L2256.2,273.1Z M-256.4,252.0 L-253.2,256.6 L-246.1,259.3 L-249.1,263.4 L-252.3,268.0 L-253.0,264.0 L-254.4,262.7 L-253.2,257.7Z M383.6,252.0 L386.8,256.6 L393.9,259.3 L390.9,263.4 L387.7,268.0 L387.0,264.0 L385.6,262.7 L386.8,257.7Z M1023.6,252.0 L1026.8,256.6 L1033.9,259.3 L1030.9,263.4 L1027.7,268.0 L1027.0,264.0 L1025.6,262.7 L1026.8,257.7Z M1663.6,252.0 L1666.8,256.6 L1673.9,259.3 L1670.9,263.4 L1667.7,268.0 L1667.0,264.0 L1665.6,262.7 L1666.8,257.7Z M2303.6,252.0 L2306.8,256.6 L2313.9,259.3 L2310.9,263.4 L2307.7,268.0 L2307.0,264.0 L2305.6,262.7 L2306.8,257.7Z M-256.4,265.7 L-253.5,268.5 L-256.7,273.6 L-259.4,276.6 L-263.0,280.7 L-267.4,279.1 L-264.2,274.1 L-260.3,271.4Z M383.6,265.7 L386.5,268.5 L383.3,273.6 L380.6,276.6 L377.0,280.7 L372.6,279.1 L375.8,274.1 L379.7,271.4Z M1023.6,265.7 L1026.5,268.5 L1023.3,273.6 L1020.6,276.6 L1017.0,280.7 L1012.6,279.1 L1015.8,274.1 L1019.7,271.4Z M1663.6,265.7 L1666.5,268.5 L1663.3,273.6 L1660.6,276.6 L1657.0,280.7 L1652.6,279.1 L1655.8,274.1 L1659.7,271.4Z M2303.6,265.7 L2306.5,268.5 L2303.3,273.6 L2300.6,276.6 L2297.0,280.7 L2292.6,279.1 L2295.8,274.1 L2299.7,271.4Z M-714.5,146.9 L-709.2,144.4 L-700.8,147.1 L-695.3,150.1 L-701.5,150.9 L-705.6,147.1Z M-74.5,146.9 L-69.2,144.4 L-60.8,147.1 L-55.3,150.1 L-61.5,150.9 L-65.6,147.1Z M565.5,146.9 L570.8,144.4 L579.2,147.1 L584.7,150.1 L578.5,150.9 L574.4,147.1Z M1205.5,146.9 L1210.8,144.4 L1219.2,147.1 L1224.7,150.1 L1218.5,150.9 L1214.4,147.1Z M1845.5,146.9 L1850.8,144.4 L1859.2,147.1 L1864.7,150.1 L1858.5,150.9 L1854.4,147.1Z M-695.7,153.3 L-691.4,150.7 L-685.0,153.1 L-690.9,154.6Z M-55.7,153.3 L-51.4,150.7 L-45.0,153.1 L-50.9,154.6Z M584.3,153.3 L588.6,150.7 L595.0,153.1 L589.1,154.6Z M1224.3,153.3 L1228.6,150.7 L1235.0,153.1 L1229.1,154.6Z M1864.3,153.3 L1868.6,150.7 L1875.0,153.1 L1869.1,154.6Z M-545.6,-56.4 L-531.4,-66.6 L-515.4,-61.4 L-524.3,-38.5 L-536.7,-34.5Z M94.4,-56.4 L108.6,-66.6 L124.6,-61.4 L115.7,-38.5 L103.3,-34.5Z M734.4,-56.4 L748.6,-66.6 L764.6,-61.4 L755.7,-38.5 L743.3,-34.5Z M1374.4,-56.4 L1388.6,-66.6 L1404.6,-61.4 L1395.7,-38.5 L1383.3,-34.5Z M2014.4,-56.4 L2028.6,-66.6 L2044.6,-61.4 L2035.7,-38.5 L2023.3,-34.5Z M-471.0,1.9 L-465.6,-13.1 L-453.2,-30.6 L-440.7,-34.5 L-460.3,-0.9 L-463.8,7.4Z M169.0,1.9 L174.4,-13.1 L186.8,-30.6 L199.3,-34.5 L179.7,-0.9 L176.2,7.4Z M809.0,1.9 L814.4,-13.1 L826.8,-30.6 L839.3,-34.5 L819.7,-0.9 L816.2,7.4Z M1449.0,1.9 L1454.4,-13.1 L1466.8,-30.6 L1479.3,-34.5 L1459.7,-0.9 L1456.2,7.4Z M2089.0,1.9 L2094.4,-13.1 L2106.8,-30.6 L2119.3,-34.5 L2099.7,-0.9 L2096.2,7.4Z" fill="#b6ecd6" stroke="#a6e0c6" stroke-width="0.6"/>
 <path d="M-862.1,30.4 L-855.0,35.4 L-847.8,24.6 L-830.1,24.6 L-812.3,29.1 L-794.5,29.1 L-773.2,33.4 L-755.4,37.5 L-737.6,41.5 L-730.5,41.5 L-723.4,29.1 L-709.2,26.9 L-714.5,12.6 L-723.4,15.1 L-730.5,4.7 L-734.1,20.0 L-741.2,20.0 L-755.4,20.0 L-766.1,17.6 L-776.7,12.6 L-791.0,9.0 L-803.4,13.6 L-814.1,12.1 L-826.5,8.5 L-840.7,3.1 L-853.2,10.0 L-858.5,17.6Z M-222.1,30.4 L-215.0,35.4 L-207.8,24.6 L-190.1,24.6 L-172.3,29.1 L-154.5,29.1 L-133.2,33.4 L-115.4,37.5 L-97.6,41.5 L-90.5,41.5 L-83.4,29.1 L-69.2,26.9 L-74.5,12.6 L-83.4,15.1 L-90.5,4.7 L-94.1,20.0 L-101.2,20.0 L-115.4,20.0 L-126.1,17.6 L-136.7,12.6 L-151.0,9.0 L-163.4,13.6 L-174.1,12.1 L-186.5,8.5 L-200.7,3.1 L-213.2,10.0 L-218.5,17.6Z M417.9,30.4 L425.0,35.4 L432.2,24.6 L449.9,24.6 L467.7,29.1 L485.5,29.1 L506.8,33.4 L524.6,37.5 L542.4,41.5 L549.5,41.5 L556.6,29.1 L570.8,26.9 L565.5,12.6 L556.6,15.1 L549.5,4.7 L545.9,20.0 L538.8,20.0 L524.6,20.0 L513.9,17.6 L503.3,12.6 L489.0,9.0 L476.6,13.6 L465.9,12.1 L453.5,8.5 L439.3,3.1 L426.8,10.0 L421.5,17.6Z M1057.9,30.4 L1065.0,35.4 L1072.2,24.6 L1089.9,24.6 L1107.7,29.1 L1125.5,29.1 L1146.8,33.4 L1164.6,37.5 L1182.4,41.5 L1189.5,41.5 L1196.6,29.1 L1210.8,26.9 L1205.5,12.6 L1196.6,15.1 L1189.5,4.7 L1185.9,20.0 L1178.8,20.0 L1164.6,20.0 L1153.9,17.6 L1143.3,12.6 L1129.0,9.0 L1116.6,13.6 L1105.9,12.1 L1093.5,8.5 L1079.3,3.1 L1066.8,10.0 L1061.5,17.6Z M1697.9,30.4 L1705.0,35.4 L1712.2,24.6 L1729.9,24.6 L1747.7,29.1 L1765.5,29.1 L1786.8,33.4 L1804.6,37.5 L1822.4,41.5 L1829.5,41.5 L1836.6,29.1 L1850.8,26.9 L1845.5,12.6 L1836.6,15.1 L1829.5,4.7 L1825.9,20.0 L1818.8,20.0 L1804.6,20.0 L1793.9,17.6 L1783.3,12.6 L1769.0,9.0 L1756.6,13.6 L1745.9,12.1 L1733.5,8.5 L1719.3,3.1 L1706.8,10.0 L1701.5,17.6Z M-702.1,44.2 L-695.0,45.3 L-687.8,56.2 L-682.5,57.9 L-677.2,52.7 L-680.7,45.3 L-691.4,41.5Z M-62.1,44.2 L-55.0,45.3 L-47.8,56.2 L-42.5,57.9 L-37.2,52.7 L-40.7,45.3 L-51.4,41.5Z M577.9,44.2 L585.0,45.3 L592.2,56.2 L597.5,57.9 L602.8,52.7 L599.3,45.3 L588.6,41.5Z M1217.9,44.2 L1225.0,45.3 L1232.2,56.2 L1237.5,57.9 L1242.8,52.7 L1239.3,45.3 L1228.6,41.5Z M1857.9,44.2 L1865.0,45.3 L1872.2,56.2 L1877.5,57.9 L1882.8,52.7 L1879.3,45.3 L1868.6,41.5Z M-673.6,26.9 L-684.3,45.3 L-702.1,37.5 L-693.2,24.6 L-712.7,10.0 L-723.4,-6.8 L-705.6,-9.9 L-687.8,4.7 L-673.6,24.6Z M-33.6,26.9 L-44.3,45.3 L-62.1,37.5 L-53.2,24.6 L-72.7,10.0 L-83.4,-6.8 L-65.6,-9.9 L-47.8,4.7 L-33.6,24.6Z M606.4,26.9 L595.7,45.3 L577.9,37.5 L586.8,24.6 L567.3,10.0 L556.6,-6.8 L574.4,-9.9 L592.2,4.7 L606.4,24.6Z M1246.4,26.9 L1235.7,45.3 L1217.9,37.5 L1226.8,24.6 L1207.3,10.0 L1196.6,-6.8 L1214.4,-9.9 L1232.2,4.7 L1246.4,24.6Z M1886.4,26.9 L1875.7,45.3 L1857.9,37.5 L1866.8,24.6 L1847.3,10.0 L1836.6,-6.8 L1854.4,-9.9 L1872.2,4.7 L1886.4,24.6Z M-732.3,-0.9 L-705.6,-13.1 L-687.8,-42.7 L-673.6,-84.2 L-714.5,-97.8 L-741.2,-61.4 L-767.8,-42.7Z M-92.3,-0.9 L-65.6,-13.1 L-47.8,-42.7 L-33.6,-84.2 L-74.5,-97.8 L-101.2,-61.4 L-127.8,-42.7Z M547.7,-0.9 L574.4,-13.1 L592.2,-42.7 L606.4,-84.2 L565.5,-97.8 L538.8,-61.4 L512.2,-42.7Z M1187.7,-0.9 L1214.4,-13.1 L1232.2,-42.7 L1246.4,-84.2 L1205.5,-97.8 L1178.8,-61.4 L1152.2,-42.7Z M1827.7,-0.9 L1854.4,-13.1 L1872.2,-42.7 L1886.4,-84.2 L1845.5,-97.8 L1818.8,-61.4 L1792.2,-42.7Z M-773.2,15.1 L-743.0,15.1 L-741.2,-6.8 L-755.4,-13.1 L-773.2,-6.8 L-785.6,-0.9 L-783.8,10.0Z M-133.2,15.1 L-103.0,15.1 L-101.2,-6.8 L-115.4,-13.1 L-133.2,-6.8 L-145.6,-0.9 L-143.8,10.0Z M506.8,15.1 L537.0,15.1 L538.8,-6.8 L524.6,-13.1 L506.8,-6.8 L494.4,-0.9 L496.2,10.0Z M1146.8,15.1 L1177.0,15.1 L1178.8,-6.8 L1164.6,-13.1 L1146.8,-6.8 L1134.4,-0.9 L1136.2,10.0Z M1786.8,15.1 L1817.0,15.1 L1818.8,-6.8 L1804.6,-13.1 L1786.8,-6.8 L1774.4,-0.9 L1776.2,10.0Z" fill="#d8ded6"/>
 <path d="M-475.8,208.3 L-473.6,214.7 L-474.9,217.5 L-479.8,232.3 L-485.2,232.7 L-486.6,226.9 L-484.6,216.5 L-479.8,214.7Z M164.2,208.3 L166.4,214.7 L165.1,217.5 L160.2,232.3 L154.8,232.7 L153.4,226.9 L155.4,216.5 L160.2,214.7Z M804.2,208.3 L806.4,214.7 L805.1,217.5 L800.2,232.3 L794.8,232.7 L793.4,226.9 L795.4,216.5 L800.2,214.7Z M1444.2,208.3 L1446.4,214.7 L1445.1,217.5 L1440.2,232.3 L1434.8,232.7 L1433.4,226.9 L1435.4,216.5 L1440.2,214.7Z M2084.2,208.3 L2086.4,214.7 L2085.1,217.5 L2080.2,232.3 L2074.8,232.7 L2073.4,226.9 L2075.4,216.5 L2080.2,214.7Z M-593.6,148.6 L-591.8,142.8 L-586.5,135.9 L-580.3,129.8 L-580.3,124.6 L-574.1,118.6 L-567.0,120.1 L-558.1,116.4 L-545.6,115.5 L-543.8,120.3 L-544.7,123.5 L-536.7,126.1 L-527.8,128.8 L-519.0,127.1 L-506.0,128.2 L-502.1,134.9 L-501.2,142.8 L-496.7,153.3 L-493.2,158.9 L-486.4,164.4 L-484.3,168.0 L-472.7,165.7 L-476.3,176.1 L-488.7,172.5 L-499.4,165.3 L-510.1,165.3 L-527.8,161.7 L-545.6,163.5 L-563.4,161.7 L-581.2,159.8 L-592.7,159.8Z M46.4,148.6 L48.2,142.8 L53.5,135.9 L59.7,129.8 L59.7,124.6 L65.9,118.6 L73.0,120.1 L81.9,116.4 L94.4,115.5 L96.2,120.3 L95.3,123.5 L103.3,126.1 L112.2,128.8 L121.0,127.1 L134.0,128.2 L137.9,134.9 L138.8,142.8 L143.3,153.3 L146.8,158.9 L153.6,164.4 L155.7,168.0 L167.3,165.7 L163.7,176.1 L151.3,172.5 L140.6,165.3 L129.9,165.3 L112.2,161.7 L94.4,163.5 L76.6,161.7 L58.8,159.8 L47.3,159.8Z M686.4,148.6 L688.2,142.8 L693.5,135.9 L699.7,129.8 L699.7,124.6 L705.9,118.6 L713.0,120.1 L721.9,116.4 L734.4,115.5 L736.2,120.3 L735.3,123.5 L743.3,126.1 L752.2,128.8 L761.0,127.1 L774.0,128.2 L777.9,134.9 L778.8,142.8 L783.3,153.3 L786.8,158.9 L793.6,164.4 L795.7,168.0 L807.3,165.7 L803.7,176.1 L791.3,172.5 L780.6,165.3 L769.9,165.3 L752.2,161.7 L734.4,163.5 L716.6,161.7 L698.8,159.8 L687.3,159.8Z M1326.4,148.6 L1328.2,142.8 L1333.5,135.9 L1339.7,129.8 L1339.7,124.6 L1345.9,118.6 L1353.0,120.1 L1361.9,116.4 L1374.4,115.5 L1376.2,120.3 L1375.3,123.5 L1383.3,126.1 L1392.2,128.8 L1401.0,127.1 L1414.0,128.2 L1417.9,134.9 L1418.8,142.8 L1423.3,153.3 L1426.8,158.9 L1433.6,164.4 L1435.7,168.0 L1447.3,165.7 L1443.7,176.1 L1431.3,172.5 L1420.6,165.3 L1409.9,165.3 L1392.2,161.7 L1374.4,163.5 L1356.6,161.7 L1338.8,159.8 L1327.3,159.8Z M1966.4,148.6 L1968.2,142.8 L1973.5,135.9 L1979.7,129.8 L1979.7,124.6 L1985.9,118.6 L1993.0,120.1 L2001.9,116.4 L2014.4,115.5 L2016.2,120.3 L2015.3,123.5 L2023.3,126.1 L2032.2,128.8 L2041.0,127.1 L2054.0,128.2 L2057.9,134.9 L2058.8,142.8 L2063.3,153.3 L2066.8,158.9 L2073.6,164.4 L2075.7,168.0 L2087.3,165.7 L2083.7,176.1 L2071.3,172.5 L2060.6,165.3 L2049.9,165.3 L2032.2,161.7 L2014.4,163.5 L1996.6,161.7 L1978.8,159.8 L1967.3,159.8Z M-501.9,134.7 L-501.4,131.9 L-500.3,122.7 L-499.4,116.4 L-488.7,114.8 L-481.6,109.1 L-478.1,102.0 L-474.5,91.9 L-465.6,83.9 L-453.2,78.2 L-439.0,70.8 L-428.3,72.3 L-415.8,81.1 L-407.0,83.9 L-394.5,79.6 L-380.3,82.5 L-367.8,85.2 L-357.2,85.2 L-350.1,91.9 L-343.0,99.5 L-346.5,106.8 L-355.4,109.1 L-362.5,118.1 L-367.8,124.6 L-378.5,128.8 L-387.4,132.9 L-394.5,133.9 L-401.6,134.9 L-410.5,135.9 L-417.6,132.9 L-423.0,128.8 L-428.3,124.6 L-433.6,130.8 L-439.0,136.9 L-442.5,143.8 L-445.2,140.1 L-454.1,140.5 L-461.5,139.3 L-463.3,136.5 L-471.0,135.3 L-474.5,130.4 L-478.1,130.8 L-474.2,137.5 L-471.8,140.9 L-463.8,138.9 L-463.0,142.4 L-457.1,145.7 L-459.4,149.6 L-464.7,154.6 L-470.6,158.0 L-476.8,161.7 L-483.4,163.9 L-486.6,163.1 L-487.5,158.0 L-490.7,151.4 L-494.1,146.9 L-497.8,138.9Z M138.1,134.7 L138.6,131.9 L139.7,122.7 L140.6,116.4 L151.3,114.8 L158.4,109.1 L161.9,102.0 L165.5,91.9 L174.4,83.9 L186.8,78.2 L201.0,70.8 L211.7,72.3 L224.2,81.1 L233.0,83.9 L245.5,79.6 L259.7,82.5 L272.2,85.2 L282.8,85.2 L289.9,91.9 L297.0,99.5 L293.5,106.8 L284.6,109.1 L277.5,118.1 L272.2,124.6 L261.5,128.8 L252.6,132.9 L245.5,133.9 L238.4,134.9 L229.5,135.9 L222.4,132.9 L217.0,128.8 L211.7,124.6 L206.4,130.8 L201.0,136.9 L197.5,143.8 L194.8,140.1 L185.9,140.5 L178.5,139.3 L176.7,136.5 L169.0,135.3 L165.5,130.4 L161.9,130.8 L165.8,137.5 L168.2,140.9 L176.2,138.9 L177.0,142.4 L182.9,145.7 L180.6,149.6 L175.3,154.6 L169.4,158.0 L163.2,161.7 L156.6,163.9 L153.4,163.1 L152.5,158.0 L149.3,151.4 L145.9,146.9 L142.2,138.9Z M778.1,134.7 L778.6,131.9 L779.7,122.7 L780.6,116.4 L791.3,114.8 L798.4,109.1 L801.9,102.0 L805.5,91.9 L814.4,83.9 L826.8,78.2 L841.0,70.8 L851.7,72.3 L864.2,81.1 L873.0,83.9 L885.5,79.6 L899.7,82.5 L912.2,85.2 L922.8,85.2 L929.9,91.9 L937.0,99.5 L933.5,106.8 L924.6,109.1 L917.5,118.1 L912.2,124.6 L901.5,128.8 L892.6,132.9 L885.5,133.9 L878.4,134.9 L869.5,135.9 L862.4,132.9 L857.0,128.8 L851.7,124.6 L846.4,130.8 L841.0,136.9 L837.5,143.8 L834.8,140.1 L825.9,140.5 L818.5,139.3 L816.7,136.5 L809.0,135.3 L805.5,130.4 L801.9,130.8 L805.8,137.5 L808.2,140.9 L816.2,138.9 L817.0,142.4 L822.9,145.7 L820.6,149.6 L815.3,154.6 L809.4,158.0 L803.2,161.7 L796.6,163.9 L793.4,163.1 L792.5,158.0 L789.3,151.4 L785.9,146.9 L782.2,138.9Z M1418.1,134.7 L1418.6,131.9 L1419.7,122.7 L1420.6,116.4 L1431.3,114.8 L1438.4,109.1 L1441.9,102.0 L1445.5,91.9 L1454.4,83.9 L1466.8,78.2 L1481.0,70.8 L1491.7,72.3 L1504.2,81.1 L1513.0,83.9 L1525.5,79.6 L1539.7,82.5 L1552.2,85.2 L1562.8,85.2 L1569.9,91.9 L1577.0,99.5 L1573.5,106.8 L1564.6,109.1 L1557.5,118.1 L1552.2,124.6 L1541.5,128.8 L1532.6,132.9 L1525.5,133.9 L1518.4,134.9 L1509.5,135.9 L1502.4,132.9 L1497.0,128.8 L1491.7,124.6 L1486.4,130.8 L1481.0,136.9 L1477.5,143.8 L1474.8,140.1 L1465.9,140.5 L1458.5,139.3 L1456.7,136.5 L1449.0,135.3 L1445.5,130.4 L1441.9,130.8 L1445.8,137.5 L1448.2,140.9 L1456.2,138.9 L1457.0,142.4 L1462.9,145.7 L1460.6,149.6 L1455.3,154.6 L1449.4,158.0 L1443.2,161.7 L1436.6,163.9 L1433.4,163.1 L1432.5,158.0 L1429.3,151.4 L1425.9,146.9 L1422.2,138.9Z M2058.1,134.7 L2058.6,131.9 L2059.7,122.7 L2060.6,116.4 L2071.3,114.8 L2078.4,109.1 L2081.9,102.0 L2085.5,91.9 L2094.4,83.9 L2106.8,78.2 L2121.0,70.8 L2131.7,72.3 L2144.2,81.1 L2153.0,83.9 L2165.5,79.6 L2179.7,82.5 L2192.2,85.2 L2202.8,85.2 L2209.9,91.9 L2217.0,99.5 L2213.5,106.8 L2204.6,109.1 L2197.5,118.1 L2192.2,124.6 L2181.5,128.8 L2172.6,132.9 L2165.5,133.9 L2158.4,134.9 L2149.5,135.9 L2142.4,132.9 L2137.0,128.8 L2131.7,124.6 L2126.4,130.8 L2121.0,136.9 L2117.5,143.8 L2114.8,140.1 L2105.9,140.5 L2098.5,139.3 L2096.7,136.5 L2089.0,135.3 L2085.5,130.4 L2081.9,130.8 L2085.8,137.5 L2088.2,140.9 L2096.2,138.9 L2097.0,142.4 L2102.9,145.7 L2100.6,149.6 L2095.3,154.6 L2089.4,158.0 L2083.2,161.7 L2076.6,163.9 L2073.4,163.1 L2072.5,158.0 L2069.3,151.4 L2065.9,146.9 L2062.2,138.9Z M-780.3,99.5 L-766.1,94.5 L-751.8,94.5 L-739.4,104.4 L-737.6,118.1 L-739.4,130.8 L-736.7,136.9 L-736.7,146.7 L-746.5,150.5 L-751.0,145.7 L-757.2,139.9 L-763.4,132.9 L-767.0,128.8 L-771.4,125.6 L-777.6,121.4 L-781.2,114.8 L-783.8,107.9 L-784.7,102.0Z M-140.3,99.5 L-126.1,94.5 L-111.8,94.5 L-99.4,104.4 L-97.6,118.1 L-99.4,130.8 L-96.7,136.9 L-96.7,146.7 L-106.5,150.5 L-111.0,145.7 L-117.2,139.9 L-123.4,132.9 L-127.0,128.8 L-131.4,125.6 L-137.6,121.4 L-141.2,114.8 L-143.8,107.9 L-144.7,102.0Z M499.7,99.5 L513.9,94.5 L528.2,94.5 L540.6,104.4 L542.4,118.1 L540.6,130.8 L543.3,136.9 L543.3,146.7 L533.5,150.5 L529.0,145.7 L522.8,139.9 L516.6,132.9 L513.0,128.8 L508.6,125.6 L502.4,121.4 L498.8,114.8 L496.2,107.9 L495.3,102.0Z M1139.7,99.5 L1153.9,94.5 L1168.2,94.5 L1180.6,104.4 L1182.4,118.1 L1180.6,130.8 L1183.3,136.9 L1183.3,146.7 L1173.5,150.5 L1169.0,145.7 L1162.8,139.9 L1156.6,132.9 L1153.0,128.8 L1148.6,125.6 L1142.4,121.4 L1138.8,114.8 L1136.2,107.9 L1135.3,102.0Z M1779.7,99.5 L1793.9,94.5 L1808.2,94.5 L1820.6,104.4 L1822.4,118.1 L1820.6,130.8 L1823.3,136.9 L1823.3,146.7 L1813.5,150.5 L1809.0,145.7 L1802.8,139.9 L1796.6,132.9 L1793.0,128.8 L1788.6,125.6 L1782.4,121.4 L1778.8,114.8 L1776.2,107.9 L1775.3,102.0Z M-361.6,226.9 L-360.7,234.7 L-359.0,251.1 L-353.6,253.3 L-344.7,250.7 L-339.4,247.3 L-330.5,245.9 L-323.4,252.9 L-318.1,254.4 L-312.7,257.7 L-307.4,255.5 L-302.1,249.0 L-298.5,238.7 L-300.3,228.8 L-305.6,219.3 L-309.2,212.9 L-310.1,205.9 L-311.8,210.1 L-311.8,216.5 L-314.5,218.8 L-319.0,215.6 L-322.5,213.2 L-320.2,208.7 L-327.8,207.2 L-332.3,210.1 L-333.2,213.8 L-337.6,211.6 L-341.2,213.8 L-346.2,218.4 L-348.3,222.2 L-353.6,223.7 L-359.8,226.0Z M278.4,226.9 L279.3,234.7 L281.0,251.1 L286.4,253.3 L295.3,250.7 L300.6,247.3 L309.5,245.9 L316.6,252.9 L321.9,254.4 L327.3,257.7 L332.6,255.5 L337.9,249.0 L341.5,238.7 L339.7,228.8 L334.4,219.3 L330.8,212.9 L329.9,205.9 L328.2,210.1 L328.2,216.5 L325.5,218.8 L321.0,215.6 L317.5,213.2 L319.8,208.7 L312.2,207.2 L307.7,210.1 L306.8,213.8 L302.4,211.6 L298.8,213.8 L293.8,218.4 L291.7,222.2 L286.4,223.7 L280.2,226.0Z M918.4,226.9 L919.3,234.7 L921.0,251.1 L926.4,253.3 L935.3,250.7 L940.6,247.3 L949.5,245.9 L956.6,252.9 L961.9,254.4 L967.3,257.7 L972.6,255.5 L977.9,249.0 L981.5,238.7 L979.7,228.8 L974.4,219.3 L970.8,212.9 L969.9,205.9 L968.2,210.1 L968.2,216.5 L965.5,218.8 L961.0,215.6 L957.5,213.2 L959.8,208.7 L952.2,207.2 L947.7,210.1 L946.8,213.8 L942.4,211.6 L938.8,213.8 L933.8,218.4 L931.7,222.2 L926.4,223.7 L920.2,226.0Z M1558.4,226.9 L1559.3,234.7 L1561.0,251.1 L1566.4,253.3 L1575.3,250.7 L1580.6,247.3 L1589.5,245.9 L1596.6,252.9 L1601.9,254.4 L1607.3,257.7 L1612.6,255.5 L1617.9,249.0 L1621.5,238.7 L1619.7,228.8 L1614.4,219.3 L1610.8,212.9 L1609.9,205.9 L1608.2,210.1 L1608.2,216.5 L1605.5,218.8 L1601.0,215.6 L1597.5,213.2 L1599.8,208.7 L1592.2,207.2 L1587.7,210.1 L1586.8,213.8 L1582.4,211.6 L1578.8,213.8 L1573.8,218.4 L1571.7,222.2 L1566.4,223.7 L1560.2,226.0Z M2198.4,226.9 L2199.3,234.7 L2201.0,251.1 L2206.4,253.3 L2215.3,250.7 L2220.6,247.3 L2229.5,245.9 L2236.6,252.9 L2241.9,254.4 L2247.3,257.7 L2252.6,255.5 L2257.9,249.0 L2261.5,238.7 L2259.7,228.8 L2254.4,219.3 L2250.8,212.9 L2249.9,205.9 L2248.2,210.1 L2248.2,216.5 L2245.5,218.8 L2241.0,215.6 L2237.5,213.2 L2239.8,208.7 L2232.2,207.2 L2227.7,210.1 L2226.8,213.8 L2222.4,211.6 L2218.8,213.8 L2213.8,218.4 L2211.7,222.2 L2206.4,223.7 L2200.2,226.0Z M-542.1,217.5 L-537.6,228.8 L-534.1,239.7 L-531.4,246.9 L-530.5,251.8 L-524.3,251.1 L-515.4,250.5 L-510.1,245.9 L-511.8,236.7 L-519.0,226.9 L-524.3,217.5Z M97.9,217.5 L102.4,228.8 L105.9,239.7 L108.6,246.9 L109.5,251.8 L115.7,251.1 L124.6,250.5 L129.9,245.9 L128.2,236.7 L121.0,226.9 L115.7,217.5Z M737.9,217.5 L742.4,228.8 L745.9,239.7 L748.6,246.9 L749.5,251.8 L755.7,251.1 L764.6,250.5 L769.9,245.9 L768.2,236.7 L761.0,226.9 L755.7,217.5Z M1377.9,217.5 L1382.4,228.8 L1385.9,239.7 L1388.6,246.9 L1389.5,251.8 L1395.7,251.1 L1404.6,250.5 L1409.9,245.9 L1408.2,236.7 L1401.0,226.9 L1395.7,217.5Z M2017.9,217.5 L2022.4,228.8 L2025.9,239.7 L2028.6,246.9 L2029.5,251.8 L2035.7,251.1 L2044.6,250.5 L2049.9,245.9 L2048.2,236.7 L2041.0,226.9 L2035.7,217.5Z M-688.4,219.3 L-688.7,230.8 L-690.5,242.8 L-691.4,255.5 L-689.6,269.2 L-691.4,284.3 L-686.1,292.5 L-685.2,296.9 L-680.7,284.3 L-683.4,279.1 L-678.1,271.6 L-679.0,266.8 L-673.6,262.2 L-680.7,251.1 L-680.7,230.8 L-684.3,217.5Z M-48.4,219.3 L-48.7,230.8 L-50.5,242.8 L-51.4,255.5 L-49.6,269.2 L-51.4,284.3 L-46.1,292.5 L-45.2,296.9 L-40.7,284.3 L-43.4,279.1 L-38.1,271.6 L-39.0,266.8 L-33.6,262.2 L-40.7,251.1 L-40.7,230.8 L-44.3,217.5Z M591.6,219.3 L591.3,230.8 L589.5,242.8 L588.6,255.5 L590.4,269.2 L588.6,284.3 L593.9,292.5 L594.8,296.9 L599.3,284.3 L596.6,279.1 L601.9,271.6 L601.0,266.8 L606.4,262.2 L599.3,251.1 L599.3,230.8 L595.7,217.5Z M1231.6,219.3 L1231.3,230.8 L1229.5,242.8 L1228.6,255.5 L1230.4,269.2 L1228.6,284.3 L1233.9,292.5 L1234.8,296.9 L1239.3,284.3 L1236.6,279.1 L1241.9,271.6 L1241.0,266.8 L1246.4,262.2 L1239.3,251.1 L1239.3,230.8 L1235.7,217.5Z M1871.6,219.3 L1871.3,230.8 L1869.5,242.8 L1868.6,255.5 L1870.4,269.2 L1868.6,284.3 L1873.9,292.5 L1874.8,296.9 L1879.3,284.3 L1876.6,279.1 L1881.9,271.6 L1881.0,266.8 L1886.4,262.2 L1879.3,251.1 L1879.3,230.8 L1875.7,217.5Z" fill="#f4f0e6"/>
 <path d="M-441.6,143.8 L-439.0,148.6 L-434.0,148.6 L-431.8,154.3 L-426.5,158.0 L-421.2,158.9 L-414.1,152.4 L-408.7,146.7 L-410.5,140.9 L-417.6,136.9 L-424.7,132.9 L-431.8,130.8 L-437.2,136.9Z M198.4,143.8 L201.0,148.6 L206.0,148.6 L208.2,154.3 L213.5,158.0 L218.8,158.9 L225.9,152.4 L231.3,146.7 L229.5,140.9 L222.4,136.9 L215.3,132.9 L208.2,130.8 L202.8,136.9Z M838.4,143.8 L841.0,148.6 L846.0,148.6 L848.2,154.3 L853.5,158.0 L858.8,158.9 L865.9,152.4 L871.3,146.7 L869.5,140.9 L862.4,136.9 L855.3,132.9 L848.2,130.8 L842.8,136.9Z M1478.4,143.8 L1481.0,148.6 L1486.0,148.6 L1488.2,154.3 L1493.5,158.0 L1498.8,158.9 L1505.9,152.4 L1511.3,146.7 L1509.5,140.9 L1502.4,136.9 L1495.3,132.9 L1488.2,130.8 L1482.8,136.9Z M2118.4,143.8 L2121.0,148.6 L2126.0,148.6 L2128.2,154.3 L2133.5,158.0 L2138.8,158.9 L2145.9,152.4 L2151.3,146.7 L2149.5,140.9 L2142.4,136.9 L2135.3,132.9 L2128.2,130.8 L2122.8,136.9Z" fill="#d8eedb"/>
 <path d="M-693.2,-42.7 L-680.7,-66.6 L-661.2,-86.8 L-634.5,-102.3 L-607.8,-97.8 L-595.4,-78.0 L-584.7,-72.1 L-599.0,-42.7 L-597.2,-19.7 L-602.5,4.7 L-611.4,17.6 L-622.1,26.9 L-634.5,33.4 L-639.8,52.7 L-648.7,49.0 L-655.8,33.4 L-659.4,20.0 L-661.2,4.7 L-666.5,-23.2 L-684.3,-30.6Z M-53.2,-42.7 L-40.7,-66.6 L-21.2,-86.8 L5.5,-102.3 L32.2,-97.8 L44.6,-78.0 L55.3,-72.1 L41.0,-42.7 L42.8,-19.7 L37.5,4.7 L28.6,17.6 L17.9,26.9 L5.5,33.4 L0.2,52.7 L-8.7,49.0 L-15.8,33.4 L-19.4,20.0 L-21.2,4.7 L-26.5,-23.2 L-44.3,-30.6Z M586.8,-42.7 L599.3,-66.6 L618.8,-86.8 L645.5,-102.3 L672.2,-97.8 L684.6,-78.0 L695.3,-72.1 L681.0,-42.7 L682.8,-19.7 L677.5,4.7 L668.6,17.6 L657.9,26.9 L645.5,33.4 L640.2,52.7 L631.3,49.0 L624.2,33.4 L620.6,20.0 L618.8,4.7 L613.5,-23.2 L595.7,-30.6Z M1226.8,-42.7 L1239.3,-66.6 L1258.8,-86.8 L1285.5,-102.3 L1312.2,-97.8 L1324.6,-78.0 L1335.3,-72.1 L1321.0,-42.7 L1322.8,-19.7 L1317.5,4.7 L1308.6,17.6 L1297.9,26.9 L1285.5,33.4 L1280.2,52.7 L1271.3,49.0 L1264.2,33.4 L1260.6,20.0 L1258.8,4.7 L1253.5,-23.2 L1235.7,-30.6Z M1866.8,-42.7 L1879.3,-66.6 L1898.8,-86.8 L1925.5,-102.3 L1952.2,-97.8 L1964.6,-78.0 L1975.3,-72.1 L1961.0,-42.7 L1962.8,-19.7 L1957.5,4.7 L1948.6,17.6 L1937.9,26.9 L1925.5,33.4 L1920.2,52.7 L1911.3,49.0 L1904.2,33.4 L1900.6,20.0 L1898.8,4.7 L1893.5,-23.2 L1875.7,-30.6Z M-883.4,416.3 L-847.8,408.1 L-830.1,404.2 L-803.4,389.9 L-776.7,386.7 L-741.2,383.5 L-723.4,377.4 L-696.7,368.9 L-684.3,349.0 L-670.1,334.1 L-664.7,332.9 L-673.6,344.5 L-670.1,363.6 L-670.1,393.3 L-643.4,416.3 L-625.6,408.1 L-607.8,386.7 L-584.7,371.7 L-563.4,363.6 L-536.7,363.6 L-510.1,361.0 L-492.3,358.5 L-474.5,349.0 L-456.7,351.3 L-439.0,353.6 L-430.1,361.0 L-421.2,351.3 L-403.4,346.7 L-385.6,344.5 L-367.8,344.5 L-350.1,349.0 L-323.4,346.7 L-305.6,349.0 L-279.0,363.6 L-261.2,374.5 L-243.4,416.3 L-243.4,505.8 L-883.4,505.8Z M-243.4,416.3 L-207.8,408.1 L-190.1,404.2 L-163.4,389.9 L-136.7,386.7 L-101.2,383.5 L-83.4,377.4 L-56.7,368.9 L-44.3,349.0 L-30.1,334.1 L-24.7,332.9 L-33.6,344.5 L-30.1,363.6 L-30.1,393.3 L-3.4,416.3 L14.4,408.1 L32.2,386.7 L55.3,371.7 L76.6,363.6 L103.3,363.6 L129.9,361.0 L147.7,358.5 L165.5,349.0 L183.3,351.3 L201.0,353.6 L209.9,361.0 L218.8,351.3 L236.6,346.7 L254.4,344.5 L272.2,344.5 L289.9,349.0 L316.6,346.7 L334.4,349.0 L361.0,363.6 L378.8,374.5 L396.6,416.3 L396.6,505.8 L-243.4,505.8Z M396.6,416.3 L432.2,408.1 L449.9,404.2 L476.6,389.9 L503.3,386.7 L538.8,383.5 L556.6,377.4 L583.3,368.9 L595.7,349.0 L609.9,334.1 L615.3,332.9 L606.4,344.5 L609.9,363.6 L609.9,393.3 L636.6,416.3 L654.4,408.1 L672.2,386.7 L695.3,371.7 L716.6,363.6 L743.3,363.6 L769.9,361.0 L787.7,358.5 L805.5,349.0 L823.3,351.3 L841.0,353.6 L849.9,361.0 L858.8,351.3 L876.6,346.7 L894.4,344.5 L912.2,344.5 L929.9,349.0 L956.6,346.7 L974.4,349.0 L1001.0,363.6 L1018.8,374.5 L1036.6,416.3 L1036.6,505.8 L396.6,505.8Z M1036.6,416.3 L1072.2,408.1 L1089.9,404.2 L1116.6,389.9 L1143.3,386.7 L1178.8,383.5 L1196.6,377.4 L1223.3,368.9 L1235.7,349.0 L1249.9,334.1 L1255.3,332.9 L1246.4,344.5 L1249.9,363.6 L1249.9,393.3 L1276.6,416.3 L1294.4,408.1 L1312.2,386.7 L1335.3,371.7 L1356.6,363.6 L1383.3,363.6 L1409.9,361.0 L1427.7,358.5 L1445.5,349.0 L1463.3,351.3 L1481.0,353.6 L1489.9,361.0 L1498.8,351.3 L1516.6,346.7 L1534.4,344.5 L1552.2,344.5 L1569.9,349.0 L1596.6,346.7 L1614.4,349.0 L1641.0,363.6 L1658.8,374.5 L1676.6,416.3 L1676.6,505.8 L1036.6,505.8Z M1676.6,416.3 L1712.2,408.1 L1729.9,404.2 L1756.6,389.9 L1783.3,386.7 L1818.8,383.5 L1836.6,377.4 L1863.3,368.9 L1875.7,349.0 L1889.9,334.1 L1895.3,332.9 L1886.4,344.5 L1889.9,363.6 L1889.9,393.3 L1916.6,416.3 L1934.4,408.1 L1952.2,386.7 L1975.3,371.7 L1996.6,363.6 L2023.3,363.6 L2049.9,361.0 L2067.7,358.5 L2085.5,349.0 L2103.3,351.3 L2121.0,353.6 L2129.9,361.0 L2138.8,351.3 L2156.6,346.7 L2174.4,344.5 L2192.2,344.5 L2209.9,349.0 L2236.6,346.7 L2254.4,349.0 L2281.0,363.6 L2298.8,374.5 L2316.6,416.3 L2316.6,505.8 L1676.6,505.8Z" fill="#f7fafa"/>
 <path d="M-513.6,105.6 L-512.7,100.7 L-510.1,95.8 L-504.7,98.3 L-499.4,96.3 L-494.1,91.9 L-492.3,100.7 L-489.3,105.6 L-499.4,105.6 L-508.3,106.5Z M126.4,105.6 L127.3,100.7 L129.9,95.8 L135.3,98.3 L140.6,96.3 L145.9,91.9 L147.7,100.7 L150.7,105.6 L140.6,105.6 L131.7,106.5Z M766.4,105.6 L767.3,100.7 L769.9,95.8 L775.3,98.3 L780.6,96.3 L785.9,91.9 L787.7,100.7 L790.7,105.6 L780.6,105.6 L771.7,106.5Z M1406.4,105.6 L1407.3,100.7 L1409.9,95.8 L1415.3,98.3 L1420.6,96.3 L1425.9,91.9 L1427.7,100.7 L1430.7,105.6 L1420.6,105.6 L1411.7,106.5Z M2046.4,105.6 L2047.3,100.7 L2049.9,95.8 L2055.3,98.3 L2060.6,96.3 L2065.9,91.9 L2067.7,100.7 L2070.7,105.6 L2060.6,105.6 L2051.7,106.5Z M-479.8,98.3 L-474.5,93.2 L-469.2,97.0 L-471.8,102.0 L-469.2,106.8 L-467.4,114.8 L-474.5,115.9 L-475.4,109.1 L-479.0,103.2Z M160.2,98.3 L165.5,93.2 L170.8,97.0 L168.2,102.0 L170.8,106.8 L172.6,114.8 L165.5,115.9 L164.6,109.1 L161.0,103.2Z M800.2,98.3 L805.5,93.2 L810.8,97.0 L808.2,102.0 L810.8,106.8 L812.6,114.8 L805.5,115.9 L804.6,109.1 L801.0,103.2Z M1440.2,98.3 L1445.5,93.2 L1450.8,97.0 L1448.2,102.0 L1450.8,106.8 L1452.6,114.8 L1445.5,115.9 L1444.6,109.1 L1441.0,103.2Z M2080.2,98.3 L2085.5,93.2 L2090.8,97.0 L2088.2,102.0 L2090.8,106.8 L2092.6,114.8 L2085.5,115.9 L2084.6,109.1 L2081.0,103.2Z M-730.5,56.2 L-727.0,62.9 L-716.3,67.7 L-709.2,75.3 L-705.6,79.6 L-703.8,69.2 L-700.3,52.7 L-702.1,44.2 L-714.5,41.5 L-727.0,43.4Z M-90.5,56.2 L-87.0,62.9 L-76.3,67.7 L-69.2,75.3 L-65.6,79.6 L-63.8,69.2 L-60.3,52.7 L-62.1,44.2 L-74.5,41.5 L-87.0,43.4Z M549.5,56.2 L553.0,62.9 L563.7,67.7 L570.8,75.3 L574.4,79.6 L576.2,69.2 L579.7,52.7 L577.9,44.2 L565.5,41.5 L553.0,43.4Z M1189.5,56.2 L1193.0,62.9 L1203.7,67.7 L1210.8,75.3 L1214.4,79.6 L1216.2,69.2 L1219.7,52.7 L1217.9,44.2 L1205.5,41.5 L1193.0,43.4Z M1829.5,56.2 L1833.0,62.9 L1843.7,67.7 L1850.8,75.3 L1854.4,79.6 L1856.2,69.2 L1859.7,52.7 L1857.9,44.2 L1845.5,41.5 L1833.0,43.4Z M-531.4,69.8 L-526.1,69.2 L-526.1,62.9 L-520.7,62.2 L-521.6,55.5 L-511.8,53.0 L-523.4,51.6 L-525.2,41.5 L-518.4,33.4 L-523.4,29.9 L-532.3,43.4 L-532.3,50.9 L-529.6,54.4 L-535.0,64.5 L-540.6,67.7Z M108.6,69.8 L113.9,69.2 L113.9,62.9 L119.3,62.2 L118.4,55.5 L128.2,53.0 L116.6,51.6 L114.8,41.5 L121.6,33.4 L116.6,29.9 L107.7,43.4 L107.7,50.9 L110.4,54.4 L105.0,64.5 L99.4,67.7Z M748.6,69.8 L753.9,69.2 L753.9,62.9 L759.3,62.2 L758.4,55.5 L768.2,53.0 L756.6,51.6 L754.8,41.5 L761.6,33.4 L756.6,29.9 L747.7,43.4 L747.7,50.9 L750.4,54.4 L745.0,64.5 L739.4,67.7Z M1388.6,69.8 L1393.9,69.2 L1393.9,62.9 L1399.3,62.2 L1398.4,55.5 L1408.2,53.0 L1396.6,51.6 L1394.8,41.5 L1401.6,33.4 L1396.6,29.9 L1387.7,43.4 L1387.7,50.9 L1390.4,54.4 L1385.0,64.5 L1379.4,67.7Z M2028.6,69.8 L2033.9,69.2 L2033.9,62.9 L2039.3,62.2 L2038.4,55.5 L2048.2,53.0 L2036.6,51.6 L2034.8,41.5 L2041.6,33.4 L2036.6,29.9 L2027.7,43.4 L2027.7,50.9 L2030.4,54.4 L2025.0,64.5 L2019.4,67.7Z M-727.0,91.9 L-719.8,87.1 L-713.6,93.2 L-705.6,97.0 L-703.8,101.2 L-711.0,105.1 L-719.0,105.1 L-718.1,97.0Z M-87.0,91.9 L-79.8,87.1 L-73.6,93.2 L-65.6,97.0 L-63.8,101.2 L-71.0,105.1 L-79.0,105.1 L-78.1,97.0Z M553.0,91.9 L560.2,87.1 L566.4,93.2 L574.4,97.0 L576.2,101.2 L569.0,105.1 L561.0,105.1 L561.9,97.0Z M1193.0,91.9 L1200.2,87.1 L1206.4,93.2 L1214.4,97.0 L1216.2,101.2 L1209.0,105.1 L1201.0,105.1 L1201.9,97.0Z M1833.0,91.9 L1840.2,87.1 L1846.4,93.2 L1854.4,97.0 L1856.2,101.2 L1849.0,105.1 L1841.0,105.1 L1841.9,97.0Z" fill="#5bcfe8"/>
 <line x1="0" y1="186.8" x2="1433" y2="186.8" stroke="#3a6a78" stroke-width="1.1" stroke-dasharray="7 4"/>
 <path transform="translate(76.6,186.8)" d="M0,-12 Q1.8,-1.8 12,0 Q1.8,1.8 0,12 Q-1.8,1.8 -12,0 Q-1.8,-1.8 0,-12 Z" fill="#ece8e0" stroke="#f8f8f8" stroke-width="1"/><path transform="translate(396.6,186.8)" d="M0,-12 Q1.8,-1.8 12,0 Q1.8,1.8 0,12 Q-1.8,1.8 -12,0 Q-1.8,-1.8 0,-12 Z" fill="#ece8e0" stroke="#f8f8f8" stroke-width="1"/><path transform="translate(716.6,186.8)" d="M0,-12 Q1.8,-1.8 12,0 Q1.8,1.8 0,12 Q-1.8,1.8 -12,0 Q-1.8,-1.8 0,-12 Z" fill="#ece8e0" stroke="#f8f8f8" stroke-width="1"/><path transform="translate(1036.6,186.8)" d="M0,-12 Q1.8,-1.8 12,0 Q1.8,1.8 0,12 Q-1.8,1.8 -12,0 Q-1.8,-1.8 0,-12 Z" fill="#ece8e0" stroke="#f8f8f8" stroke-width="1"/><path transform="translate(1356.6,186.8)" d="M0,-12 Q1.8,-1.8 12,0 Q1.8,1.8 0,12 Q-1.8,1.8 -12,0 Q-1.8,-1.8 0,-12 Z" fill="#ece8e0" stroke="#f8f8f8" stroke-width="1"/>
 <path d="M-782.1,86.6 L-732.3,86.6 L-721.6,89.3 L-711.0,94.5 L-710.1,104.4 L-703.8,101.2 L-696.7,97.0 L-689.6,97.0 L-682.5,91.1 L-682.5,97.0 M-814.1,12.1 L-814.1,52.7 L-807.0,56.2 L-794.5,67.7 M-771.4,125.6 L-760.7,128.2 L-755.4,128.2 L-752.7,127.1 L-746.5,132.9 L-741.2,134.9 L-736.2,139.1 M-727.0,154.3 L-721.6,154.6 L-720.7,161.7 L-716.3,163.5 L-711.8,159.8 M-578.9,135.5 L-568.7,130.8 L-565.2,126.7 L-566.6,120.3 M-578.9,135.5 L-578.9,140.9 L-584.7,143.8 L-586.5,148.0 L-593.6,148.6 M-578.9,135.5 L-571.9,140.9 L-574.1,148.6 L-571.9,158.0 L-573.2,158.9 L-583.8,158.9 L-585.6,160.7 L-592.7,157.1 M-546.5,115.9 L-550.1,124.6 L-546.5,130.8 L-545.6,141.9 L-543.0,143.8 L-538.5,145.7 L-521.6,151.4 L-520.7,150.5 L-519.0,146.7 L-519.0,127.7 M-566.6,120.3 L-546.5,115.9 M-519.0,146.7 L-497.6,146.7 M-556.3,152.4 L-542.1,143.8 L-535.8,144.8 L-535.8,149.6 L-538.5,162.6 L-556.3,162.6 L-557.2,165.7 L-559.8,158.9 L-571.9,158.0 M-535.8,149.6 L-520.7,150.5 L-520.7,158.5 L-524.3,163.9 L-523.4,167.1 L-529.8,172.5 L-535.8,173.4 L-537.6,165.3 M-520.7,158.5 L-515.4,161.7 L-503.0,169.8 L-503.8,146.7 M-523.4,167.1 L-515.4,177.9 L-508.3,180.2 L-501.2,177.9 L-503.8,172.5 M-538.5,162.6 L-542.1,173.4 L-546.5,177.9 M-557.2,165.7 L-558.4,175.2 M-571.9,158.0 L-567.0,168.9 L-563.4,167.1 L-557.2,165.7 M-577.6,168.9 L-572.3,168.0 L-568.4,177.9 M-583.8,158.9 L-583.8,164.8 L-577.6,168.9 L-576.7,179.0 M-546.5,177.9 L-535.0,183.2 L-530.5,180.6 L-515.4,177.9 M-535.0,183.2 L-533.2,195.7 L-542.1,195.7 M-530.5,180.6 L-511.0,188.6 L-511.0,194.8 L-509.2,201.1 L-512.7,203.8 L-519.0,206.5 L-520.7,210.1 L-524.3,210.1 L-524.3,217.5 L-542.1,217.5 M-511.0,188.6 L-503.0,188.6 L-492.3,193.9 M-503.0,188.6 L-503.0,178.8 L-490.5,179.9 L-488.7,178.8 M-501.2,177.9 L-499.4,164.4 L-495.8,160.7 M-478.1,172.5 L-483.4,177.9 L-490.5,179.9 M-509.2,201.1 L-504.7,203.8 L-501.2,207.4 L-501.2,223.1 M-491.4,205.6 L-501.2,207.4 M-524.3,217.5 L-519.0,218.4 L-511.8,226.9 M-527.8,218.4 L-527.8,226.9 L-527.8,239.7 L-533.2,239.7 M-519.0,218.4 L-504.7,227.9 L-506.5,234.7 M-527.8,232.7 L-519.0,232.7 L-511.8,226.9 M-566.6,101.0 L-558.1,103.2 L-552.7,94.5 L-550.1,100.0 M-566.1,87.4 L-559.0,81.1 L-552.7,81.6 L-552.7,85.2 L-549.2,86.6 L-550.1,90.6 L-552.7,94.5 M-550.1,100.0 L-550.1,93.2 L-544.7,91.9 L-540.3,93.2 L-539.2,95.8 M-548.3,69.8 L-538.5,72.3 L-537.4,81.1 L-542.1,83.0 L-538.9,87.1 L-540.3,90.3 L-545.6,90.6 L-550.1,90.6 M-538.5,72.3 L-529.6,70.8 L-521.6,72.3 L-520.7,81.1 L-521.6,83.9 L-523.4,86.6 L-529.6,85.2 L-533.2,87.9 L-537.4,81.1 M-521.6,72.3 L-517.2,67.4 L-513.6,66.1 L-506.5,75.3 L-506.5,78.2 L-503.0,78.2 L-495.8,82.5 L-492.3,89.3 L-495.8,91.9 M-520.7,81.1 L-510.1,79.6 L-506.5,78.2 M-523.4,86.6 L-517.2,88.5 L-511.8,88.5 L-510.1,94.5 L-512.7,96.3 L-517.2,99.5 L-522.5,99.5 L-523.4,95.0 L-529.6,93.7 L-533.2,87.9 M-539.2,95.8 L-534.1,93.7 L-529.6,93.7 M-529.6,99.5 L-523.4,103.2 L-524.3,106.8 L-516.3,105.1 L-513.6,104.4 L-517.2,99.5 M-524.3,106.8 L-527.0,109.1 L-528.7,105.6 M-520.7,62.2 L-514.0,61.2 L-513.6,66.1 M-513.6,54.4 L-513.6,66.1 L-510.1,66.7 M-510.1,11.6 L-512.7,17.6 L-510.1,22.3 L-511.0,33.4 L-506.5,43.4 L-514.0,50.9 M-512.4,14.6 L-519.0,17.1 L-526.1,15.1 L-531.4,17.6 L-536.7,29.1 L-541.2,37.5 L-542.1,49.0 L-541.2,54.4 L-543.0,56.2 M-521.6,29.9 L-520.7,22.3 L-526.1,15.1 M-499.4,116.4 L-495.8,115.9 L-488.7,115.5 L-484.3,115.2 L-485.2,110.2 L-488.7,105.6 M-489.3,105.6 L-486.1,106.5 L-480.7,105.6 L-477.0,104.9 L-479.8,98.3 M-484.3,115.2 L-481.6,120.3 L-479.0,125.6 L-478.1,130.8 M-488.7,115.5 L-489.6,121.4 L-494.1,126.1 L-497.6,127.3 L-500.3,123.5 M-494.1,126.1 L-484.3,132.5 L-478.4,132.9 L-478.1,130.8 M-498.5,132.3 L-494.1,126.1 M-464.7,154.6 L-471.0,152.4 L-476.3,153.3 L-480.7,155.6 L-486.4,155.6 M-471.8,140.9 L-465.3,145.3 L-464.4,146.7 M-485.2,110.2 L-477.2,112.5 L-467.4,115.2 L-458.5,114.8 L-455.0,117.0 L-455.0,121.4 L-455.8,124.6 L-455.8,131.9 L-452.3,140.3 M-455.0,117.0 L-447.8,114.8 L-442.5,115.5 L-437.2,115.9 L-431.0,115.2 M-455.0,121.4 L-451.4,119.2 L-437.2,117.0 L-437.2,122.5 L-439.0,124.6 L-440.7,127.7 L-445.2,131.9 L-453.2,131.9 L-455.8,131.9 M-431.0,115.2 L-426.5,119.2 L-432.7,122.5 L-431.0,125.6 L-434.5,129.8 L-438.1,134.9 L-437.2,141.9 L-441.6,143.8 M-426.5,119.2 L-421.2,120.3 L-423.0,124.6 L-419.4,129.8 L-420.3,132.9 L-407.0,135.9 L-405.2,137.3 L-399.8,135.5 L-391.0,134.9 L-389.2,140.9 L-396.3,147.6 L-399.3,149.2 M-407.0,135.9 L-405.2,146.7 L-398.6,145.7 M-389.2,140.9 L-385.6,147.6 L-383.8,147.6 L-382.1,145.7 L-375.0,145.2 L-371.4,147.6 M-385.6,147.6 L-388.3,157.1 L-382.1,161.7 L-380.3,160.7 L-375.8,160.7 M-383.8,147.6 L-376.7,154.3 L-374.1,157.1 L-375.8,160.7 L-380.3,166.6 M-479.8,98.3 L-474.5,95.8 L-471.0,104.4 L-465.6,106.3 L-462.1,106.3 L-456.7,103.2 L-453.2,107.9 L-446.1,113.7 L-442.5,115.5 M-471.0,104.4 L-462.1,96.3 L-455.0,98.3 L-447.8,100.7 L-439.0,103.2 L-433.6,103.2 L-421.2,103.2 M-478.6,83.9 L-465.6,82.2 L-455.0,81.1 L-444.3,70.8 L-433.6,72.3 L-428.3,70.8 L-423.8,76.7 L-417.6,82.5 L-408.7,86.6 M-433.6,103.2 L-431.0,107.9 L-437.2,109.1 L-437.2,115.9 M-421.2,103.2 L-420.3,97.0 L-416.7,91.9 L-411.4,91.9 L-408.7,86.6 M-408.7,86.6 L-401.6,90.6 L-392.7,102.0 L-383.8,103.2 L-376.7,105.1 L-366.1,100.7 L-364.3,97.0 L-355.4,93.2 L-350.1,91.9 L-351.0,82.5 L-356.3,84.4 L-371.4,85.2 L-389.2,78.2 L-396.3,82.5 L-406.1,85.2 M-350.1,91.9 L-344.7,73.8 L-337.6,83.9 L-330.5,89.3 L-324.3,89.3 L-330.5,97.0 L-330.5,102.5 L-333.2,103.4 L-341.2,109.1 L-343.0,109.6 M-337.6,83.9 L-350.1,75.3 M-705.6,190.4 L-696.7,187.7 L-689.6,193.9 L-687.8,203.8 L-692.3,203.8 L-686.1,209.2 L-686.1,214.7 L-687.8,219.3 M-696.7,187.7 L-687.8,185.0 L-687.0,179.7 L-683.4,176.1 L-691.4,173.8 L-690.5,164.6 M-701.2,172.5 L-700.3,172.9 M-683.4,176.1 L-677.2,179.7 L-670.1,178.8 L-671.0,177.0 L-671.8,171.6 M-670.1,178.8 L-666.5,183.2 L-661.2,182.4 L-659.4,182.7 L-655.8,182.4 L-655.3,178.8 M-666.5,183.2 L-664.7,176.1 M-661.2,182.4 L-659.4,176.5 M-686.1,209.2 L-682.5,205.6 L-679.0,204.7 L-673.6,210.1 L-671.0,211.9 L-666.5,216.5 L-666.5,223.1 M-686.1,214.7 L-685.2,225.0 L-680.7,226.9 L-674.5,226.9 L-670.1,222.2 L-666.5,223.1 M-685.2,225.0 L-685.2,230.8 L-682.5,236.7 L-686.1,239.7 L-687.8,249.0 L-689.6,257.7 L-689.6,264.5 L-691.4,276.6 L-691.4,287.0 L-693.2,289.7 L-686.1,295.4 M-674.5,226.9 L-666.5,230.8 L-661.2,236.7 L-658.5,236.7 L-665.6,242.8 L-657.6,250.1 M-666.5,223.1 L-666.5,226.9 L-661.2,230.8 L-660.3,233.7 M-142.1,86.6 L-92.3,86.6 L-81.6,89.3 L-71.0,94.5 L-70.1,104.4 L-63.8,101.2 L-56.7,97.0 L-49.6,97.0 L-42.5,91.1 L-42.5,97.0 M-174.1,12.1 L-174.1,52.7 L-167.0,56.2 L-154.5,67.7 M-131.4,125.6 L-120.7,128.2 L-115.4,128.2 L-112.7,127.1 L-106.5,132.9 L-101.2,134.9 L-96.2,139.1 M-87.0,154.3 L-81.6,154.6 L-80.7,161.7 L-76.3,163.5 L-71.8,159.8 M61.1,135.5 L71.3,130.8 L74.8,126.7 L73.4,120.3 M61.1,135.5 L61.1,140.9 L55.3,143.8 L53.5,148.0 L46.4,148.6 M61.1,135.5 L68.1,140.9 L65.9,148.6 L68.1,158.0 L66.8,158.9 L56.2,158.9 L54.4,160.7 L47.3,157.1 M93.5,115.9 L89.9,124.6 L93.5,130.8 L94.4,141.9 L97.0,143.8 L101.5,145.7 L118.4,151.4 L119.3,150.5 L121.0,146.7 L121.0,127.7 M73.4,120.3 L93.5,115.9 M121.0,146.7 L142.4,146.7 M83.7,152.4 L97.9,143.8 L104.2,144.8 L104.2,149.6 L101.5,162.6 L83.7,162.6 L82.8,165.7 L80.2,158.9 L68.1,158.0 M104.2,149.6 L119.3,150.5 L119.3,158.5 L115.7,163.9 L116.6,167.1 L110.2,172.5 L104.2,173.4 L102.4,165.3 M119.3,158.5 L124.6,161.7 L137.0,169.8 L136.2,146.7 M116.6,167.1 L124.6,177.9 L131.7,180.2 L138.8,177.9 L136.2,172.5 M101.5,162.6 L97.9,173.4 L93.5,177.9 M82.8,165.7 L81.6,175.2 M68.1,158.0 L73.0,168.9 L76.6,167.1 L82.8,165.7 M62.4,168.9 L67.7,168.0 L71.6,177.9 M56.2,158.9 L56.2,164.8 L62.4,168.9 L63.3,179.0 M93.5,177.9 L105.0,183.2 L109.5,180.6 L124.6,177.9 M105.0,183.2 L106.8,195.7 L97.9,195.7 M109.5,180.6 L129.0,188.6 L129.0,194.8 L130.8,201.1 L127.3,203.8 L121.0,206.5 L119.3,210.1 L115.7,210.1 L115.7,217.5 L97.9,217.5 M129.0,188.6 L137.0,188.6 L147.7,193.9 M137.0,188.6 L137.0,178.8 L149.5,179.9 L151.3,178.8 M138.8,177.9 L140.6,164.4 L144.2,160.7 M161.9,172.5 L156.6,177.9 L149.5,179.9 M130.8,201.1 L135.3,203.8 L138.8,207.4 L138.8,223.1 M148.6,205.6 L138.8,207.4 M115.7,217.5 L121.0,218.4 L128.2,226.9 M112.2,218.4 L112.2,226.9 L112.2,239.7 L106.8,239.7 M121.0,218.4 L135.3,227.9 L133.5,234.7 M112.2,232.7 L121.0,232.7 L128.2,226.9 M73.4,101.0 L81.9,103.2 L87.3,94.5 L89.9,100.0 M73.9,87.4 L81.0,81.1 L87.3,81.6 L87.3,85.2 L90.8,86.6 L89.9,90.6 L87.3,94.5 M89.9,100.0 L89.9,93.2 L95.3,91.9 L99.7,93.2 L100.8,95.8 M91.7,69.8 L101.5,72.3 L102.6,81.1 L97.9,83.0 L101.1,87.1 L99.7,90.3 L94.4,90.6 L89.9,90.6 M101.5,72.3 L110.4,70.8 L118.4,72.3 L119.3,81.1 L118.4,83.9 L116.6,86.6 L110.4,85.2 L106.8,87.9 L102.6,81.1 M118.4,72.3 L122.8,67.4 L126.4,66.1 L133.5,75.3 L133.5,78.2 L137.0,78.2 L144.2,82.5 L147.7,89.3 L144.2,91.9 M119.3,81.1 L129.9,79.6 L133.5,78.2 M116.6,86.6 L122.8,88.5 L128.2,88.5 L129.9,94.5 L127.3,96.3 L122.8,99.5 L117.5,99.5 L116.6,95.0 L110.4,93.7 L106.8,87.9 M100.8,95.8 L105.9,93.7 L110.4,93.7 M110.4,99.5 L116.6,103.2 L115.7,106.8 L123.7,105.1 L126.4,104.4 L122.8,99.5 M115.7,106.8 L113.0,109.1 L111.3,105.6 M119.3,62.2 L126.0,61.2 L126.4,66.1 M126.4,54.4 L126.4,66.1 L129.9,66.7 M129.9,11.6 L127.3,17.6 L129.9,22.3 L129.0,33.4 L133.5,43.4 L126.0,50.9 M127.6,14.6 L121.0,17.1 L113.9,15.1 L108.6,17.6 L103.3,29.1 L98.8,37.5 L97.9,49.0 L98.8,54.4 L97.0,56.2 M118.4,29.9 L119.3,22.3 L113.9,15.1 M140.6,116.4 L144.2,115.9 L151.3,115.5 L155.7,115.2 L154.8,110.2 L151.3,105.6 M150.7,105.6 L153.9,106.5 L159.3,105.6 L163.0,104.9 L160.2,98.3 M155.7,115.2 L158.4,120.3 L161.0,125.6 L161.9,130.8 M151.3,115.5 L150.4,121.4 L145.9,126.1 L142.4,127.3 L139.7,123.5 M145.9,126.1 L155.7,132.5 L161.6,132.9 L161.9,130.8 M141.5,132.3 L145.9,126.1 M175.3,154.6 L169.0,152.4 L163.7,153.3 L159.3,155.6 L153.6,155.6 M168.2,140.9 L174.7,145.3 L175.6,146.7 M154.8,110.2 L162.8,112.5 L172.6,115.2 L181.5,114.8 L185.0,117.0 L185.0,121.4 L184.2,124.6 L184.2,131.9 L187.7,140.3 M185.0,117.0 L192.2,114.8 L197.5,115.5 L202.8,115.9 L209.0,115.2 M185.0,121.4 L188.6,119.2 L202.8,117.0 L202.8,122.5 L201.0,124.6 L199.3,127.7 L194.8,131.9 L186.8,131.9 L184.2,131.9 M209.0,115.2 L213.5,119.2 L207.3,122.5 L209.0,125.6 L205.5,129.8 L201.9,134.9 L202.8,141.9 L198.4,143.8 M213.5,119.2 L218.8,120.3 L217.0,124.6 L220.6,129.8 L219.7,132.9 L233.0,135.9 L234.8,137.3 L240.2,135.5 L249.0,134.9 L250.8,140.9 L243.7,147.6 L240.7,149.2 M233.0,135.9 L234.8,146.7 L241.4,145.7 M250.8,140.9 L254.4,147.6 L256.2,147.6 L257.9,145.7 L265.0,145.2 L268.6,147.6 M254.4,147.6 L251.7,157.1 L257.9,161.7 L259.7,160.7 L264.2,160.7 M256.2,147.6 L263.3,154.3 L265.9,157.1 L264.2,160.7 L259.7,166.6 M160.2,98.3 L165.5,95.8 L169.0,104.4 L174.4,106.3 L177.9,106.3 L183.3,103.2 L186.8,107.9 L193.9,113.7 L197.5,115.5 M169.0,104.4 L177.9,96.3 L185.0,98.3 L192.2,100.7 L201.0,103.2 L206.4,103.2 L218.8,103.2 M161.4,83.9 L174.4,82.2 L185.0,81.1 L195.7,70.8 L206.4,72.3 L211.7,70.8 L216.2,76.7 L222.4,82.5 L231.3,86.6 M206.4,103.2 L209.0,107.9 L202.8,109.1 L202.8,115.9 M218.8,103.2 L219.7,97.0 L223.3,91.9 L228.6,91.9 L231.3,86.6 M231.3,86.6 L238.4,90.6 L247.3,102.0 L256.2,103.2 L263.3,105.1 L273.9,100.7 L275.7,97.0 L284.6,93.2 L289.9,91.9 L289.0,82.5 L283.7,84.4 L268.6,85.2 L250.8,78.2 L243.7,82.5 L233.9,85.2 M289.9,91.9 L295.3,73.8 L302.4,83.9 L309.5,89.3 L315.7,89.3 L309.5,97.0 L309.5,102.5 L306.8,103.4 L298.8,109.1 L297.0,109.6 M302.4,83.9 L289.9,75.3 M-65.6,190.4 L-56.7,187.7 L-49.6,193.9 L-47.8,203.8 L-52.3,203.8 L-46.1,209.2 L-46.1,214.7 L-47.8,219.3 M-56.7,187.7 L-47.8,185.0 L-47.0,179.7 L-43.4,176.1 L-51.4,173.8 L-50.5,164.6 M-61.2,172.5 L-60.3,172.9 M-43.4,176.1 L-37.2,179.7 L-30.1,178.8 L-31.0,177.0 L-31.8,171.6 M-30.1,178.8 L-26.5,183.2 L-21.2,182.4 L-19.4,182.7 L-15.8,182.4 L-15.3,178.8 M-26.5,183.2 L-24.7,176.1 M-21.2,182.4 L-19.4,176.5 M-46.1,209.2 L-42.5,205.6 L-39.0,204.7 L-33.6,210.1 L-31.0,211.9 L-26.5,216.5 L-26.5,223.1 M-46.1,214.7 L-45.2,225.0 L-40.7,226.9 L-34.5,226.9 L-30.1,222.2 L-26.5,223.1 M-45.2,225.0 L-45.2,230.8 L-42.5,236.7 L-46.1,239.7 L-47.8,249.0 L-49.6,257.7 L-49.6,264.5 L-51.4,276.6 L-51.4,287.0 L-53.2,289.7 L-46.1,295.4 M-34.5,226.9 L-26.5,230.8 L-21.2,236.7 L-18.5,236.7 L-25.6,242.8 L-17.6,250.1 M-26.5,223.1 L-26.5,226.9 L-21.2,230.8 L-20.3,233.7 M497.9,86.6 L547.7,86.6 L558.4,89.3 L569.0,94.5 L569.9,104.4 L576.2,101.2 L583.3,97.0 L590.4,97.0 L597.5,91.1 L597.5,97.0 M465.9,12.1 L465.9,52.7 L473.0,56.2 L485.5,67.7 M508.6,125.6 L519.3,128.2 L524.6,128.2 L527.3,127.1 L533.5,132.9 L538.8,134.9 L543.8,139.1 M553.0,154.3 L558.4,154.6 L559.3,161.7 L563.7,163.5 L568.2,159.8 M701.1,135.5 L711.3,130.8 L714.8,126.7 L713.4,120.3 M701.1,135.5 L701.1,140.9 L695.3,143.8 L693.5,148.0 L686.4,148.6 M701.1,135.5 L708.1,140.9 L705.9,148.6 L708.1,158.0 L706.8,158.9 L696.2,158.9 L694.4,160.7 L687.3,157.1 M733.5,115.9 L729.9,124.6 L733.5,130.8 L734.4,141.9 L737.0,143.8 L741.5,145.7 L758.4,151.4 L759.3,150.5 L761.0,146.7 L761.0,127.7 M713.4,120.3 L733.5,115.9 M761.0,146.7 L782.4,146.7 M723.7,152.4 L737.9,143.8 L744.2,144.8 L744.2,149.6 L741.5,162.6 L723.7,162.6 L722.8,165.7 L720.2,158.9 L708.1,158.0 M744.2,149.6 L759.3,150.5 L759.3,158.5 L755.7,163.9 L756.6,167.1 L750.2,172.5 L744.2,173.4 L742.4,165.3 M759.3,158.5 L764.6,161.7 L777.0,169.8 L776.2,146.7 M756.6,167.1 L764.6,177.9 L771.7,180.2 L778.8,177.9 L776.2,172.5 M741.5,162.6 L737.9,173.4 L733.5,177.9 M722.8,165.7 L721.6,175.2 M708.1,158.0 L713.0,168.9 L716.6,167.1 L722.8,165.7 M702.4,168.9 L707.7,168.0 L711.6,177.9 M696.2,158.9 L696.2,164.8 L702.4,168.9 L703.3,179.0 M733.5,177.9 L745.0,183.2 L749.5,180.6 L764.6,177.9 M745.0,183.2 L746.8,195.7 L737.9,195.7 M749.5,180.6 L769.0,188.6 L769.0,194.8 L770.8,201.1 L767.3,203.8 L761.0,206.5 L759.3,210.1 L755.7,210.1 L755.7,217.5 L737.9,217.5 M769.0,188.6 L777.0,188.6 L787.7,193.9 M777.0,188.6 L777.0,178.8 L789.5,179.9 L791.3,178.8 M778.8,177.9 L780.6,164.4 L784.2,160.7 M801.9,172.5 L796.6,177.9 L789.5,179.9 M770.8,201.1 L775.3,203.8 L778.8,207.4 L778.8,223.1 M788.6,205.6 L778.8,207.4 M755.7,217.5 L761.0,218.4 L768.2,226.9 M752.2,218.4 L752.2,226.9 L752.2,239.7 L746.8,239.7 M761.0,218.4 L775.3,227.9 L773.5,234.7 M752.2,232.7 L761.0,232.7 L768.2,226.9 M713.4,101.0 L721.9,103.2 L727.3,94.5 L729.9,100.0 M713.9,87.4 L721.0,81.1 L727.3,81.6 L727.3,85.2 L730.8,86.6 L729.9,90.6 L727.3,94.5 M729.9,100.0 L729.9,93.2 L735.3,91.9 L739.7,93.2 L740.8,95.8 M731.7,69.8 L741.5,72.3 L742.6,81.1 L737.9,83.0 L741.1,87.1 L739.7,90.3 L734.4,90.6 L729.9,90.6 M741.5,72.3 L750.4,70.8 L758.4,72.3 L759.3,81.1 L758.4,83.9 L756.6,86.6 L750.4,85.2 L746.8,87.9 L742.6,81.1 M758.4,72.3 L762.8,67.4 L766.4,66.1 L773.5,75.3 L773.5,78.2 L777.0,78.2 L784.2,82.5 L787.7,89.3 L784.2,91.9 M759.3,81.1 L769.9,79.6 L773.5,78.2 M756.6,86.6 L762.8,88.5 L768.2,88.5 L769.9,94.5 L767.3,96.3 L762.8,99.5 L757.5,99.5 L756.6,95.0 L750.4,93.7 L746.8,87.9 M740.8,95.8 L745.9,93.7 L750.4,93.7 M750.4,99.5 L756.6,103.2 L755.7,106.8 L763.7,105.1 L766.4,104.4 L762.8,99.5 M755.7,106.8 L753.0,109.1 L751.3,105.6 M759.3,62.2 L766.0,61.2 L766.4,66.1 M766.4,54.4 L766.4,66.1 L769.9,66.7 M769.9,11.6 L767.3,17.6 L769.9,22.3 L769.0,33.4 L773.5,43.4 L766.0,50.9 M767.6,14.6 L761.0,17.1 L753.9,15.1 L748.6,17.6 L743.3,29.1 L738.8,37.5 L737.9,49.0 L738.8,54.4 L737.0,56.2 M758.4,29.9 L759.3,22.3 L753.9,15.1 M780.6,116.4 L784.2,115.9 L791.3,115.5 L795.7,115.2 L794.8,110.2 L791.3,105.6 M790.7,105.6 L793.9,106.5 L799.3,105.6 L803.0,104.9 L800.2,98.3 M795.7,115.2 L798.4,120.3 L801.0,125.6 L801.9,130.8 M791.3,115.5 L790.4,121.4 L785.9,126.1 L782.4,127.3 L779.7,123.5 M785.9,126.1 L795.7,132.5 L801.6,132.9 L801.9,130.8 M781.5,132.3 L785.9,126.1 M815.3,154.6 L809.0,152.4 L803.7,153.3 L799.3,155.6 L793.6,155.6 M808.2,140.9 L814.7,145.3 L815.6,146.7 M794.8,110.2 L802.8,112.5 L812.6,115.2 L821.5,114.8 L825.0,117.0 L825.0,121.4 L824.2,124.6 L824.2,131.9 L827.7,140.3 M825.0,117.0 L832.2,114.8 L837.5,115.5 L842.8,115.9 L849.0,115.2 M825.0,121.4 L828.6,119.2 L842.8,117.0 L842.8,122.5 L841.0,124.6 L839.3,127.7 L834.8,131.9 L826.8,131.9 L824.2,131.9 M849.0,115.2 L853.5,119.2 L847.3,122.5 L849.0,125.6 L845.5,129.8 L841.9,134.9 L842.8,141.9 L838.4,143.8 M853.5,119.2 L858.8,120.3 L857.0,124.6 L860.6,129.8 L859.7,132.9 L873.0,135.9 L874.8,137.3 L880.2,135.5 L889.0,134.9 L890.8,140.9 L883.7,147.6 L880.7,149.2 M873.0,135.9 L874.8,146.7 L881.4,145.7 M890.8,140.9 L894.4,147.6 L896.2,147.6 L897.9,145.7 L905.0,145.2 L908.6,147.6 M894.4,147.6 L891.7,157.1 L897.9,161.7 L899.7,160.7 L904.2,160.7 M896.2,147.6 L903.3,154.3 L905.9,157.1 L904.2,160.7 L899.7,166.6 M800.2,98.3 L805.5,95.8 L809.0,104.4 L814.4,106.3 L817.9,106.3 L823.3,103.2 L826.8,107.9 L833.9,113.7 L837.5,115.5 M809.0,104.4 L817.9,96.3 L825.0,98.3 L832.2,100.7 L841.0,103.2 L846.4,103.2 L858.8,103.2 M801.4,83.9 L814.4,82.2 L825.0,81.1 L835.7,70.8 L846.4,72.3 L851.7,70.8 L856.2,76.7 L862.4,82.5 L871.3,86.6 M846.4,103.2 L849.0,107.9 L842.8,109.1 L842.8,115.9 M858.8,103.2 L859.7,97.0 L863.3,91.9 L868.6,91.9 L871.3,86.6 M871.3,86.6 L878.4,90.6 L887.3,102.0 L896.2,103.2 L903.3,105.1 L913.9,100.7 L915.7,97.0 L924.6,93.2 L929.9,91.9 L929.0,82.5 L923.7,84.4 L908.6,85.2 L890.8,78.2 L883.7,82.5 L873.9,85.2 M929.9,91.9 L935.3,73.8 L942.4,83.9 L949.5,89.3 L955.7,89.3 L949.5,97.0 L949.5,102.5 L946.8,103.4 L938.8,109.1 L937.0,109.6 M942.4,83.9 L929.9,75.3 M574.4,190.4 L583.3,187.7 L590.4,193.9 L592.2,203.8 L587.7,203.8 L593.9,209.2 L593.9,214.7 L592.2,219.3 M583.3,187.7 L592.2,185.0 L593.0,179.7 L596.6,176.1 L588.6,173.8 L589.5,164.6 M578.8,172.5 L579.7,172.9 M596.6,176.1 L602.8,179.7 L609.9,178.8 L609.0,177.0 L608.2,171.6 M609.9,178.8 L613.5,183.2 L618.8,182.4 L620.6,182.7 L624.2,182.4 L624.7,178.8 M613.5,183.2 L615.3,176.1 M618.8,182.4 L620.6,176.5 M593.9,209.2 L597.5,205.6 L601.0,204.7 L606.4,210.1 L609.0,211.9 L613.5,216.5 L613.5,223.1 M593.9,214.7 L594.8,225.0 L599.3,226.9 L605.5,226.9 L609.9,222.2 L613.5,223.1 M594.8,225.0 L594.8,230.8 L597.5,236.7 L593.9,239.7 L592.2,249.0 L590.4,257.7 L590.4,264.5 L588.6,276.6 L588.6,287.0 L586.8,289.7 L593.9,295.4 M605.5,226.9 L613.5,230.8 L618.8,236.7 L621.5,236.7 L614.4,242.8 L622.4,250.1 M613.5,223.1 L613.5,226.9 L618.8,230.8 L619.7,233.7 M1137.9,86.6 L1187.7,86.6 L1198.4,89.3 L1209.0,94.5 L1209.9,104.4 L1216.2,101.2 L1223.3,97.0 L1230.4,97.0 L1237.5,91.1 L1237.5,97.0 M1105.9,12.1 L1105.9,52.7 L1113.0,56.2 L1125.5,67.7 M1148.6,125.6 L1159.3,128.2 L1164.6,128.2 L1167.3,127.1 L1173.5,132.9 L1178.8,134.9 L1183.8,139.1 M1193.0,154.3 L1198.4,154.6 L1199.3,161.7 L1203.7,163.5 L1208.2,159.8 M1341.1,135.5 L1351.3,130.8 L1354.8,126.7 L1353.4,120.3 M1341.1,135.5 L1341.1,140.9 L1335.3,143.8 L1333.5,148.0 L1326.4,148.6 M1341.1,135.5 L1348.1,140.9 L1345.9,148.6 L1348.1,158.0 L1346.8,158.9 L1336.2,158.9 L1334.4,160.7 L1327.3,157.1 M1373.5,115.9 L1369.9,124.6 L1373.5,130.8 L1374.4,141.9 L1377.0,143.8 L1381.5,145.7 L1398.4,151.4 L1399.3,150.5 L1401.0,146.7 L1401.0,127.7 M1353.4,120.3 L1373.5,115.9 M1401.0,146.7 L1422.4,146.7 M1363.7,152.4 L1377.9,143.8 L1384.2,144.8 L1384.2,149.6 L1381.5,162.6 L1363.7,162.6 L1362.8,165.7 L1360.2,158.9 L1348.1,158.0 M1384.2,149.6 L1399.3,150.5 L1399.3,158.5 L1395.7,163.9 L1396.6,167.1 L1390.2,172.5 L1384.2,173.4 L1382.4,165.3 M1399.3,158.5 L1404.6,161.7 L1417.0,169.8 L1416.2,146.7 M1396.6,167.1 L1404.6,177.9 L1411.7,180.2 L1418.8,177.9 L1416.2,172.5 M1381.5,162.6 L1377.9,173.4 L1373.5,177.9 M1362.8,165.7 L1361.6,175.2 M1348.1,158.0 L1353.0,168.9 L1356.6,167.1 L1362.8,165.7 M1342.4,168.9 L1347.7,168.0 L1351.6,177.9 M1336.2,158.9 L1336.2,164.8 L1342.4,168.9 L1343.3,179.0 M1373.5,177.9 L1385.0,183.2 L1389.5,180.6 L1404.6,177.9 M1385.0,183.2 L1386.8,195.7 L1377.9,195.7 M1389.5,180.6 L1409.0,188.6 L1409.0,194.8 L1410.8,201.1 L1407.3,203.8 L1401.0,206.5 L1399.3,210.1 L1395.7,210.1 L1395.7,217.5 L1377.9,217.5 M1409.0,188.6 L1417.0,188.6 L1427.7,193.9 M1417.0,188.6 L1417.0,178.8 L1429.5,179.9 L1431.3,178.8 M1418.8,177.9 L1420.6,164.4 L1424.2,160.7 M1441.9,172.5 L1436.6,177.9 L1429.5,179.9 M1410.8,201.1 L1415.3,203.8 L1418.8,207.4 L1418.8,223.1 M1428.6,205.6 L1418.8,207.4 M1395.7,217.5 L1401.0,218.4 L1408.2,226.9 M1392.2,218.4 L1392.2,226.9 L1392.2,239.7 L1386.8,239.7 M1401.0,218.4 L1415.3,227.9 L1413.5,234.7 M1392.2,232.7 L1401.0,232.7 L1408.2,226.9 M1353.4,101.0 L1361.9,103.2 L1367.3,94.5 L1369.9,100.0 M1353.9,87.4 L1361.0,81.1 L1367.3,81.6 L1367.3,85.2 L1370.8,86.6 L1369.9,90.6 L1367.3,94.5 M1369.9,100.0 L1369.9,93.2 L1375.3,91.9 L1379.7,93.2 L1380.8,95.8 M1371.7,69.8 L1381.5,72.3 L1382.6,81.1 L1377.9,83.0 L1381.1,87.1 L1379.7,90.3 L1374.4,90.6 L1369.9,90.6 M1381.5,72.3 L1390.4,70.8 L1398.4,72.3 L1399.3,81.1 L1398.4,83.9 L1396.6,86.6 L1390.4,85.2 L1386.8,87.9 L1382.6,81.1 M1398.4,72.3 L1402.8,67.4 L1406.4,66.1 L1413.5,75.3 L1413.5,78.2 L1417.0,78.2 L1424.2,82.5 L1427.7,89.3 L1424.2,91.9 M1399.3,81.1 L1409.9,79.6 L1413.5,78.2 M1396.6,86.6 L1402.8,88.5 L1408.2,88.5 L1409.9,94.5 L1407.3,96.3 L1402.8,99.5 L1397.5,99.5 L1396.6,95.0 L1390.4,93.7 L1386.8,87.9 M1380.8,95.8 L1385.9,93.7 L1390.4,93.7 M1390.4,99.5 L1396.6,103.2 L1395.7,106.8 L1403.7,105.1 L1406.4,104.4 L1402.8,99.5 M1395.7,106.8 L1393.0,109.1 L1391.3,105.6 M1399.3,62.2 L1406.0,61.2 L1406.4,66.1 M1406.4,54.4 L1406.4,66.1 L1409.9,66.7 M1409.9,11.6 L1407.3,17.6 L1409.9,22.3 L1409.0,33.4 L1413.5,43.4 L1406.0,50.9 M1407.6,14.6 L1401.0,17.1 L1393.9,15.1 L1388.6,17.6 L1383.3,29.1 L1378.8,37.5 L1377.9,49.0 L1378.8,54.4 L1377.0,56.2 M1398.4,29.9 L1399.3,22.3 L1393.9,15.1 M1420.6,116.4 L1424.2,115.9 L1431.3,115.5 L1435.7,115.2 L1434.8,110.2 L1431.3,105.6 M1430.7,105.6 L1433.9,106.5 L1439.3,105.6 L1443.0,104.9 L1440.2,98.3 M1435.7,115.2 L1438.4,120.3 L1441.0,125.6 L1441.9,130.8 M1431.3,115.5 L1430.4,121.4 L1425.9,126.1 L1422.4,127.3 L1419.7,123.5 M1425.9,126.1 L1435.7,132.5 L1441.6,132.9 L1441.9,130.8 M1421.5,132.3 L1425.9,126.1 M1455.3,154.6 L1449.0,152.4 L1443.7,153.3 L1439.3,155.6 L1433.6,155.6 M1448.2,140.9 L1454.7,145.3 L1455.6,146.7 M1434.8,110.2 L1442.8,112.5 L1452.6,115.2 L1461.5,114.8 L1465.0,117.0 L1465.0,121.4 L1464.2,124.6 L1464.2,131.9 L1467.7,140.3 M1465.0,117.0 L1472.2,114.8 L1477.5,115.5 L1482.8,115.9 L1489.0,115.2 M1465.0,121.4 L1468.6,119.2 L1482.8,117.0 L1482.8,122.5 L1481.0,124.6 L1479.3,127.7 L1474.8,131.9 L1466.8,131.9 L1464.2,131.9 M1489.0,115.2 L1493.5,119.2 L1487.3,122.5 L1489.0,125.6 L1485.5,129.8 L1481.9,134.9 L1482.8,141.9 L1478.4,143.8 M1493.5,119.2 L1498.8,120.3 L1497.0,124.6 L1500.6,129.8 L1499.7,132.9 L1513.0,135.9 L1514.8,137.3 L1520.2,135.5 L1529.0,134.9 L1530.8,140.9 L1523.7,147.6 L1520.7,149.2 M1513.0,135.9 L1514.8,146.7 L1521.4,145.7 M1530.8,140.9 L1534.4,147.6 L1536.2,147.6 L1537.9,145.7 L1545.0,145.2 L1548.6,147.6 M1534.4,147.6 L1531.7,157.1 L1537.9,161.7 L1539.7,160.7 L1544.2,160.7 M1536.2,147.6 L1543.3,154.3 L1545.9,157.1 L1544.2,160.7 L1539.7,166.6 M1440.2,98.3 L1445.5,95.8 L1449.0,104.4 L1454.4,106.3 L1457.9,106.3 L1463.3,103.2 L1466.8,107.9 L1473.9,113.7 L1477.5,115.5 M1449.0,104.4 L1457.9,96.3 L1465.0,98.3 L1472.2,100.7 L1481.0,103.2 L1486.4,103.2 L1498.8,103.2 M1441.4,83.9 L1454.4,82.2 L1465.0,81.1 L1475.7,70.8 L1486.4,72.3 L1491.7,70.8 L1496.2,76.7 L1502.4,82.5 L1511.3,86.6 M1486.4,103.2 L1489.0,107.9 L1482.8,109.1 L1482.8,115.9 M1498.8,103.2 L1499.7,97.0 L1503.3,91.9 L1508.6,91.9 L1511.3,86.6 M1511.3,86.6 L1518.4,90.6 L1527.3,102.0 L1536.2,103.2 L1543.3,105.1 L1553.9,100.7 L1555.7,97.0 L1564.6,93.2 L1569.9,91.9 L1569.0,82.5 L1563.7,84.4 L1548.6,85.2 L1530.8,78.2 L1523.7,82.5 L1513.9,85.2 M1569.9,91.9 L1575.3,73.8 L1582.4,83.9 L1589.5,89.3 L1595.7,89.3 L1589.5,97.0 L1589.5,102.5 L1586.8,103.4 L1578.8,109.1 L1577.0,109.6 M1582.4,83.9 L1569.9,75.3 M1214.4,190.4 L1223.3,187.7 L1230.4,193.9 L1232.2,203.8 L1227.7,203.8 L1233.9,209.2 L1233.9,214.7 L1232.2,219.3 M1223.3,187.7 L1232.2,185.0 L1233.0,179.7 L1236.6,176.1 L1228.6,173.8 L1229.5,164.6 M1218.8,172.5 L1219.7,172.9 M1236.6,176.1 L1242.8,179.7 L1249.9,178.8 L1249.0,177.0 L1248.2,171.6 M1249.9,178.8 L1253.5,183.2 L1258.8,182.4 L1260.6,182.7 L1264.2,182.4 L1264.7,178.8 M1253.5,183.2 L1255.3,176.1 M1258.8,182.4 L1260.6,176.5 M1233.9,209.2 L1237.5,205.6 L1241.0,204.7 L1246.4,210.1 L1249.0,211.9 L1253.5,216.5 L1253.5,223.1 M1233.9,214.7 L1234.8,225.0 L1239.3,226.9 L1245.5,226.9 L1249.9,222.2 L1253.5,223.1 M1234.8,225.0 L1234.8,230.8 L1237.5,236.7 L1233.9,239.7 L1232.2,249.0 L1230.4,257.7 L1230.4,264.5 L1228.6,276.6 L1228.6,287.0 L1226.8,289.7 L1233.9,295.4 M1245.5,226.9 L1253.5,230.8 L1258.8,236.7 L1261.5,236.7 L1254.4,242.8 L1262.4,250.1 M1253.5,223.1 L1253.5,226.9 L1258.8,230.8 L1259.7,233.7 M1777.9,86.6 L1827.7,86.6 L1838.4,89.3 L1849.0,94.5 L1849.9,104.4 L1856.2,101.2 L1863.3,97.0 L1870.4,97.0 L1877.5,91.1 L1877.5,97.0 M1745.9,12.1 L1745.9,52.7 L1753.0,56.2 L1765.5,67.7 M1788.6,125.6 L1799.3,128.2 L1804.6,128.2 L1807.3,127.1 L1813.5,132.9 L1818.8,134.9 L1823.8,139.1 M1833.0,154.3 L1838.4,154.6 L1839.3,161.7 L1843.7,163.5 L1848.2,159.8 M1981.1,135.5 L1991.3,130.8 L1994.8,126.7 L1993.4,120.3 M1981.1,135.5 L1981.1,140.9 L1975.3,143.8 L1973.5,148.0 L1966.4,148.6 M1981.1,135.5 L1988.1,140.9 L1985.9,148.6 L1988.1,158.0 L1986.8,158.9 L1976.2,158.9 L1974.4,160.7 L1967.3,157.1 M2013.5,115.9 L2009.9,124.6 L2013.5,130.8 L2014.4,141.9 L2017.0,143.8 L2021.5,145.7 L2038.4,151.4 L2039.3,150.5 L2041.0,146.7 L2041.0,127.7 M1993.4,120.3 L2013.5,115.9 M2041.0,146.7 L2062.4,146.7 M2003.7,152.4 L2017.9,143.8 L2024.2,144.8 L2024.2,149.6 L2021.5,162.6 L2003.7,162.6 L2002.8,165.7 L2000.2,158.9 L1988.1,158.0 M2024.2,149.6 L2039.3,150.5 L2039.3,158.5 L2035.7,163.9 L2036.6,167.1 L2030.2,172.5 L2024.2,173.4 L2022.4,165.3 M2039.3,158.5 L2044.6,161.7 L2057.0,169.8 L2056.2,146.7 M2036.6,167.1 L2044.6,177.9 L2051.7,180.2 L2058.8,177.9 L2056.2,172.5 M2021.5,162.6 L2017.9,173.4 L2013.5,177.9 M2002.8,165.7 L2001.6,175.2 M1988.1,158.0 L1993.0,168.9 L1996.6,167.1 L2002.8,165.7 M1982.4,168.9 L1987.7,168.0 L1991.6,177.9 M1976.2,158.9 L1976.2,164.8 L1982.4,168.9 L1983.3,179.0 M2013.5,177.9 L2025.0,183.2 L2029.5,180.6 L2044.6,177.9 M2025.0,183.2 L2026.8,195.7 L2017.9,195.7 M2029.5,180.6 L2049.0,188.6 L2049.0,194.8 L2050.8,201.1 L2047.3,203.8 L2041.0,206.5 L2039.3,210.1 L2035.7,210.1 L2035.7,217.5 L2017.9,217.5 M2049.0,188.6 L2057.0,188.6 L2067.7,193.9 M2057.0,188.6 L2057.0,178.8 L2069.5,179.9 L2071.3,178.8 M2058.8,177.9 L2060.6,164.4 L2064.2,160.7 M2081.9,172.5 L2076.6,177.9 L2069.5,179.9 M2050.8,201.1 L2055.3,203.8 L2058.8,207.4 L2058.8,223.1 M2068.6,205.6 L2058.8,207.4 M2035.7,217.5 L2041.0,218.4 L2048.2,226.9 M2032.2,218.4 L2032.2,226.9 L2032.2,239.7 L2026.8,239.7 M2041.0,218.4 L2055.3,227.9 L2053.5,234.7 M2032.2,232.7 L2041.0,232.7 L2048.2,226.9 M1993.4,101.0 L2001.9,103.2 L2007.3,94.5 L2009.9,100.0 M1993.9,87.4 L2001.0,81.1 L2007.3,81.6 L2007.3,85.2 L2010.8,86.6 L2009.9,90.6 L2007.3,94.5 M2009.9,100.0 L2009.9,93.2 L2015.3,91.9 L2019.7,93.2 L2020.8,95.8 M2011.7,69.8 L2021.5,72.3 L2022.6,81.1 L2017.9,83.0 L2021.1,87.1 L2019.7,90.3 L2014.4,90.6 L2009.9,90.6 M2021.5,72.3 L2030.4,70.8 L2038.4,72.3 L2039.3,81.1 L2038.4,83.9 L2036.6,86.6 L2030.4,85.2 L2026.8,87.9 L2022.6,81.1 M2038.4,72.3 L2042.8,67.4 L2046.4,66.1 L2053.5,75.3 L2053.5,78.2 L2057.0,78.2 L2064.2,82.5 L2067.7,89.3 L2064.2,91.9 M2039.3,81.1 L2049.9,79.6 L2053.5,78.2 M2036.6,86.6 L2042.8,88.5 L2048.2,88.5 L2049.9,94.5 L2047.3,96.3 L2042.8,99.5 L2037.5,99.5 L2036.6,95.0 L2030.4,93.7 L2026.8,87.9 M2020.8,95.8 L2025.9,93.7 L2030.4,93.7 M2030.4,99.5 L2036.6,103.2 L2035.7,106.8 L2043.7,105.1 L2046.4,104.4 L2042.8,99.5 M2035.7,106.8 L2033.0,109.1 L2031.3,105.6 M2039.3,62.2 L2046.0,61.2 L2046.4,66.1 M2046.4,54.4 L2046.4,66.1 L2049.9,66.7 M2049.9,11.6 L2047.3,17.6 L2049.9,22.3 L2049.0,33.4 L2053.5,43.4 L2046.0,50.9 M2047.6,14.6 L2041.0,17.1 L2033.9,15.1 L2028.6,17.6 L2023.3,29.1 L2018.8,37.5 L2017.9,49.0 L2018.8,54.4 L2017.0,56.2 M2038.4,29.9 L2039.3,22.3 L2033.9,15.1 M2060.6,116.4 L2064.2,115.9 L2071.3,115.5 L2075.7,115.2 L2074.8,110.2 L2071.3,105.6 M2070.7,105.6 L2073.9,106.5 L2079.3,105.6 L2083.0,104.9 L2080.2,98.3 M2075.7,115.2 L2078.4,120.3 L2081.0,125.6 L2081.9,130.8 M2071.3,115.5 L2070.4,121.4 L2065.9,126.1 L2062.4,127.3 L2059.7,123.5 M2065.9,126.1 L2075.7,132.5 L2081.6,132.9 L2081.9,130.8 M2061.5,132.3 L2065.9,126.1 M2095.3,154.6 L2089.0,152.4 L2083.7,153.3 L2079.3,155.6 L2073.6,155.6 M2088.2,140.9 L2094.7,145.3 L2095.6,146.7 M2074.8,110.2 L2082.8,112.5 L2092.6,115.2 L2101.5,114.8 L2105.0,117.0 L2105.0,121.4 L2104.2,124.6 L2104.2,131.9 L2107.7,140.3 M2105.0,117.0 L2112.2,114.8 L2117.5,115.5 L2122.8,115.9 L2129.0,115.2 M2105.0,121.4 L2108.6,119.2 L2122.8,117.0 L2122.8,122.5 L2121.0,124.6 L2119.3,127.7 L2114.8,131.9 L2106.8,131.9 L2104.2,131.9 M2129.0,115.2 L2133.5,119.2 L2127.3,122.5 L2129.0,125.6 L2125.5,129.8 L2121.9,134.9 L2122.8,141.9 L2118.4,143.8 M2133.5,119.2 L2138.8,120.3 L2137.0,124.6 L2140.6,129.8 L2139.7,132.9 L2153.0,135.9 L2154.8,137.3 L2160.2,135.5 L2169.0,134.9 L2170.8,140.9 L2163.7,147.6 L2160.7,149.2 M2153.0,135.9 L2154.8,146.7 L2161.4,145.7 M2170.8,140.9 L2174.4,147.6 L2176.2,147.6 L2177.9,145.7 L2185.0,145.2 L2188.6,147.6 M2174.4,147.6 L2171.7,157.1 L2177.9,161.7 L2179.7,160.7 L2184.2,160.7 M2176.2,147.6 L2183.3,154.3 L2185.9,157.1 L2184.2,160.7 L2179.7,166.6 M2080.2,98.3 L2085.5,95.8 L2089.0,104.4 L2094.4,106.3 L2097.9,106.3 L2103.3,103.2 L2106.8,107.9 L2113.9,113.7 L2117.5,115.5 M2089.0,104.4 L2097.9,96.3 L2105.0,98.3 L2112.2,100.7 L2121.0,103.2 L2126.4,103.2 L2138.8,103.2 M2081.4,83.9 L2094.4,82.2 L2105.0,81.1 L2115.7,70.8 L2126.4,72.3 L2131.7,70.8 L2136.2,76.7 L2142.4,82.5 L2151.3,86.6 M2126.4,103.2 L2129.0,107.9 L2122.8,109.1 L2122.8,115.9 M2138.8,103.2 L2139.7,97.0 L2143.3,91.9 L2148.6,91.9 L2151.3,86.6 M2151.3,86.6 L2158.4,90.6 L2167.3,102.0 L2176.2,103.2 L2183.3,105.1 L2193.9,100.7 L2195.7,97.0 L2204.6,93.2 L2209.9,91.9 L2209.0,82.5 L2203.7,84.4 L2188.6,85.2 L2170.8,78.2 L2163.7,82.5 L2153.9,85.2 M2209.9,91.9 L2215.3,73.8 L2222.4,83.9 L2229.5,89.3 L2235.7,89.3 L2229.5,97.0 L2229.5,102.5 L2226.8,103.4 L2218.8,109.1 L2217.0,109.6 M2222.4,83.9 L2209.9,75.3 M1854.4,190.4 L1863.3,187.7 L1870.4,193.9 L1872.2,203.8 L1867.7,203.8 L1873.9,209.2 L1873.9,214.7 L1872.2,219.3 M1863.3,187.7 L1872.2,185.0 L1873.0,179.7 L1876.6,176.1 L1868.6,173.8 L1869.5,164.6 M1858.8,172.5 L1859.7,172.9 M1876.6,176.1 L1882.8,179.7 L1889.9,178.8 L1889.0,177.0 L1888.2,171.6 M1889.9,178.8 L1893.5,183.2 L1898.8,182.4 L1900.6,182.7 L1904.2,182.4 L1904.7,178.8 M1893.5,183.2 L1895.3,176.1 M1898.8,182.4 L1900.6,176.5 M1873.9,209.2 L1877.5,205.6 L1881.0,204.7 L1886.4,210.1 L1889.0,211.9 L1893.5,216.5 L1893.5,223.1 M1873.9,214.7 L1874.8,225.0 L1879.3,226.9 L1885.5,226.9 L1889.9,222.2 L1893.5,223.1 M1874.8,225.0 L1874.8,230.8 L1877.5,236.7 L1873.9,239.7 L1872.2,249.0 L1870.4,257.7 L1870.4,264.5 L1868.6,276.6 L1868.6,287.0 L1866.8,289.7 L1873.9,295.4 M1885.5,226.9 L1893.5,230.8 L1898.8,236.7 L1901.5,236.7 L1894.4,242.8 L1902.4,250.1 M1893.5,223.1 L1893.5,226.9 L1898.8,230.8 L1899.7,233.7" fill="none" stroke="#4a5a55" stroke-width="0.7" opacity="0.75"/>
 <path d="M406,0 L416,30 L379.4,73.6 L396,87.6 L396,182 M396,190 L429,190 L429,176 L439,176 L451,200 L414,200 L410,207 L410,274 L396,291 L396,375 M1046,0 L1056,30 L1019.4,73.6 L1036,87.6 L1036,182 M1036,190 L1069,190 L1069,176 L1079,176 L1091,200 L1054,200 L1050,207 L1050,274 L1036,291 L1036,375" fill="none" stroke="#3c5a66" stroke-width="1" stroke-dasharray="4 3"/>
</svg>
<div class="t" style="left:724px;top:81.15px;font-size:11.59px;color:#2e2e2e;font-style:italic;transform:scaleX(0.9);letter-spacing:0.4px;text-shadow:0 0 2px #fff,0 0 2px #fff,0 0 2px #fff,0 0 3px #fff">EUROPA</div>
<!-- heatmap -->
<div class="abs" style="left:0;top:0;width:1433px;height:375px;filter:blur(0.6px)">
<div class="hm" style="left:700px;top:40px;width:68px;height:88px;background:rgba(90,230,120,.35);filter:blur(8px)"></div>
<div class="hm" style="left:710px;top:44px;background:rgba(110,228,130,.55)"></div><div class="hm" style="left:726px;top:44px;background:rgba(100,228,120,.6)"></div><div class="hm" style="left:742px;top:44px;background:rgba(110,228,130,.55)"></div><div class="hm" style="left:710px;top:60px;background:#22df2c"></div><div class="hm" style="left:726px;top:60px;background:#00d214"></div><div class="hm" style="left:742px;top:60px;background:#24e030"></div><div class="hm" style="left:710px;top:76px;background:#22df2c"></div><div class="hm" style="left:726px;top:76px;background:#00c810"></div><div class="hm" style="left:742px;top:76px;background:#24e030"></div><div class="hm" style="left:710px;top:92px;background:#5de670"></div><div class="hm" style="left:726px;top:92px;background:#2ae64e"></div><div class="hm" style="left:742px;top:92px;background:#50e66a"></div><div class="hm" style="left:550px;top:124px;background:#a8bdab"></div><div class="hm" style="left:566px;top:124px;background:#cbb9a9"></div><div class="hm" style="left:550px;top:140px;background:#a5c3bc"></div><div class="hm" style="left:566px;top:140px;background:#9b8b7a"></div><div class="hm" style="left:582px;top:124px;background:rgba(150,195,205,.55)"></div><div class="hm" style="left:582px;top:140px;background:rgba(150,200,210,.5)"></div><div class="hm" style="left:598px;top:220px;background:#f2c245"></div><div class="hm" style="left:614px;top:220px;background:#f3c040"></div><div class="hm" style="left:598px;top:236px;background:#f3c44a"></div><div class="hm" style="left:614px;top:236px;background:#f0c248"></div><div class="hm" style="left:582px;top:220px;background:rgba(200,205,180,.6)"></div><div class="hm" style="left:582px;top:236px;background:rgba(200,210,185,.6)"></div><div class="hm" style="left:582px;top:252px;background:rgba(205,220,195,.6)"></div><div class="hm" style="left:598px;top:204px;background:rgba(225,215,150,.45)"></div><div class="hm" style="left:614px;top:204px;background:rgba(225,215,150,.45)"></div><div class="hm" style="left:630px;top:204px;background:rgba(215,220,170,.4)"></div><div class="hm" style="left:630px;top:220px;background:rgba(200,220,180,.55)"></div><div class="hm" style="left:630px;top:236px;background:rgba(170,210,180,.5)"></div><div class="hm" style="left:598px;top:252px;background:rgba(210,222,195,.7)"></div><div class="hm" style="left:614px;top:252px;background:rgba(140,200,178,.6)"></div><div class="hm" style="left:870px;top:140px;background:#d8cf78"></div><div class="hm" style="left:886px;top:140px;background:#f2c046"></div><div class="hm" style="left:902px;top:140px;background:#e0cc70"></div><div class="hm" style="left:870px;top:156px;background:#dccb74"></div><div class="hm" style="left:886px;top:156px;background:#f0bb42"></div><div class="hm" style="left:902px;top:156px;background:#e0c870"></div><div class="hm" style="left:870px;top:172px;background:rgba(150,205,175,.6)"></div><div class="hm" style="left:886px;top:172px;background:rgba(200,205,140,.7)"></div><div class="hm" style="left:902px;top:172px;background:rgba(160,210,185,.6)"></div><div class="hm" style="left:918px;top:140px;background:rgba(170,215,195,.35)"></div><div class="hm" style="left:918px;top:156px;background:rgba(170,215,195,.35)"></div><div class="hm" style="left:870px;top:124px;background:rgba(225,225,170,.3)"></div><div class="hm" style="left:886px;top:124px;background:rgba(225,225,170,.35)"></div><div class="hm" style="left:902px;top:124px;background:rgba(225,225,170,.3)"></div><div class="hm" style="left:758px;top:172px;background:#e0cd78"></div><div class="hm" style="left:774px;top:172px;background:#f2bf40"></div><div class="hm" style="left:790px;top:172px;background:#eec878"></div><div class="hm" style="left:758px;top:188px;background:#dcd27a"></div><div class="hm" style="left:774px;top:188px;background:#f2c044"></div><div class="hm" style="left:790px;top:188px;background:#e6cc7a"></div><div class="hm" style="left:758px;top:156px;background:rgba(238,215,150,.5)"></div><div class="hm" style="left:774px;top:156px;background:rgba(238,215,150,.5)"></div><div class="hm" style="left:790px;top:156px;background:rgba(220,225,200,.4)"></div><div class="hm" style="left:742px;top:172px;background:rgba(170,215,190,.45)"></div><div class="hm" style="left:742px;top:188px;background:rgba(170,215,190,.45)"></div><div class="hm" style="left:742px;top:204px;background:rgba(190,225,190,.5)"></div><div class="hm" style="left:758px;top:204px;background:rgba(200,225,180,.55)"></div><div class="hm" style="left:774px;top:204px;background:rgba(205,220,170,.55)"></div><div class="hm" style="left:790px;top:204px;background:rgba(170,215,200,.45)"></div>
</div>
</div>
<div id="m0" class="t" style="left:780.9px;top:265.9px;font-size:11.88px;color:#2e2e2e;font-weight:normal;font-style:italic;transform:scaleX(0.9059);letter-spacing:0.4px;text-shadow:0 0 2px #fff,0 0 2px #fff,0 0 2px #fff,0 0 3px #fff">ASIEN</div>
<div id="m1" class="t" style="left:1420.9px;top:265.9px;font-size:11.88px;color:#2e2e2e;font-weight:normal;font-style:italic;transform:scaleX(0.9059);letter-spacing:0.4px;text-shadow:0 0 2px #fff,0 0 2px #fff,0 0 2px #fff,0 0 3px #fff">ASIEN</div>
<div id="m2" class="t" style="left:638.0px;top:293.1px;font-size:11.59px;color:#2e2e2e;font-weight:normal;font-style:italic;transform:scaleX(0.9002);letter-spacing:0.4px;text-shadow:0 0 2px #fff,0 0 2px #fff,0 0 2px #fff,0 0 3px #fff">EUROPA</div>
<div id="m3" class="t" style="left:1918.0px;top:293.1px;font-size:11.59px;color:#2e2e2e;font-weight:normal;font-style:italic;transform:scaleX(0.9002);letter-spacing:0.4px;text-shadow:0 0 2px #fff,0 0 2px #fff,0 0 2px #fff,0 0 3px #fff">EUROPA</div>
<div id="m4" class="t" style="left:1052.0px;top:302.6px;font-size:11.88px;color:#2e2e2e;font-weight:normal;font-style:italic;transform:scaleX(0.9157);letter-spacing:0.4px;text-shadow:0 0 2px #fff,0 0 2px #fff,0 0 2px #fff,0 0 3px #fff">NORDAMERIKA</div>
<div id="m5" class="t" style="left:1692.0px;top:302.6px;font-size:11.88px;color:#2e2e2e;font-weight:normal;font-style:italic;transform:scaleX(0.9157);letter-spacing:0.4px;text-shadow:0 0 2px #fff,0 0 2px #fff,0 0 2px #fff,0 0 3px #fff">NORDAMERIKA</div>
<div id="m6" class="t" style="left:636.7px;top:358.5px;font-size:12.03px;color:#2e2e2e;font-weight:normal;font-style:italic;transform:scaleX(0.8840);letter-spacing:0.4px;text-shadow:0 0 2px #fff,0 0 2px #fff,0 0 2px #fff,0 0 3px #fff">AFRIKA</div>
<div id="m7" class="t" style="left:1276.7px;top:358.5px;font-size:12.03px;color:#2e2e2e;font-weight:normal;font-style:italic;transform:scaleX(0.8840);letter-spacing:0.4px;text-shadow:0 0 2px #fff,0 0 2px #fff,0 0 2px #fff,0 0 3px #fff">AFRIKA</div>
<div id="m8" class="t" style="left:1916.7px;top:358.5px;font-size:12.03px;color:#2e2e2e;font-weight:normal;font-style:italic;transform:scaleX(0.8840);letter-spacing:0.4px;text-shadow:0 0 2px #fff,0 0 2px #fff,0 0 2px #fff,0 0 3px #fff">AFRIKA</div>
<div id="m9" class="t" style="left:1135.5px;top:412.3px;font-size:12.03px;color:#2e2e2e;font-weight:normal;font-style:italic;transform:scaleX(0.8987);letter-spacing:0.4px;text-shadow:0 0 2px #fff,0 0 2px #fff,0 0 2px #fff,0 0 3px #fff">SÜDAMERIKA</div>
<div id="m10" class="t" style="left:1775.5px;top:412.3px;font-size:12.03px;color:#2e2e2e;font-weight:normal;font-style:italic;transform:scaleX(0.8987);letter-spacing:0.4px;text-shadow:0 0 2px #fff,0 0 2px #fff,0 0 2px #fff,0 0 3px #fff">SÜDAMERIKA</div>
<div id="m11" class="t" style="left:839.5px;top:438.4px;font-size:11.88px;color:#2e2e2e;font-weight:normal;font-style:italic;transform:scaleX(0.9075);letter-spacing:0.4px;text-shadow:0 0 2px #fff,0 0 2px #fff,0 0 2px #fff,0 0 3px #fff">OZEANIEN</div>
<div id="m12" class="t" style="left:1479.5px;top:438.4px;font-size:11.88px;color:#2e2e2e;font-weight:normal;font-style:italic;transform:scaleX(0.9075);letter-spacing:0.4px;text-shadow:0 0 2px #fff,0 0 2px #fff,0 0 2px #fff,0 0 3px #fff">OZEANIEN</div>
<div id="m13" class="t" style="left:554.0px;top:412.3px;font-size:12.03px;color:#2e2e2e;font-weight:normal;font-style:italic;transform:scaleX(0.9499);letter-spacing:0.4px;text-shadow:0 0 2px #fff,0 0 2px #fff,0 0 2px #fff,0 0 3px #fff">KA</div>
<div class="olab" style="left:1166px;top:330px">Atlantischer<br>Ozean</div>
<div class="olab" style="left:1806px;top:330px">Atlantischer<br>Ozean</div>
<div class="olab" style="left:751px;top:428px">Indischer<br>Ozean</div>
<div class="olab" style="left:1391px;top:428px">Indischer<br>Ozean</div>
<div class="olab" style="left:984px;top:424px">Pazifischer<br>Ozean</div>
<div class="olab" style="left:1624px;top:424px">Pazifischer<br>Ozean</div>
<div class="olab" style="left:554px;top:331px;text-align:left">ischer<br>ean</div>
<!-- map controls -->
<div class="mbtn" style="left:567px;top:224px;width:96px;height:50px;border-radius:3px 0 0 3px"></div>
<div class="mbtn" style="left:664px;top:224px;width:113px;height:50px;border-radius:0 3px 3px 0"></div>
<div id="karte" class="t" style="left:588.8px;top:238.0px;font-size:20.87px;color:#000;font-weight:bold;transform:scaleX(1.0011);">Karte</div>
<div id="sat" class="t" style="left:685.7px;top:238.0px;font-size:20.87px;color:#565656;font-weight:bold;transform:scaleX(1.0263);">Satellit</div>
<div class="mbtn" style="left:1924px;top:224px;width:50px;height:50px"></div>
<svg class="abs" style="left:1937px;top:237px" width="24" height="24" viewBox="0 0 24 24"><circle cx="12" cy="12" r="10" fill="none" stroke="#666" stroke-width="1.3" stroke-dasharray="4 4"/></svg>
<div class="circ" style="left:1862px;top:354px"></div>
<svg class="abs" style="left:1874px;top:366px" width="26" height="26" viewBox="0 0 26 26"><path d="M13 2 V24 M2 13 H24" stroke="#555" stroke-width="3"/></svg>
<div class="circ" style="left:1924px;top:417px"></div>
<svg class="abs" style="left:1934px;top:427px" width="30" height="30" viewBox="0 0 30 30"><path d="M10.2 6.6 L15.3 2.4 L20.3 6.6 M24.2 10.2 L28.2 14.3 L24.2 18.4 M10.2 23 L15.3 27.4 L20.3 23 M6.4 10.2 L2.4 14.3 L6.4 18.4" fill="none" stroke="#555" stroke-width="2.6"/></svg>
<div class="circ" style="left:1862px;top:478px"></div>
<svg class="abs" style="left:1874px;top:490px" width="26" height="26" viewBox="0 0 26 26"><path d="M2 13 H24" stroke="#555" stroke-width="3"/></svg>
<div class="mbtn" style="left:1924px;top:507px;width:50px;height:50px"></div>
<div class="abs" style="left:567px;top:555px;font-size:22px;font-weight:bold;letter-spacing:-0.5px;white-space:nowrap"><span style="color:#4285f4">G</span><span style="color:#ea4335">o</span><span style="color:#fbbc05">o</span><span style="color:#4285f4">g</span><span style="color:#34a853">l</span><span style="color:#ea4335">e</span></div>
<div class="abs" style="left:1640px;top:569px;width:347px;height:18px;background:rgba(255,255,255,.8);border-radius:0 0 20px 0"></div>
<div id="a0" class="t" style="left:1646.5px;top:570.3px;font-size:12.03px;color:#111;font-weight:bold;transform:scaleX(0.9668);">Kurzbefehle</div>
<div class="abs" style="left:1721px;top:570px;width:1px;height:16px;background:#bbb"></div>
<div id="a1" class="t" style="left:1729.0px;top:570.3px;font-size:12.03px;color:#111;font-weight:normal;transform:scaleX(1.0345);">Kartendaten ©2025</div>
<div class="abs" style="left:1845px;top:570px;width:1px;height:16px;background:#bbb"></div>
<div id="a2" class="t" style="left:1853.0px;top:570.3px;font-size:12.03px;color:#111;font-weight:bold;transform:scaleX(0.9604);">Nutzungsbedingungen</div>

<!-- location input -->
<div class="abs" style="left:554px;top:611.5px;width:710px;height:50.5px;background:#fff;border:1.5px solid #e1e3e7;border-radius:3px"></div>
<div id="loc" class="t" style="left:570.4px;top:626.8px;font-size:19.86px;color:#8f8f8f;font-weight:bold;transform:scaleX(0.9686);">Land oder Stadt eingeben</div>
<svg class="abs" style="left:1228px;top:623px" width="17" height="22" viewBox="0 0 17 22"><path d="M8.5 1 C4 1 1 4.5 1 8.5 C1 13 8.5 21 8.5 21 C8.5 21 16 13 16 8.5 C16 4.5 13 1 8.5 1Z" fill="#9a9a9a"/><circle cx="9" cy="7.6" r="2" fill="#fff"/></svg>

<div id="wf" class="t" style="left:1830.6px;top:684.0px;font-size:20.00px;color:#333;font-weight:normal;transform:scaleX(1.0536);">Weitere Filter</div>
<svg class="abs" style="left:1966px;top:688px" width="14" height="9" viewBox="0 0 14 9"><path d="M7 1 L13 8 L1 8Z" fill="#3a96d8"/></svg>

<div class="sel" style="left:554px;top:729px;width:468.5px;height:49.5px"></div><div id="s0" class="t" style="left:570.0px;top:752.8px;font-size:19.42px;color:#8d8d8d;font-weight:normal;transform:scaleX(0.9883);">Suche nach</div><svg class="abs" style="left:990px;top:746px" width="23" height="14" viewBox="0 0 23 14"><path d="M1.5 1.5 L11.5 12 L21.5 1.5" fill="none" stroke="#8a8a8a" stroke-width="2"/></svg>
<div class="sel" style="left:1036px;top:729px;width:468.5px;height:49.5px"></div><div id="s1" class="t" style="left:1052.0px;top:752.8px;font-size:19.42px;color:#8d8d8d;font-weight:normal;transform:scaleX(1.0135);">Geschlecht</div><svg class="abs" style="left:1472px;top:746px" width="23" height="14" viewBox="0 0 23 14"><path d="M1.5 1.5 L11.5 12 L21.5 1.5" fill="none" stroke="#8a8a8a" stroke-width="2"/></svg>
<div class="sel" style="left:1518px;top:729px;width:468.5px;height:49.5px"></div><div id="s2" class="t" style="left:1534.0px;top:752.8px;font-size:19.42px;color:#8d8d8d;font-weight:normal;transform:scaleX(0.9834);">Sprachen</div><svg class="abs" style="left:1954px;top:746px" width="23" height="14" viewBox="0 0 23 14"><path d="M1.5 1.5 L11.5 12 L21.5 1.5" fill="none" stroke="#8a8a8a" stroke-width="2"/></svg>
<div class="sel" style="left:554px;top:792px;width:468.5px;height:49.5px"></div><div id="s3" class="t" style="left:570.0px;top:815.8px;font-size:19.42px;color:#8d8d8d;font-weight:normal;transform:scaleX(0.9994);">Lebensweise</div><svg class="abs" style="left:990px;top:809px" width="23" height="14" viewBox="0 0 23 14"><path d="M1.5 1.5 L11.5 12 L21.5 1.5" fill="none" stroke="#8a8a8a" stroke-width="2"/></svg>
<div class="sel" style="left:1036px;top:792px;width:468.5px;height:49.5px"></div><div id="s4" class="t" style="left:1052.0px;top:815.8px;font-size:19.42px;color:#8d8d8d;font-weight:normal;transform:scaleX(0.9994);">Kinder</div><svg class="abs" style="left:1472px;top:809px" width="23" height="14" viewBox="0 0 23 14"><path d="M1.5 1.5 L11.5 12 L21.5 1.5" fill="none" stroke="#8a8a8a" stroke-width="2"/></svg>
<div class="sel" style="left:1518px;top:792px;width:468.5px;height:49.5px"></div><div id="s5" class="t" style="left:1534.0px;top:815.8px;font-size:19.42px;color:#8d8d8d;font-weight:normal;transform:scaleX(0.9994);">Ethnie</div><svg class="abs" style="left:1954px;top:809px" width="23" height="14" viewBox="0 0 23 14"><path d="M1.5 1.5 L11.5 12 L21.5 1.5" fill="none" stroke="#8a8a8a" stroke-width="2"/></svg>
<div class="sel" style="left:554px;top:860px;width:468.5px;height:49.5px"></div><div id="s6" class="t" style="left:570.0px;top:883.8px;font-size:19.42px;color:#8d8d8d;font-weight:normal;transform:scaleX(0.9994);">Augenfarbe</div><svg class="abs" style="left:990px;top:877px" width="23" height="14" viewBox="0 0 23 14"><path d="M1.5 1.5 L11.5 12 L21.5 1.5" fill="none" stroke="#8a8a8a" stroke-width="2"/></svg>
<div class="sel" style="left:1036px;top:860px;width:468.5px;height:49.5px"></div><div id="s7" class="t" style="left:1052.0px;top:883.8px;font-size:19.42px;color:#8d8d8d;font-weight:normal;transform:scaleX(0.9994);">Haarfarbe</div><svg class="abs" style="left:1472px;top:877px" width="23" height="14" viewBox="0 0 23 14"><path d="M1.5 1.5 L11.5 12 L21.5 1.5" fill="none" stroke="#8a8a8a" stroke-width="2"/></svg>
<div class="sel" style="left:554px;top:928px;width:468.5px;height:49.5px"></div><div id="s8" class="t" style="left:570.0px;top:951.8px;font-size:19.42px;color:#8d8d8d;font-weight:normal;transform:scaleX(0.9918);">Körper Typ</div><svg class="abs" style="left:990px;top:945px" width="23" height="14" viewBox="0 0 23 14"><path d="M1.5 1.5 L11.5 12 L21.5 1.5" fill="none" stroke="#8a8a8a" stroke-width="2"/></svg>
<div class="sel" style="left:1036px;top:928px;width:468.5px;height:49.5px"></div><div id="s9" class="t" style="left:1052.0px;top:951.8px;font-size:19.42px;color:#8d8d8d;font-weight:normal;transform:scaleX(0.9994);">Sport</div><svg class="abs" style="left:1472px;top:945px" width="23" height="14" viewBox="0 0 23 14"><path d="M1.5 1.5 L11.5 12 L21.5 1.5" fill="none" stroke="#8a8a8a" stroke-width="2"/></svg>
<div class="sel" style="left:1518px;top:928px;width:468.5px;height:49.5px"></div><div id="s10" class="t" style="left:1534.0px;top:951.8px;font-size:19.42px;color:#8d8d8d;font-weight:normal;transform:scaleX(0.9994);">Mit mRNA geimpft</div><svg class="abs" style="left:1954px;top:945px" width="23" height="14" viewBox="0 0 23 14"><path d="M1.5 1.5 L11.5 12 L21.5 1.5" fill="none" stroke="#8a8a8a" stroke-width="2"/></svg>
<div class="sel" style="left:1036px;top:996px;width:468.5px;height:49.5px"></div><div id="s11" class="t" style="left:1052.0px;top:1019.8px;font-size:19.42px;color:#8d8d8d;font-weight:normal;transform:scaleX(0.9994);">Tattoos &amp; Piercings</div><svg class="abs" style="left:1472px;top:1013px" width="23" height="14" viewBox="0 0 23 14"><path d="M1.5 1.5 L11.5 12 L21.5 1.5" fill="none" stroke="#8a8a8a" stroke-width="2"/></svg>
<div class="sel" style="left:1518px;top:996px;width:468.5px;height:49.5px"></div><div id="s12" class="t" style="left:1534.0px;top:1019.8px;font-size:19.42px;color:#8d8d8d;font-weight:normal;transform:scaleX(0.9994);">Schulabschluss</div><svg class="abs" style="left:1954px;top:1013px" width="23" height="14" viewBox="0 0 23 14"><path d="M1.5 1.5 L11.5 12 L21.5 1.5" fill="none" stroke="#8a8a8a" stroke-width="2"/></svg>
<div class="sel" style="left:554px;top:1064px;width:468.5px;height:49.5px"></div><div id="s13" class="t" style="left:570.0px;top:1087.8px;font-size:19.42px;color:#8d8d8d;font-weight:normal;transform:scaleX(0.9931);">Sternzeichen</div><svg class="abs" style="left:990px;top:1081px" width="23" height="14" viewBox="0 0 23 14"><path d="M1.5 1.5 L11.5 12 L21.5 1.5" fill="none" stroke="#8a8a8a" stroke-width="2"/></svg>
<div class="sel" style="left:1036px;top:1064px;width:468.5px;height:49.5px"></div><div id="s14" class="t" style="left:1052.0px;top:1087.8px;font-size:19.42px;color:#8d8d8d;font-weight:normal;transform:scaleX(0.9994);">Alkohol</div><svg class="abs" style="left:1472px;top:1081px" width="23" height="14" viewBox="0 0 23 14"><path d="M1.5 1.5 L11.5 12 L21.5 1.5" fill="none" stroke="#8a8a8a" stroke-width="2"/></svg>
<div class="sel" style="left:1518px;top:1064px;width:468.5px;height:49.5px"></div><div id="s15" class="t" style="left:1534.0px;top:1087.8px;font-size:19.42px;color:#8d8d8d;font-weight:normal;transform:scaleX(0.9994);">Zigaretten</div><svg class="abs" style="left:1954px;top:1081px" width="23" height="14" viewBox="0 0 23 14"><path d="M1.5 1.5 L11.5 12 L21.5 1.5" fill="none" stroke="#8a8a8a" stroke-width="2"/></svg>
<!-- sliders -->
<div class="abs" style="left:1530px;top:859.5px;width:446px;height:13.5px;background:#3d9ad8"></div>
<div class="abs" style="left:1517px;top:855px;width:23px;height:22px;background:#f3f4f6;border:1.5px solid #cfd2d6;border-radius:4px"></div>
<div class="abs" style="left:1964.5px;top:855px;width:22.5px;height:22px;background:#f3f4f6;border:1.5px solid #cfd2d6;border-radius:4px"></div>
<div id="kg" class="t" style="left:1528.0px;top:890.3px;font-size:14.93px;color:#555;font-weight:normal;transform:scaleX(1.0264);"><b>Körpergröße:</b> 0 - 201</div>
<div class="abs" style="left:566px;top:996px;width:446px;height:13px;background:#3d9ad8"></div>
<div class="abs" style="left:554px;top:991px;width:22.5px;height:21.5px;background:#f3f4f6;border:1.5px solid #cfd2d6;border-radius:4px"></div>
<div class="abs" style="left:1001.5px;top:991px;width:22px;height:21.5px;background:#f3f4f6;border:1.5px solid #cfd2d6;border-radius:4px"></div>
<div id="alt" class="t" style="left:564.6px;top:1026.7px;font-size:14.49px;color:#555;font-weight:normal;transform:scaleX(1.0739);"><b>Alter:</b> 22 - 93 Jahre</div>
</body></html>
